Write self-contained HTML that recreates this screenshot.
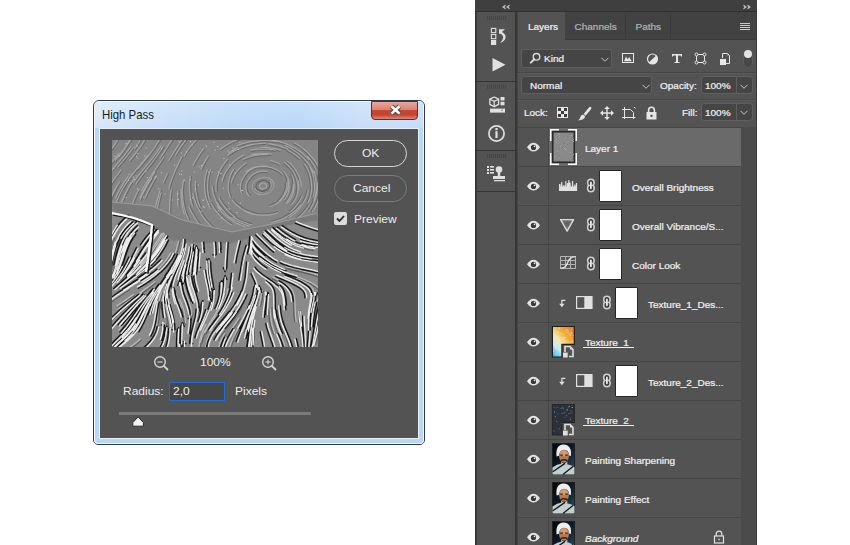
<!DOCTYPE html>
<html><head><meta charset="utf-8"><style>
html,body{margin:0;padding:0;}
body{width:850px;height:545px;overflow:hidden;background:#ffffff;position:relative;font-family:"Liberation Sans", sans-serif;}
.t{position:absolute;white-space:nowrap;}
.ps{-webkit-text-stroke:0.25px currentColor;}
.b{position:absolute;}
svg.b{overflow:visible;}
</style></head><body>
<div class="b" style="left:93px;top:100px;width:332px;height:345px;background:#b9d8f8;border:1px solid #2e3a47;box-sizing:border-box;border-radius:6px 6px 5px 5px;"></div>
<div class="b" style="left:94px;top:101px;width:330px;height:343px;box-shadow:inset 0 0 0 1px rgba(255,255,255,0.85);border-radius:5px 5px 4px 4px;"></div>
<div class="b" style="left:95px;top:102px;width:328px;height:26px;background:linear-gradient(180deg,rgba(255,255,255,0.12),rgba(255,255,255,0) 60%,rgba(0,60,160,0.03)),linear-gradient(90deg,#dcebfb 0%,#cfe4fa 18%,#c2dcf9 45%,#bfdbf9 62%,#cde3fa 85%,#c9e1fa 100%);border-radius:4px 4px 0 0;"></div>
<div class="t" style="left:101.5px;top:108.50px;font-size:12.4px;line-height:12.4px;color:#1b1b1b;transform:scaleX(0.92);transform-origin:0 0;">High Pass</div>
<div class="b" style="left:371px;top:101px;width:47px;height:19px;background:linear-gradient(#e9a79b 0%,#d98373 45%,#c8462f 50%,#c4432e 75%,#d88a79 100%);border:1px solid #6b2a20;box-sizing:border-box;border-radius:0 0 4px 4px;"></div>
<svg class="b" style="left:371px;top:101px" width="47" height="19"><path d="M20.5 5.2 L28.5 12.6 M28.5 5.2 L20.5 12.6" stroke="#474a52" stroke-width="4.6" stroke-linecap="butt"/><path d="M20.5 5.2 L28.5 12.6 M28.5 5.2 L20.5 12.6" stroke="#ffffff" stroke-width="2.6" stroke-linecap="butt"/></svg>
<div class="b" style="left:99px;top:128px;width:320px;height:311px;background:#e6f1fb;"></div>
<div class="b" style="left:100px;top:129px;width:318px;height:309px;background:#535353;"></div>
<svg class="b" style="left:112px;top:140px;overflow:hidden" width="206" height="207" viewBox="0 0 206 207"><rect width="206" height="207" fill="#858585"/><path d="M0 74.0 L0 74.0 L5 75.4 L10 76.8 L15 78.1 L20 79.5 L25 80.9 L30 82.2 L35 83.6 L40 85.0 L45 91.8 L50 94.9 L55 97.9 L60 101.0 L65 101.5 L70 102.0 L75 102.5 L80 103.0 L85 103.5 L90 104.0 L95 104.0 L100 104.0 L105 104.0 L110 104.0 L115 104.0 L120 104.0 L125 102.5 L130 101.0 L135 99.5 L140 98.0 L145 96.5 L150 95.0 L155 93.2 L160 91.4 L165 89.6 L170 87.8 L175 86.0 L180 85.2 L185 84.4 L190 83.6 L195 82.8 L200 82.0 L205 81.2 L206 207 L0 207 Z" fill="#8a8a8a"/><g fill="none" stroke-linecap="round"><path d="M99.3 67.5L98.2 65.3L97.2 63.1L96.3 60.9L95.6 58.5L95.0 56.2L94.5 53.8L94.2 51.4L94.0 49.0L93.8 46.5L93.8 44.1L93.9 41.7L94.2 39.3L94.6 36.9L95.1 34.5L95.8 32.2L96.6 29.9 M98.5 58.7L97.9 56.3L97.4 54.0L97.0 51.6L96.8 49.2L96.8 46.7L96.9 44.3L97.0 41.8L97.2 39.4L97.7 37.0L98.2 34.7L98.9 32.4L99.8 30.1 M29.0 58.4L30.0 56.1L31.1 53.9L32.3 51.7L33.4 49.5L34.7 47.4L36.0 45.3L37.3 43.2L38.6 41.1L40.0 39.0L41.3 36.9L42.7 34.8L44.1 32.7 M156.3 5.1L158.8 5.4L161.2 5.8L163.6 6.4L165.9 7.0L168.3 7.7L170.7 8.4L172.9 9.2L175.2 10.2 M125.9 6.8L128.2 5.9L130.5 5.1L132.9 4.4L135.2 3.7L137.6 3.2L140.0 2.8L142.4 2.4L144.9 2.2L147.4 1.9L149.8 1.8L152.3 1.8L154.7 1.8L157.2 1.9L159.6 2.2L162.0 2.5L164.5 3.0 M204.3 43.1L204.3 45.5L204.2 48.0L203.9 50.4L203.5 52.7L202.9 55.1L202.1 57.4L201.4 59.8L200.5 62.0L199.5 64.2L198.4 66.4L197.1 68.4L195.7 70.5 M23.5 9.8L24.9 7.7L26.3 5.6L27.7 3.4L28.9 1.2L30.2 -1.0 M4.2 21.4L5.7 19.4L7.3 17.5L8.9 15.5L10.4 13.5L12.0 11.5L13.5 9.5 M-1.5 47.1L-0.2 45.0L1.2 42.9L2.6 40.9L4.0 38.8L5.4 36.8L6.9 34.8L8.4 32.9L10.0 30.9 M170.8 32.4L172.3 34.3L173.5 36.3L174.5 38.4L175.2 40.6L175.6 42.9L175.7 45.3L175.8 47.7L175.5 50.1L175.0 52.3L174.2 54.5L173.1 56.6L171.8 58.6 M109.8 68.9L108.4 66.9L107.1 64.8L106.0 62.7L105.0 60.5L104.2 58.2L103.3 55.9L102.6 53.5L102.1 51.2L101.8 48.8L101.6 46.4 M140.9 29.1L143.3 28.4L145.6 27.9L148.0 27.6L150.5 27.3L152.8 27.3L155.3 27.4 M49.1 19.0L50.4 16.9L51.8 14.8L53.2 12.7L54.5 10.6L55.9 8.5L57.2 6.3L58.5 4.2L59.9 2.1L61.2 0.0L62.6 -2.1 M88.1 83.2L86.6 81.2L85.2 79.2L83.9 77.2L82.6 75.1L81.3 72.9L80.2 70.8L79.1 68.6L78.2 66.3 M73.3 16.7L74.6 14.5L75.9 12.5L77.3 10.4L78.7 8.5L80.2 6.5L81.8 4.6L83.4 2.7L85.1 0.9L86.8 -0.9 M158.0 21.8L160.4 22.5L162.7 23.3L165.0 24.1L167.3 25.2 M148.8 8.5L151.2 8.5L153.7 8.7L156.1 8.9L158.5 9.3L161.0 9.6L163.4 10.1L165.8 10.7L168.1 11.4 M7.7 17.6L9.3 15.7L10.8 13.7L12.3 11.7L13.8 9.6L15.2 7.5L16.6 5.4L17.9 3.3L19.3 1.1L20.5 -1.1 M29.1 60.8L30.1 58.5L31.1 56.2L32.2 54.0L33.3 51.8L34.5 49.6L35.7 47.5L37.0 45.3L38.2 43.2L39.5 41.1L40.9 39.0 M21.6 64.3L22.5 61.9L23.5 59.7L24.5 57.4L25.5 55.1L26.5 52.9L27.7 50.7 M82.3 26.1L83.3 23.9L84.5 21.7L85.7 19.6L87.0 17.5L88.3 15.4L89.7 13.4L91.2 11.4L92.7 9.5 M30.8 51.1L32.1 49.0L33.3 46.8L34.6 44.7L36.0 42.7L37.4 40.6L38.8 38.5L40.2 36.5L41.6 34.4L43.0 32.3L44.4 30.3L45.8 28.2L47.2 26.1L48.6 24.1L50.0 22.0L51.4 19.9L52.8 17.8 M116.6 16.3L118.6 14.8L120.7 13.5L122.8 12.3L124.9 11.1L127.1 10.1L129.4 9.1L131.7 8.3L134.0 7.6L136.4 6.8L138.7 6.2L141.1 5.7L143.5 5.3L146.0 5.0L148.4 4.7L150.8 4.6L153.3 4.6 M31.2 35.6L32.8 33.6L34.3 31.7L35.9 29.7L37.5 27.8L39.1 25.8L40.6 23.8L42.1 21.8L43.6 19.8L45.1 17.8L46.6 15.7L48.0 13.6L49.4 11.6L50.8 9.5L52.1 7.4 M65.1 29.6L66.1 27.4L67.2 25.1L68.3 22.9L69.4 20.7 M11.4 60.7L12.4 58.5L13.4 56.2L14.5 54.0L15.6 51.8L16.8 49.6L17.9 47.4L19.2 45.3L20.5 43.2 M120.6 43.0L121.3 40.6L122.1 38.4L123.1 36.3L124.4 34.3L125.9 32.4L127.4 30.4L129.0 28.7L130.8 27.1L132.7 25.7L134.8 24.3 M196.9 28.2L198.0 30.4L198.9 32.7L199.6 35.0L200.2 37.3L200.6 39.7L200.9 42.1L201.1 44.6L201.2 47.0L201.2 49.4L201.0 51.8L200.6 54.2L200.0 56.6 M175.2 11.2L177.3 12.4L179.4 13.7L181.4 15.1L183.5 16.5L185.4 18.0L187.2 19.6 M196.3 64.5L195.0 66.6L193.5 68.5L192.0 70.4L190.3 72.2L188.6 74.0L186.8 75.6L185.0 77.2L183.0 78.7 M181.9 4.0L184.1 5.2L186.1 6.5L188.1 7.9L190.1 9.4L192.0 11.0L193.8 12.6L195.5 14.3L197.2 16.2L198.8 18.0L200.4 19.9L201.8 21.8L203.2 23.8L204.5 25.9L205.6 28.1L206.6 30.3L207.5 32.6 M185.4 40.9L185.6 43.4L185.6 45.7L185.4 48.1L185.0 50.4L184.3 52.8L183.6 55.1L182.8 57.3L181.7 59.5L180.4 61.5L179.0 63.4 M7.0 17.8L8.6 15.8L10.1 13.9L11.7 11.8L13.1 9.8L14.6 7.7L15.9 5.6L17.3 3.4L18.6 1.3L19.8 -0.9 M45.6 72.6L46.1 70.1L46.7 67.7L47.2 65.2L47.8 62.8L48.3 60.4L48.9 58.0L49.5 55.6L50.2 53.2 M173.3 42.8L173.5 45.2L173.2 47.5L172.6 49.8L171.7 52.0L170.8 54.2L169.6 56.2L168.2 58.1L166.5 59.8 M1.3 30.6L2.9 28.7L4.5 26.8L6.1 24.8L7.7 22.9L9.3 21.0L10.9 19.1L12.5 17.1L14.0 15.2L15.6 13.2L17.1 11.2L18.6 9.2L20.1 7.1 M179.9 44.4L179.8 46.8L179.5 49.1L178.8 51.4L177.9 53.6L177.0 55.9L175.9 58.0L174.6 59.9L173.0 61.8 M188.7 13.5L190.5 15.1L192.2 16.9L194.0 18.6L195.6 20.5 M52.4 43.5L53.3 41.3L54.3 39.0L55.3 36.7L56.4 34.4 M25.2 44.1L26.6 42.0L28.0 40.0L29.5 38.0L31.0 36.0L32.5 34.1L34.1 32.1L35.6 30.2L37.2 28.2L38.8 26.3L40.4 24.3L41.9 22.3L43.4 20.3 M12.9 47.6L14.2 45.5L15.5 43.4L16.9 41.4L18.4 39.3L19.8 37.4L21.3 35.4L22.9 33.4L24.4 31.5L26.0 29.6L27.6 27.6L29.2 25.7L30.8 23.8L32.4 21.9L34.0 20.0L35.6 18.0L37.2 16.1 M207.7 43.3L207.7 45.8L207.5 48.2L207.2 50.6L206.8 53.0L206.3 55.4L205.5 57.7L204.8 60.1L204.0 62.3L203.0 64.6L201.9 66.7L200.7 68.8L199.4 70.9 M117.7 13.8L119.8 12.4L121.9 11.2L124.0 9.9L126.2 8.8 M-1.2 61.3L-0.2 59.0L0.8 56.7L1.8 54.4L2.9 52.2L4.0 50.0L5.2 47.8L6.4 45.7 M134.6 32.8L136.7 31.4L138.7 30.3L140.9 29.3L143.2 28.6L145.5 28.1L147.9 27.9L150.3 27.8L152.7 28.0L155.1 28.1L157.5 28.5L159.8 29.1L162.0 29.9L164.2 30.9L166.2 32.1L168.1 33.6L169.8 35.2 M4.9 64.0L5.9 61.7L6.8 59.5L7.8 57.2L8.9 55.0L10.0 52.8L11.2 50.6L12.4 48.4L13.6 46.3L14.9 44.2L16.2 42.1L17.6 40.0L19.0 38.0L20.5 36.0L22.0 34.0 M195.0 49.4L194.6 51.8L193.9 54.1L193.1 56.4L192.2 58.6L191.1 60.7L189.8 62.8L188.4 64.8L187.0 66.8L185.4 68.7L183.8 70.4L182.0 72.1L180.2 73.7L178.2 75.1L176.2 76.5 M77.7 79.3L76.6 77.0L75.7 74.8L74.9 72.5L74.1 70.2L73.5 67.8L73.0 65.4L72.6 63.0L72.3 60.6L72.0 58.1L71.8 55.7L71.6 53.2L71.6 50.8L71.7 48.3L71.9 45.9L72.2 43.4L72.6 41.0 M171.5 23.4L173.5 24.9L175.3 26.5L176.9 28.2L178.5 30.1L179.8 32.0L181.0 34.1L182.0 36.3L183.0 38.6L183.7 40.8L184.2 43.1L184.5 45.5L184.6 47.8L184.4 50.2L184.0 52.6 M179.0 36.0L179.9 38.3L180.5 40.6L180.8 42.9L180.9 45.3L180.7 47.6L180.2 50.0L179.8 52.4L179.1 54.7L178.1 56.8L177.0 58.9L175.6 60.8L174.0 62.7 M81.7 65.4L80.9 63.1L80.3 60.8L79.7 58.4L79.3 56.0L79.1 53.6L78.9 51.1L78.7 48.6L78.7 46.2L78.7 43.8L78.9 41.3L79.2 38.9L79.6 36.5 M8.0 70.8L8.8 68.5L9.7 66.2L10.6 63.8L11.5 61.5L12.5 59.3L13.5 57.0L14.5 54.7L15.6 52.5L16.7 50.3L17.9 48.1L19.1 46.0L20.4 43.9L21.7 41.8L23.1 39.7 M189.0 55.7L188.0 57.9L186.8 60.0L185.5 62.0L184.0 63.9L182.5 65.9L180.9 67.7L179.2 69.4L177.3 71.0 M157.0 41.9L157.9 43.9L157.8 45.9L156.9 47.7L155.4 49.0L153.3 49.8L151.2 50.7L149.1 50.8L147.0 50.3L145.2 49.2L143.7 47.5 M159.1 1.1L161.6 1.5L164.0 2.0L166.4 2.6L168.7 3.3L171.0 4.1L173.3 5.0L175.6 6.0L177.8 7.0L180.0 8.0L182.2 9.2L184.3 10.5L186.3 11.8L188.3 13.2L190.2 14.8 M-1.5 62.5L-0.5 60.2L0.5 58.0L1.5 55.7L2.6 53.5L3.7 51.3L4.8 49.1L6.0 46.9L7.3 44.8L8.6 42.7 M42.9 74.4L43.6 72.0L44.2 69.5L44.7 67.1L45.4 64.7L46.0 62.3L46.6 59.9L47.3 57.5L48.0 55.1L48.7 52.7L49.5 50.3 M137.5 84.8L135.1 84.1L132.8 83.3L130.5 82.4L128.3 81.4L126.0 80.4L123.9 79.3L121.7 78.1L119.7 76.7 M-1.6 25.8L0.0 23.9L1.7 22.0L3.3 20.1L4.9 18.1L6.4 16.2L8.0 14.2 M27.2 29.2L28.8 27.2L30.4 25.3L32.0 23.4L33.6 21.5L35.2 19.5L36.8 17.6L38.3 15.6L39.8 13.5L41.3 11.5L42.7 9.5L44.2 7.4L45.5 5.2L46.9 3.1L48.2 1.0L49.4 -1.2 M138.3 55.4L136.8 53.5L135.8 51.5L135.2 49.3L135.0 47.1L135.2 44.9L135.9 42.7L137.0 40.8L138.6 38.9L140.1 37.1L141.8 35.6L143.8 34.4L145.9 33.4L148.1 32.8L150.4 32.4L152.8 32.4L155.2 32.6 M67.3 66.3L67.1 63.8L67.0 61.4L66.9 58.9L66.9 56.4L66.9 54.0L67.1 51.5 M101.4 86.6L99.6 84.9L97.9 83.1L96.2 81.3L94.6 79.4L93.2 77.5L91.7 75.5L90.4 73.4L89.2 71.3L88.0 69.2L86.8 67.0L85.8 64.8L84.9 62.5L84.1 60.2L83.4 57.9L82.8 55.5L82.3 53.1 M174.8 22.3L176.7 23.9L178.4 25.6L180.0 27.3L181.5 29.2L182.8 31.2L184.0 33.4L185.2 35.5L186.1 37.7L186.9 40.0L187.4 42.3L187.8 44.6L187.9 47.1 M57.9 21.0L59.2 18.8L60.5 16.7L61.8 14.6L63.1 12.5L64.5 10.4L65.8 8.3L67.1 6.2L68.5 4.1L69.9 2.1L71.4 0.0 M187.9 63.7L186.4 65.7L184.8 67.5L183.0 69.2L181.2 70.7L179.3 72.2L177.3 73.6L175.2 74.8L173.0 76.1L170.9 77.2L168.7 78.2L166.4 79.1L164.1 79.8L161.7 80.5L159.3 81.0 M194.7 17.6L196.3 19.5L197.8 21.4L199.1 23.5L200.5 25.5L201.7 27.6L202.8 29.8 M90.2 29.8L91.2 27.6L92.3 25.4L93.5 23.2L94.7 21.1L96.0 19.0L97.4 17.0 M89.2 66.6L88.3 64.4L87.4 62.1L86.7 59.7L86.2 57.4L85.7 54.9L85.2 52.5L84.9 50.1L84.7 47.7L84.6 45.3L84.6 42.8 M204.9 34.5L205.4 36.9L205.8 39.3L206.3 41.7L206.5 44.2 M111.4 41.3L112.0 39.0L112.8 36.7L113.8 34.5L114.9 32.4L116.2 30.4L117.6 28.4L119.2 26.6L120.8 24.7L122.5 23.0L124.4 21.4L126.3 20.0L128.3 18.6L130.4 17.4L132.6 16.3 M-1.3 12.4L0.2 10.4L1.7 8.4L3.1 6.3L4.5 4.2L5.9 2.0L7.1 -0.1 M44.6 15.0L46.0 12.9L47.4 10.8L48.8 8.7L50.1 6.6 M130.7 52.6L130.0 50.3L129.7 48.0L129.8 45.7L130.2 43.4L130.9 41.3L132.1 39.1L133.2 37.0L134.5 35.1L136.1 33.4L137.9 31.9L139.9 30.6L142.1 29.5 M156.0 73.8L153.5 74.0L151.1 74.0L148.7 73.9L146.3 73.6L143.9 73.1L141.6 72.5L139.3 71.8L137.0 70.9L134.7 70.0L132.5 68.9L130.4 67.7L128.4 66.4L126.5 64.9L124.7 63.3L123.1 61.6L121.6 59.7 M131.5 20.5L133.8 19.5L136.0 18.6L138.3 17.9L140.7 17.3L143.1 16.8L145.5 16.4L147.9 16.0L150.3 15.9L152.8 15.8L155.2 15.9 M28.1 9.4L29.6 7.3L30.9 5.2L32.3 3.0L33.5 0.8L34.7 -1.4 M139.6 16.1L142.0 15.6L144.4 15.3L146.8 15.0L149.3 15.0L151.8 14.9L154.2 14.9L156.6 15.1L159.1 15.4 M73.4 73.7L72.8 71.3L72.2 69.0L71.7 66.6L71.3 64.1L71.0 61.7L70.7 59.2L70.5 56.8L70.4 54.3L70.4 51.9L70.4 49.4 M136.8 71.4L134.5 70.3L132.5 69.1L130.5 67.8L128.5 66.3L126.6 64.8L124.8 63.2L123.2 61.4L121.7 59.5 M138.9 11.6L141.3 11.1L143.7 10.7L146.1 10.5L148.6 10.4L151.0 10.4L153.5 10.4L155.9 10.5L158.4 10.7L160.8 11.1L163.2 11.6 M139.9 83.6L137.5 82.9L135.2 82.2L132.9 81.4L130.6 80.4L128.3 79.5L126.1 78.4L124.0 77.3L121.9 76.0 M133.7 85.6L131.4 84.8L129.2 83.9L126.9 82.8L124.8 81.7L122.7 80.5L120.6 79.2L118.6 77.7L116.6 76.3L114.7 74.8L112.9 73.1L111.2 71.4L109.6 69.6L108.0 67.7L106.6 65.7 M192.8 26.7L194.0 28.9L195.1 31.1L196.0 33.3L196.7 35.6L197.3 37.9L197.7 40.3L198.1 42.8L198.3 45.2L198.4 47.6L198.3 50.0L198.0 52.4L197.5 54.8 M174.3 40.5L174.7 42.8L174.8 45.2L174.6 47.5L174.1 49.7L173.2 51.9L172.1 53.9L170.7 55.9L169.3 57.9L167.7 59.6L165.9 61.1L164.0 62.5L161.9 63.6L159.7 64.6L157.4 65.4 M118.9 76.5L117.0 75.0L115.3 73.3L113.6 71.6L112.0 69.7L110.4 67.8L108.9 65.9L107.5 63.9L106.3 61.8 M64.6 15.8L65.9 13.7L67.2 11.6L68.5 9.5L69.9 7.5L71.3 5.4L72.8 3.4L74.2 1.4L75.8 -0.5 M123.8 75.9L121.8 74.4L119.9 72.9L118.1 71.2L116.4 69.5L114.9 67.6L113.3 65.7L111.8 63.8L110.5 61.8L109.4 59.7L108.3 57.4 M22.8 42.8L24.2 40.7L25.6 38.7L27.1 36.7L28.6 34.8L30.2 32.8L31.8 30.9L33.3 29.0L34.9 27.1L36.5 25.1L38.1 23.2L39.7 21.2L41.3 19.3L42.8 17.2L44.3 15.2 M18.6 21.5L20.2 19.5L21.8 17.6L23.4 15.6L24.9 13.6L26.4 11.6L27.9 9.6L29.4 7.5L30.8 5.4L32.2 3.3L33.5 1.2 M165.6 71.5L163.3 72.3L160.9 72.9L158.6 73.3L156.2 73.6L153.7 73.8L151.3 73.8L148.8 73.8L146.4 73.7L144.0 73.4L141.6 73.0L139.3 72.4L136.9 71.7 M191.7 24.9L193.0 26.9L194.2 29.0L195.2 31.2L196.1 33.5L196.8 35.8L197.4 38.1L197.8 40.5L198.0 42.9L198.2 45.4L198.3 47.8L198.1 50.2L197.8 52.6L197.4 54.9L196.7 57.3L196.0 59.5L195.0 61.8 M6.6 28.0L8.2 26.1L9.8 24.2L11.4 22.3L13.0 20.4L14.6 18.4L16.2 16.5L17.7 14.5L19.3 12.5L20.8 10.5L22.3 8.5 M59.0 79.7L58.9 77.2L58.8 74.8L58.8 72.3L58.8 69.8L58.9 67.3L59.0 64.8L59.1 62.4L59.2 59.9L59.5 57.4L59.7 55.0L60.1 52.5L60.5 50.1 M120.2 83.8L118.1 82.5L116.1 81.1L114.2 79.6L112.3 78.0L110.6 76.3L108.9 74.6L107.2 72.8L105.6 70.9L104.1 69.0L102.7 67.0L101.4 65.0L100.2 62.8 M57.9 49.3L58.6 46.9L59.3 44.6L60.0 42.2L60.8 39.9L61.7 37.6L62.6 35.2L63.5 32.9L64.5 30.6L65.5 28.4L66.5 26.1L67.5 23.9L68.6 21.7L69.8 19.5L71.0 17.3 M172.3 6.7L174.6 7.7L176.8 8.8L178.9 10.0L181.0 11.2L183.0 12.6L185.0 14.1L186.8 15.6L188.6 17.3L190.4 19.0L192.1 20.7L193.7 22.6L195.2 24.5L196.6 26.5L197.8 28.6L199.0 30.7L200.0 32.9 M200.4 31.5L201.2 33.8L201.9 36.1L202.4 38.5L202.7 40.9L202.9 43.3L202.9 45.8L202.9 48.2L202.8 50.6L202.5 53.0L202.0 55.4L201.4 57.7L200.6 60.1 M34.0 58.6L35.1 56.3L36.1 54.1L37.3 51.9L38.4 49.6L39.6 47.4L40.7 45.2L41.9 43.1L43.1 40.9L44.4 38.7L45.6 36.6 M109.1 10.3L111.1 8.8L113.1 7.4L115.2 6.1L117.3 4.9L119.4 3.7L121.6 2.7L123.9 1.7L126.2 0.8L128.5 -0.1L130.8 -0.9L133.2 -1.6 M105.4 51.3L105.2 48.9L105.2 46.5L105.3 44.1L105.7 41.7L106.2 39.3L106.8 37.0L107.7 34.7L108.5 32.4L109.5 30.2L110.7 28.1L111.9 26.0L113.4 24.1L114.9 22.2L116.6 20.4 M119.5 56.9L118.6 54.6L118.0 52.3L117.6 50.0L117.5 47.6L117.5 45.3L117.9 42.8L118.2 40.4L118.7 38.1L119.5 35.9L120.5 33.7L121.7 31.6L123.1 29.6 M4.7 58.8L5.7 56.5L6.8 54.3L7.9 52.1L9.1 49.9L10.4 47.8L11.6 45.6L12.9 43.5L14.2 41.4L15.6 39.4L17.1 37.3" stroke="#6a6a6a" stroke-width="1.1"/><path d="M98.1 68.1L97.0 65.9L96.0 63.6L95.1 61.3L94.3 58.9L93.7 56.5L93.2 54.0L92.9 51.6L92.7 49.1L92.5 46.6L92.5 44.1L92.6 41.6L92.9 39.1L93.3 36.6L93.8 34.2L94.5 31.8L95.4 29.4 M97.2 59.1L96.6 56.6L96.1 54.2L95.7 51.7L95.5 49.2L95.5 46.7L95.6 44.2L95.7 41.7L96.0 39.2L96.4 36.8L97.0 34.3L97.7 32.0L98.5 29.6 M27.8 57.8L28.9 55.6L30.0 53.3L31.1 51.1L32.3 48.9L33.6 46.7L34.9 44.6L36.2 42.5L37.5 40.4L38.9 38.3L40.2 36.2L41.6 34.1L43.0 32.0 M156.5 3.8L159.0 4.1L161.4 4.6L163.9 5.1L166.3 5.8L168.7 6.4L171.1 7.2L173.4 8.0L175.7 9.0 M125.4 5.6L127.8 4.7L130.1 3.8L132.5 3.1L134.9 2.5L137.4 1.9L139.8 1.5L142.3 1.1L144.8 0.9L147.3 0.6L149.8 0.5L152.3 0.5L154.8 0.5L157.3 0.7L159.7 0.9L162.2 1.2L164.7 1.7 M205.6 43.1L205.6 45.6L205.5 48.1L205.2 50.5L204.7 53.0L204.1 55.4L203.4 57.8L202.6 60.2L201.7 62.5L200.7 64.8L199.5 67.0L198.2 69.2L196.8 71.2 M22.4 9.0L23.9 7.0L25.2 4.9L26.5 2.7L27.8 0.6L29.0 -1.6 M3.2 20.5L4.7 18.6L6.3 16.7L7.9 14.7L9.4 12.7L10.9 10.7L12.4 8.7 M-2.6 46.4L-1.3 44.3L0.1 42.2L1.5 40.1L2.9 38.1L4.4 36.1L5.9 34.1L7.4 32.1L8.9 30.1 M171.8 31.6L173.3 33.5L174.7 35.7L175.7 37.9L176.4 40.3L176.9 42.8L177.0 45.3L177.1 47.8L176.8 50.3L176.3 52.7L175.4 55.0L174.2 57.3L172.8 59.3 M108.7 69.7L107.3 67.6L106.0 65.5L104.8 63.2L103.8 61.0L103.0 58.6L102.1 56.3L101.4 53.9L100.8 51.4L100.5 48.9L100.3 46.5 M140.6 27.8L143.0 27.1L145.4 26.6L147.9 26.3L150.4 26.0L152.9 26.0L155.4 26.2 M48.0 18.3L49.4 16.2L50.7 14.1L52.1 12.0L53.4 9.9L54.8 7.8L56.1 5.6L57.4 3.5L58.8 1.4L60.1 -0.7L61.5 -2.8 M87.1 84.0L85.6 82.0L84.1 80.0L82.8 77.9L81.5 75.7L80.2 73.6L79.0 71.4L77.9 69.1L77.0 66.8 M72.2 16.0L73.5 13.9L74.8 11.8L76.2 9.7L77.7 7.7L79.2 5.7L80.8 3.8L82.5 1.9L84.1 0.0L85.9 -1.8 M158.4 20.6L160.8 21.2L163.2 22.1L165.5 22.9L167.8 24.0 M148.8 7.2L151.3 7.2L153.8 7.4L156.3 7.6L158.7 8.0L161.2 8.3L163.7 8.8L166.1 9.4L168.5 10.1 M6.7 16.8L8.3 14.9L9.8 12.9L11.3 10.9L12.7 8.9L14.1 6.8L15.5 4.7L16.8 2.6L18.1 0.4L19.4 -1.7 M27.9 60.2L28.9 57.9L29.9 55.7L31.0 53.4L32.2 51.2L33.4 49.0L34.6 46.8L35.8 44.7L37.1 42.5L38.4 40.4L39.8 38.3 M20.4 63.8L21.3 61.5L22.3 59.2L23.3 56.9L24.3 54.6L25.4 52.3L26.5 50.1 M81.1 25.6L82.2 23.3L83.3 21.1L84.6 18.9L85.9 16.8L87.2 14.7L88.6 12.6L90.1 10.6L91.7 8.7 M29.7 50.5L30.9 48.3L32.2 46.2L33.5 44.0L34.9 41.9L36.3 39.9L37.7 37.8L39.1 35.7L40.5 33.7L41.9 31.6L43.3 29.5L44.7 27.5L46.1 25.4L47.5 23.3L48.9 21.2L50.3 19.2L51.7 17.1 M115.9 15.2L117.9 13.8L120.0 12.4L122.1 11.1L124.3 9.9L126.6 8.9L128.9 7.9L131.3 7.1L133.6 6.3L136.0 5.6L138.4 4.9L140.9 4.4L143.3 4.0L145.8 3.7L148.3 3.4L150.8 3.3L153.3 3.3 M30.2 34.8L31.8 32.8L33.3 30.8L34.9 28.9L36.5 27.0L38.0 25.0L39.6 23.0L41.1 21.0L42.6 19.0L44.0 17.0L45.5 15.0L46.9 12.9L48.3 10.8L49.7 8.7L51.0 6.6 M63.9 29.1L65.0 26.8L66.1 24.6L67.1 22.3L68.3 20.1 M10.2 60.2L11.2 57.9L12.2 55.7L13.3 53.4L14.5 51.2L15.6 49.0L16.8 46.8L18.1 44.6L19.4 42.5 M119.4 42.7L120.0 40.2L120.9 37.9L122.0 35.7L123.3 33.5L124.9 31.6L126.4 29.6L128.1 27.8L130.0 26.1L132.0 24.6L134.1 23.2 M198.1 27.6L199.2 29.9L200.1 32.2L200.9 34.6L201.5 37.0L201.9 39.5L202.2 42.0L202.4 44.5L202.5 47.0L202.5 49.5L202.2 52.0L201.8 54.4L201.3 56.9 M175.8 10.0L178.0 11.3L180.1 12.6L182.2 14.0L184.2 15.4L186.2 17.0L188.1 18.6 M197.4 65.2L196.0 67.3L194.5 69.3L192.9 71.2L191.2 73.1L189.5 74.9L187.7 76.6L185.8 78.2L183.8 79.8 M182.6 2.9L184.7 4.1L186.8 5.5L188.9 6.9L190.9 8.4L192.8 10.0L194.7 11.7L196.4 13.4L198.1 15.3L199.8 17.1L201.4 19.1L202.9 21.1L204.3 23.1L205.6 25.3L206.8 27.5L207.8 29.7L208.7 32.1 M186.6 40.8L186.9 43.3L186.9 45.8L186.7 48.3L186.2 50.7L185.6 53.1L184.9 55.5L183.9 57.9L182.8 60.1L181.5 62.2L180.0 64.2 M6.0 17.0L7.6 15.0L9.1 13.1L10.6 11.1L12.1 9.0L13.5 7.0L14.8 4.9L16.2 2.8L17.4 0.6L18.7 -1.6 M44.3 72.3L44.9 69.8L45.4 67.4L45.9 65.0L46.5 62.5L47.1 60.1L47.6 57.7L48.3 55.2L48.9 52.8 M174.6 42.8L174.8 45.3L174.5 47.7L173.9 50.2L172.9 52.5L172.0 54.8L170.7 56.9L169.2 58.9L167.4 60.7 M0.3 29.8L1.9 27.8L3.5 25.9L5.1 24.0L6.7 22.1L8.3 20.2L9.9 18.2L11.4 16.3L13.0 14.4L14.6 12.4L16.1 10.4L17.6 8.4L19.0 6.4 M181.2 44.4L181.1 46.9L180.7 49.4L180.1 51.8L179.1 54.1L178.2 56.4L177.0 58.6L175.6 60.7L174.0 62.6 M189.5 12.5L191.4 14.2L193.1 16.0L194.9 17.7L196.6 19.6 M51.2 43.0L52.1 40.7L53.1 38.5L54.2 36.2L55.2 33.9 M24.2 43.4L25.6 41.3L27.0 39.2L28.5 37.2L30.0 35.2L31.5 33.2L33.1 31.3L34.6 29.3L36.2 27.4L37.8 25.5L39.3 23.5L40.9 21.5L42.4 19.5 M11.8 46.9L13.1 44.8L14.4 42.7L15.9 40.6L17.3 38.6L18.8 36.6L20.3 34.6L21.9 32.6L23.4 30.7L25.0 28.7L26.6 26.8L28.2 24.9L29.8 23.0L31.4 21.0L33.0 19.1L34.6 17.2L36.2 15.3 M209.0 43.3L209.0 45.8L208.8 48.3L208.5 50.8L208.1 53.3L207.5 55.7L206.8 58.1L206.1 60.5L205.2 62.8L204.2 65.1L203.1 67.4L201.8 69.5L200.5 71.6 M117.0 12.7L119.1 11.3L121.2 10.1L123.4 8.8L125.6 7.6 M-2.4 60.7L-1.4 58.4L-0.4 56.2L0.6 53.9L1.7 51.6L2.8 49.4L4.0 47.2L5.3 45.0 M133.9 31.7L136.0 30.3L138.2 29.1L140.5 28.1L142.9 27.4L145.3 26.9L147.8 26.6L150.3 26.5L152.8 26.7L155.3 26.8L157.8 27.2L160.2 27.8L162.5 28.7L164.8 29.8L166.9 31.1L168.9 32.6L170.7 34.3 M3.7 63.6L4.7 61.2L5.6 58.9L6.7 56.7L7.7 54.4L8.8 52.2L10.0 50.0L11.3 47.8L12.5 45.6L13.8 43.5L15.1 41.4L16.5 39.3L17.9 37.2L19.4 35.2L20.9 33.2 M196.3 49.6L195.8 52.1L195.2 54.5L194.4 56.9L193.4 59.2L192.2 61.4L190.9 63.5L189.4 65.5L188.0 67.6L186.4 69.5L184.7 71.4L182.9 73.1L181.0 74.7L179.0 76.2L176.9 77.6 M76.5 79.8L75.5 77.6L74.5 75.3L73.6 72.9L72.9 70.5L72.3 68.1L71.7 65.7L71.3 63.2L71.0 60.7L70.7 58.2L70.5 55.7L70.3 53.3L70.3 50.8L70.4 48.3L70.6 45.8L70.9 43.3L71.3 40.8 M172.3 22.4L174.3 23.9L176.2 25.5L177.9 27.3L179.5 29.3L180.9 31.3L182.1 33.5L183.2 35.8L184.2 38.1L185.0 40.5L185.5 42.9L185.8 45.4L185.9 47.9L185.7 50.4L185.3 52.8 M180.3 35.6L181.1 37.9L181.8 40.4L182.1 42.8L182.2 45.3L182.0 47.8L181.5 50.3L181.0 52.7L180.3 55.1L179.3 57.4L178.1 59.6L176.6 61.6L175.0 63.5 M80.5 65.8L79.7 63.5L79.0 61.1L78.5 58.6L78.1 56.2L77.8 53.7L77.6 51.2L77.4 48.7L77.4 46.2L77.4 43.7L77.6 41.2L77.9 38.7L78.3 36.3 M6.7 70.4L7.6 68.0L8.5 65.7L9.4 63.4L10.3 61.0L11.3 58.7L12.3 56.5L13.3 54.2L14.4 51.9L15.6 49.7L16.7 47.5L18.0 45.3L19.3 43.2L20.6 41.1L22.0 39.0 M190.2 56.2L189.2 58.5L187.9 60.7L186.6 62.7L185.0 64.7L183.5 66.7L181.8 68.6L180.1 70.3L178.2 71.9 M158.3 41.4L159.2 43.7L159.1 46.2L158.0 48.5L156.1 50.1L153.8 51.0L151.4 51.9L148.9 52.1L146.5 51.5L144.4 50.2L142.7 48.4 M159.4 -0.2L161.8 0.3L164.3 0.8L166.7 1.4L169.1 2.1L171.5 2.9L173.8 3.8L176.1 4.8L178.4 5.8L180.6 6.9L182.8 8.1L185.0 9.4L187.1 10.7L189.1 12.2L191.0 13.8 M-2.7 62.0L-1.7 59.7L-0.7 57.4L0.3 55.2L1.4 52.9L2.5 50.7L3.7 48.5L4.9 46.3L6.2 44.1L7.5 42.0 M41.7 74.1L42.3 71.6L42.9 69.2L43.5 66.8L44.1 64.4L44.7 61.9L45.4 59.5L46.0 57.1L46.7 54.7L47.4 52.3L48.2 49.9 M137.1 86.1L134.7 85.4L132.3 84.6L130.0 83.6L127.7 82.6L125.5 81.6L123.2 80.4L121.1 79.2L119.0 77.8 M-2.6 25.0L-1.0 23.1L0.7 21.2L2.3 19.2L3.9 17.3L5.4 15.4L7.0 13.4 M26.2 28.3L27.8 26.4L29.4 24.5L31.0 22.6L32.6 20.7L34.2 18.7L35.8 16.8L37.3 14.8L38.8 12.8L40.2 10.8L41.7 8.7L43.1 6.6L44.4 4.5L45.8 2.4L47.1 0.3L48.3 -1.9 M137.2 56.2L135.7 54.2L134.6 52.0L133.9 49.6L133.7 47.1L134.0 44.6L134.8 42.2L136.0 40.0L137.6 38.1L139.1 36.2L141.0 34.5L143.2 33.2L145.5 32.2L147.9 31.5L150.3 31.1L152.8 31.1L155.3 31.3 M66.0 66.4L65.8 63.9L65.7 61.4L65.6 58.9L65.6 56.4L65.6 53.9L65.8 51.4 M100.5 87.5L98.7 85.8L96.9 84.0L95.2 82.2L93.6 80.3L92.1 78.3L90.7 76.2L89.3 74.1L88.1 72.0L86.8 69.8L85.7 67.6L84.6 65.3L83.7 63.0L82.8 60.6L82.1 58.2L81.5 55.8L81.0 53.4 M175.6 21.3L177.5 22.9L179.4 24.6L181.0 26.5L182.6 28.5L183.9 30.6L185.1 32.8L186.3 34.9L187.3 37.2L188.1 39.6L188.7 42.0L189.1 44.5L189.2 47.0 M56.8 20.3L58.1 18.2L59.4 16.0L60.7 13.9L62.0 11.8L63.4 9.7L64.7 7.6L66.1 5.5L67.4 3.4L68.9 1.3L70.3 -0.7 M188.9 64.6L187.4 66.5L185.7 68.4L183.9 70.1L182.0 71.7L180.0 73.3L178.0 74.7L175.8 75.9L173.7 77.2L171.4 78.4L169.2 79.4L166.8 80.3L164.5 81.1L162.0 81.7L159.6 82.3 M195.7 16.7L197.3 18.6L198.8 20.7L200.2 22.7L201.6 24.8L202.8 27.0L204.0 29.2 M89.0 29.3L90.0 27.0L91.1 24.8L92.3 22.6L93.6 20.4L94.9 18.3L96.3 16.2 M88.0 67.1L87.1 64.8L86.2 62.5L85.5 60.1L84.9 57.6L84.4 55.2L83.9 52.7L83.6 50.3L83.4 47.8L83.3 45.3L83.3 42.8 M206.1 34.2L206.7 36.6L207.1 39.1L207.5 41.5L207.8 44.0 M110.1 41.0L110.8 38.6L111.6 36.2L112.6 33.9L113.8 31.7L115.1 29.6L116.6 27.6L118.2 25.7L119.9 23.8L121.6 22.1L123.5 20.4L125.5 18.9L127.6 17.5L129.7 16.2L132.0 15.1 M-2.3 11.7L-0.9 9.6L0.6 7.6L2.0 5.6L3.4 3.5L4.7 1.4L6.0 -0.8 M43.5 14.2L44.9 12.2L46.3 10.1L47.7 8.0L49.0 5.9 M129.4 52.9L128.7 50.5L128.4 48.1L128.5 45.6L128.9 43.1L129.7 40.7L130.9 38.5L132.1 36.3L133.5 34.3L135.2 32.5L137.1 30.9L139.2 29.5L141.5 28.4 M156.0 75.1L153.6 75.3L151.1 75.3L148.6 75.1L146.1 74.8L143.6 74.4L141.2 73.8L138.8 73.0L136.5 72.1L134.2 71.2L131.9 70.1L129.7 68.9L127.7 67.5L125.7 65.9L123.8 64.3L122.1 62.4L120.6 60.5 M131.0 19.3L133.3 18.3L135.6 17.4L138.0 16.6L140.4 16.0L142.9 15.5L145.3 15.1L147.8 14.7L150.3 14.6L152.8 14.5L155.3 14.6 M27.1 8.7L28.5 6.6L29.8 4.5L31.1 2.4L32.4 0.2L33.6 -2.0 M139.4 14.9L141.8 14.4L144.3 14.0L146.8 13.8L149.3 13.7L151.8 13.6L154.3 13.6L156.8 13.8L159.2 14.1 M72.2 74.1L71.5 71.7L70.9 69.2L70.4 66.8L70.0 64.3L69.7 61.8L69.4 59.4L69.2 56.9L69.1 54.4L69.1 51.9L69.1 49.4 M136.2 72.6L133.9 71.5L131.8 70.2L129.7 68.9L127.7 67.3L125.7 65.8L123.9 64.1L122.2 62.3L120.6 60.3 M138.6 10.3L141.1 9.8L143.5 9.4L146.0 9.2L148.5 9.1L151.0 9.1L153.5 9.1L156.0 9.2L158.5 9.4L161.0 9.8L163.4 10.3 M139.6 84.8L137.2 84.2L134.8 83.4L132.4 82.6L130.1 81.6L127.8 80.7L125.6 79.6L123.4 78.4L121.2 77.1 M133.3 86.9L130.9 86.0L128.6 85.1L126.4 84.0L124.1 82.9L122.0 81.6L119.9 80.2L117.9 78.8L115.8 77.3L113.9 75.7L112.0 74.1L110.2 72.3L108.6 70.5L107.0 68.5L105.5 66.5 M193.9 26.1L195.2 28.3L196.3 30.5L197.2 32.9L197.9 35.2L198.5 37.7L199.0 40.1L199.4 42.6L199.6 45.1L199.7 47.6L199.6 50.1L199.3 52.6L198.8 55.0 M175.6 40.2L176.0 42.7L176.1 45.2L175.9 47.7L175.3 50.1L174.4 52.4L173.2 54.6L171.8 56.7L170.3 58.7L168.6 60.5L166.7 62.2L164.7 63.6L162.5 64.8L160.2 65.8L157.8 66.6 M118.1 77.5L116.2 75.9L114.3 74.2L112.6 72.4L111.0 70.5L109.4 68.6L107.8 66.7L106.4 64.6L105.2 62.4 M63.5 15.2L64.8 13.0L66.1 10.9L67.4 8.8L68.8 6.7L70.3 4.7L71.7 2.7L73.2 0.6L74.7 -1.3 M123.0 76.9L121.0 75.4L119.0 73.9L117.2 72.2L115.5 70.4L113.9 68.4L112.3 66.5L110.8 64.5L109.4 62.4L108.2 60.2L107.1 58.0 M21.7 42.1L23.1 40.0L24.6 38.0L26.1 36.0L27.6 34.0L29.2 32.0L30.8 30.1L32.3 28.2L33.9 26.2L35.5 24.3L37.1 22.4L38.7 20.4L40.2 18.5L41.8 16.5L43.2 14.5 M17.6 20.6L19.2 18.7L20.8 16.8L22.3 14.8L23.9 12.8L25.3 10.8L26.8 8.8L28.3 6.8L29.7 4.7L31.1 2.6L32.4 0.5 M166.0 72.7L163.6 73.5L161.2 74.1L158.8 74.6L156.3 74.9L153.8 75.1L151.3 75.1L148.8 75.1L146.3 75.0L143.8 74.7L141.3 74.3L138.9 73.7L136.5 72.9 M192.8 24.2L194.1 26.3L195.3 28.4L196.4 30.7L197.3 33.0L198.1 35.4L198.6 37.9L199.1 40.3L199.3 42.8L199.5 45.3L199.6 47.8L199.4 50.3L199.1 52.8L198.6 55.2L198.0 57.6L197.2 60.0L196.2 62.3 M5.6 27.2L7.2 25.3L8.8 23.4L10.4 21.5L12.0 19.5L13.6 17.6L15.2 15.7L16.7 13.7L18.3 11.7L19.8 9.7L21.2 7.7 M57.7 79.8L57.6 77.3L57.5 74.8L57.5 72.3L57.5 69.8L57.6 67.3L57.7 64.8L57.8 62.3L57.9 59.8L58.2 57.3L58.4 54.8L58.8 52.3L59.2 49.9 M119.5 84.9L117.4 83.6L115.3 82.1L113.4 80.6L111.5 79.0L109.6 77.3L107.9 75.5L106.2 73.7L104.6 71.8L103.0 69.8L101.6 67.7L100.3 65.6L99.1 63.4 M56.7 49.0L57.3 46.6L58.0 44.2L58.8 41.8L59.6 39.4L60.5 37.1L61.4 34.8L62.3 32.5L63.3 30.1L64.3 27.8L65.3 25.6L66.4 23.3L67.5 21.1L68.6 18.9L69.8 16.7 M172.8 5.5L175.1 6.5L177.4 7.6L179.6 8.8L181.7 10.2L183.8 11.6L185.8 13.1L187.7 14.7L189.5 16.4L191.3 18.1L193.1 19.9L194.7 21.7L196.3 23.7L197.7 25.8L199.0 27.9L200.1 30.1L201.2 32.4 M201.7 31.1L202.5 33.4L203.1 35.8L203.6 38.3L204.0 40.8L204.2 43.3L204.2 45.8L204.2 48.3L204.1 50.7L203.7 53.2L203.3 55.7L202.6 58.1L201.9 60.5 M32.8 58.0L33.9 55.8L35.0 53.5L36.1 51.3L37.2 49.0L38.4 46.8L39.6 44.6L40.8 42.4L42.0 40.3L43.2 38.1L44.5 35.9 M108.3 9.3L110.3 7.8L112.4 6.3L114.5 5.0L116.6 3.7L118.9 2.6L121.1 1.5L123.4 0.5L125.7 -0.4L128.1 -1.3L130.4 -2.1L132.8 -2.9 M104.1 51.4L103.9 48.9L103.9 46.4L104.0 43.9L104.4 41.4L104.9 39.0L105.6 36.6L106.5 34.3L107.3 31.9L108.4 29.6L109.5 27.4L110.9 25.3L112.3 23.3L113.9 21.4L115.6 19.5 M118.3 57.4L117.4 55.0L116.7 52.6L116.3 50.1L116.2 47.6L116.2 45.1L116.6 42.7L116.9 40.2L117.5 37.8L118.3 35.4L119.3 33.1L120.6 30.9L122.0 28.9 M3.5 58.2L4.6 55.9L5.6 53.7L6.8 51.5L8.0 49.3L9.2 47.1L10.5 44.9L11.8 42.8L13.1 40.7L14.5 38.6L16.0 36.6" stroke="#a6a6a6" stroke-width="1.1"/></g><g fill="none" transform="rotate(-12 151 46)"><ellipse cx="151" cy="46" rx="7" ry="5.5" stroke="#666" stroke-width="1.2"/><ellipse cx="151" cy="46" rx="3.5" ry="2.8" stroke="#a8a8a8" stroke-width="1"/><ellipse cx="151" cy="46" rx="11" ry="8.5" stroke="#a0a0a0" stroke-width="1"/></g><path d="M124.4 72.0h1v1h-1z M35.0 36.9h1v1h-1z M16.5 33.8h1v1h-1z M106.0 70.2h1v1h-1z M61.9 24.7h1v1h-1z M24.9 48.2h1v1h-1z M120.3 10.1h1v1h-1z M101.3 1.8h1v1h-1z M25.2 17.7h1v1h-1z M89.3 25.1h1v1h-1z M46.2 48.3h1v1h-1z M13.6 57.0h1v1h-1z M16.0 39.8h1v1h-1z M32.6 15.4h1v1h-1z M68.9 34.1h1v1h-1z M48.8 32.2h1v1h-1z M68.8 12.5h1v1h-1z M26.6 49.2h1v1h-1z M83.0 41.3h1v1h-1z M110.7 47.7h1v1h-1z M111.4 18.1h1v1h-1z M96.3 63.2h1v1h-1z M117.3 24.6h1v1h-1z M40.9 72.0h1v1h-1z M115.4 10.4h1v1h-1z M31.1 56.7h1v1h-1z M33.7 7.6h1v1h-1z M108.2 32.9h1v1h-1z M102.7 9.8h1v1h-1z M52.4 53.4h1v1h-1z M2.3 15.7h1v1h-1z M88.7 71.1h1v1h-1z M125.9 9.0h1v1h-1z M65.7 59.1h1v1h-1z M65.4 53.5h1v1h-1z M24.6 5.5h1v1h-1z M13.8 2.9h1v1h-1z M71.7 40.2h1v1h-1z M73.9 11.4h1v1h-1z M24.0 15.9h1v1h-1z M109.2 77.2h1v1h-1z M120.5 7.4h1v1h-1z M60.1 59.6h1v1h-1z M42.5 36.4h1v1h-1z M67.0 33.5h1v1h-1z M78.1 1.0h1v1h-1z M91.1 65.9h1v1h-1z M23.6 35.4h1v1h-1z M96.1 31.6h1v1h-1z M25.4 12.9h1v1h-1z M66.6 1.2h1v1h-1z M116.1 62.5h1v1h-1z M91.6 67.1h1v1h-1z M81.8 31.6h1v1h-1z M77.9 39.3h1v1h-1z M127.7 62.8h1v1h-1z M33.6 71.1h1v1h-1z M96.8 60.7h1v1h-1z M105.9 31.6h1v1h-1z M116.6 68.6h1v1h-1z M90.3 59.8h1v1h-1z M99.5 31.6h1v1h-1z M93.9 5.5h1v1h-1z M44.4 36.6h1v1h-1z M1.4 27.7h1v1h-1z M83.0 48.7h1v1h-1z M30.2 73.7h1v1h-1z M86.6 26.3h1v1h-1z M85.8 44.4h1v1h-1z M69.3 30.4h1v1h-1z M130.0 50.1h1v1h-1z M91.2 59.4h1v1h-1z M127.4 1.8h1v1h-1z M80.0 57.6h1v1h-1z M33.4 31.3h1v1h-1z M6.6 15.2h1v1h-1z M48.8 7.7h1v1h-1z M32.6 70.6h1v1h-1z M71.5 39.6h1v1h-1z M125.7 44.3h1v1h-1z M129.4 49.8h1v1h-1z M105.2 5.9h1v1h-1z M77.7 59.2h1v1h-1z M20.8 36.8h1v1h-1z M22.0 38.7h1v1h-1z M79.5 4.6h1v1h-1z M122.9 32.8h1v1h-1z" fill="#cacaca"/><path d="M0.0 62.0 L4.0 62.4 L8.0 62.8 L12.0 63.2 L16.0 63.6 L20.0 64.0 L24.0 64.4 L28.0 64.8 L32.0 65.2 L36.0 65.6 L40.0 66.0 L44.0 67.9 L48.0 69.7 L52.0 71.6 L56.0 73.5 L60.0 75.3 L64.0 77.2 L68.0 79.1 L72.0 80.5 L76.0 81.4 L80.0 82.4 L84.0 83.4 L88.0 84.3 L92.0 85.3 L96.0 86.2 L100.0 87.2 L104.0 88.2 L108.0 89.1 L112.0 90.1 L116.0 91.0 L120.0 92.0 L124.0 91.2 L128.0 90.4 L132.0 89.6 L136.0 88.8 L140.0 88.0 L144.0 87.2 L148.0 86.4 L152.0 85.6 L156.0 84.8 L160.0 84.0 L164.0 83.0 L168.0 82.1 L172.0 81.1 L176.0 80.2 L180.0 79.2 L184.0 78.3 L188.0 77.3 L192.0 76.3 L196.0 75.4 L200.0 74.4 L204.0 73.5 L206.0 80.0 L202.0 80.6 L198.0 81.3 L194.0 81.9 L190.0 82.6 L186.0 83.2 L182.0 83.9 L178.0 84.5 L174.0 85.4 L170.0 86.8 L166.0 88.2 L162.0 89.7 L158.0 91.1 L154.0 92.6 L150.0 94.0 L146.0 95.2 L142.0 96.4 L138.0 97.6 L134.0 98.8 L130.0 100.0 L126.0 101.2 L122.0 102.4 L118.0 103.0 L114.0 103.0 L110.0 103.0 L106.0 103.0 L102.0 103.0 L98.0 103.0 L94.0 103.0 L90.0 103.0 L86.0 102.6 L82.0 102.2 L78.0 101.8 L74.0 101.4 L70.0 101.0 L66.0 100.6 L62.0 100.2 L58.0 98.8 L54.0 96.3 L50.0 93.9 L46.0 91.4 L42.0 89.0 L38.0 83.5 L34.0 82.3 L30.0 81.2 L26.0 80.2 L22.0 79.0 L18.0 78.0 L14.0 76.8 L10.0 75.8 L6.0 74.7 L2.0 73.5 Z" fill="#7a7a7a"/><path d="M0.0 62.0 L4.0 62.4 L8.0 62.8 L12.0 63.2 L16.0 63.6 L20.0 64.0 L24.0 64.4 L28.0 64.8 L32.0 65.2 L36.0 65.6 L40.0 66.0 L44.0 67.9 L48.0 69.7 L52.0 71.6 L56.0 73.5 L60.0 75.3 L64.0 77.2 L68.0 79.1 L72.0 80.5 L76.0 81.4 L80.0 82.4 L84.0 83.4 L88.0 84.3 L92.0 85.3 L96.0 86.2 L100.0 87.2 L104.0 88.2 L108.0 89.1 L112.0 90.1 L116.0 91.0 L120.0 92.0 L124.0 91.2 L128.0 90.4 L132.0 89.6 L136.0 88.8 L140.0 88.0 L144.0 87.2 L148.0 86.4 L152.0 85.6 L156.0 84.8 L160.0 84.0 L164.0 83.0 L168.0 82.1 L172.0 81.1 L176.0 80.2 L180.0 79.2 L184.0 78.3 L188.0 77.3 L192.0 76.3 L196.0 75.4 L200.0 74.4 L204.0 73.5" stroke="#9c9c9c" stroke-width="1" fill="none"/><g fill="none" stroke-linecap="round" stroke-linejoin="round"><path d="M-1.3 107.7L-0.5 105.3L0.4 103.0L1.3 100.7L2.3 98.5 M173.2 127.9L175.6 128.7L178.0 129.4L180.5 130.1L182.9 130.8L185.4 131.4L187.8 132.0L190.2 132.5L192.7 133.1L195.1 133.7L197.5 134.3L199.9 135.0L202.2 135.7L204.5 136.5L206.8 137.3 M6.9 170.4L8.8 168.9L10.8 167.4L12.8 165.9L14.8 164.4L16.8 162.9L18.8 161.4L20.8 159.9L22.8 158.5L24.8 157.0L26.9 155.5L28.9 154.1L30.9 152.6L32.9 151.1L35.0 149.6 M48.1 165.1L49.8 169.1L51.4 165.1L51.5 162.6L51.7 160.2L52.1 157.8L52.6 155.5L53.2 153.1L53.8 150.7L54.5 148.4L55.3 146.1L56.3 143.8L57.3 141.6L58.4 139.4L59.5 137.2 M129.5 133.6L129.8 131.1L130.2 128.6L130.6 126.2L131.1 123.8L131.6 121.3L132.1 118.9L132.6 116.5L133.2 114.1L133.9 111.8L134.7 109.4 M-0.2 180.4L1.6 178.7L3.4 177.0L5.2 175.3L7.1 173.7L9.0 172.1L10.9 170.4L12.8 168.9L14.7 167.3L16.6 165.7L18.5 164.1L20.5 162.6L22.4 161.0L24.4 159.5L26.4 157.9L28.3 156.4L30.3 154.8 M9.0 201.2L10.8 199.4L12.5 197.6L14.3 195.8L16.0 193.9L17.6 191.9L19.2 189.9L20.7 187.9L22.2 185.8L23.6 183.7L25.0 181.6L26.4 179.5L27.7 177.3L28.9 175.1L30.2 173.0L31.4 170.8L32.7 168.7 M98.7 198.8L99.8 196.6L101.1 194.5L102.4 192.5L103.8 190.5L105.3 188.6L106.8 186.6L108.4 184.7L110.0 182.8L111.6 180.9L113.2 178.9L114.8 176.9L116.3 175.0L117.9 173.0L119.3 170.9L120.8 168.8L122.2 166.7L123.5 164.5L124.8 162.3L126.0 160.1L127.1 157.8L128.2 155.5L129.2 153.1 M137.8 103.4L139.4 107.5L141.0 103.4L139.4 102.5L139.4 105.0L139.5 102.5L137.9 103.4L138.1 106.1L138.8 108.9L140.1 111.4L141.8 113.4L143.4 115.4L145.2 117.3L147.1 119.1L149.1 120.7L151.1 122.3L153.2 123.8L155.3 125.2L157.4 126.6L159.6 127.9L161.8 129.1 M66.1 159.4L67.1 161.8L68.0 164.1L68.8 166.4L69.6 168.7L70.2 171.0L70.7 173.4L71.2 175.8L71.6 178.2L71.8 180.6L73.6 184.6L73.6 182.1L72.1 183.0 M53.2 152.0L54.0 149.7L54.9 147.4L55.9 145.1L56.9 142.9L58.0 140.7L59.1 138.5L60.3 136.3L61.5 134.1L62.7 131.9L63.9 129.7L65.0 127.5L66.2 125.3L67.3 123.0L68.4 120.7L69.4 118.4L70.4 116.0L71.2 113.6L72.0 111.1L72.6 108.6L73.1 106.1L73.5 103.5L73.7 101.0 M106.5 200.2L107.7 198.0L109.0 196.0L110.4 194.0L111.9 192.0L113.4 190.0L114.9 188.1L116.5 186.1L118.0 184.2L119.6 182.2L121.2 180.3L122.7 178.3L124.2 176.2L125.7 174.2L127.1 172.1L128.5 170.0L129.8 167.8 M118.4 210.1L119.1 207.7L119.8 205.3L120.6 203.0L121.5 200.8L122.5 198.5L123.6 196.3L124.7 194.1L125.8 191.9L127.0 189.7L128.2 187.5 M6.0 167.1L8.1 165.6L10.1 164.2L12.1 162.8L14.2 161.4L16.3 160.0L18.3 158.6L20.4 157.2L22.5 155.8 M202.5 182.9L202.8 180.4L203.2 177.9L203.6 175.5L204.0 173.1L204.5 170.7L205.1 168.3L205.7 165.9L206.3 163.5L207.0 161.1L207.6 158.6L208.2 156.2L208.8 153.6L207.5 152.5L206.3 153.7 M165.5 170.2L165.8 172.7L166.2 175.2L166.7 177.8L167.4 180.3L168.1 182.7L168.9 185.1L169.8 187.5L170.7 189.9L171.7 192.2L172.7 194.5L173.6 196.8L174.6 199.1L175.5 201.4L176.3 203.7L177.0 206.0L177.7 208.4 M132.0 192.4L132.9 190.1L133.7 187.7L134.6 185.4L135.5 183.1L136.5 180.8L137.4 178.4L138.3 176.1L139.2 173.8L140.1 171.5L141.0 169.1 M44.5 192.0L45.2 189.6L45.8 187.1L46.2 184.5L46.6 182.0L46.9 179.5L47.1 177.0L47.3 174.5L47.4 172.0L47.6 169.5L47.9 167.0L48.1 164.6L48.5 162.2L48.9 159.8L49.5 157.4L50.1 155.1L50.9 152.7 M46.8 210.6L48.2 208.5L49.4 206.2L50.5 203.8L51.5 201.4L52.2 198.9L52.8 196.4L53.4 193.9L53.9 191.3L54.2 188.8L54.3 186.2L52.8 185.2L52.8 187.7L52.9 185.2L53.0 187.7L53.0 185.2L53.1 187.7L54.7 183.6 M78.2 137.6L76.6 136.6L76.7 139.1L76.8 136.6L75.3 137.6L75.6 140.2L76.0 142.8L76.6 145.3L77.2 147.8L77.9 150.2L78.7 152.6L79.5 155.0L80.3 157.4L81.1 159.7L81.8 162.1 M148.7 166.2L149.3 163.8L149.8 161.3L150.3 158.8L150.7 156.3L151.0 153.8L149.6 152.7L149.7 155.2L151.5 151.2 M25.2 186.7L26.5 184.6L27.8 182.4L28.9 180.2L30.1 177.9L31.3 175.7L32.4 173.5 M183.0 139.8L185.4 140.6L187.7 141.5L189.9 142.5L192.1 143.6L194.1 144.8L196.1 146.1L197.8 147.6L199.0 149.2L199.7 151.1L199.8 153.4L201.5 157.4L201.7 154.9L201.8 157.4L202.1 154.9L202.2 157.4L202.4 154.9L202.5 157.4L202.8 155.0L202.8 157.5L204.8 153.6 M8.7 141.1L10.3 139.2L11.9 137.2L13.5 135.2L15.0 133.2L16.5 131.1L17.9 129.0L19.2 126.8L20.5 124.7L21.8 122.5L23.1 120.3L24.3 118.1L25.5 115.9L26.7 113.7L27.9 111.6 M-1.5 211.8L0.1 209.9L1.7 208.1L3.4 206.3L5.1 204.5L6.8 202.8L8.6 201.0L10.4 199.3L12.2 197.5L14.0 195.7L15.7 193.9 M39.4 118.2L41.0 116.2L42.5 114.2L44.0 112.1L45.4 110.0L46.8 107.9L48.1 105.8L49.4 103.6L50.6 101.4L51.8 99.1L53.0 96.9L54.1 94.7 M139.1 182.9L139.8 180.6L140.6 178.2L141.3 175.8L142.1 173.5L142.9 171.1L143.7 168.7L144.5 166.3L145.2 163.9L146.0 161.5L146.7 159.1 M176.4 127.9L178.8 128.6L181.3 129.3L183.7 129.9L186.2 130.5L188.6 131.1L191.1 131.6L193.5 132.2L195.9 132.8L198.3 133.3L200.7 134.0L203.1 134.6L205.4 135.4L207.7 136.2 M203.7 204.4L204.3 202.0L204.8 199.6L205.4 197.2L206.0 194.7L206.6 192.3L207.1 189.8L207.6 187.4L208.2 184.9L208.7 182.5L209.2 180.0L209.7 177.6L210.2 175.1 M160.0 167.7L160.1 170.2L160.2 172.8L160.5 175.3L161.0 177.9L161.5 180.4L162.2 182.9L163.0 185.3L163.8 187.7L164.7 190.1L165.6 192.5L166.6 194.8L167.7 197.1L168.7 199.3L169.6 201.6L170.6 203.9L171.4 206.2 M94.4 193.4L95.6 191.2L96.8 189.1L98.2 187.1L99.5 185.0L100.9 182.9L102.3 180.9L103.8 178.8L105.2 176.7L106.5 174.6L107.8 172.4L109.1 170.3L110.4 168.1L111.6 165.8L112.7 163.5L113.8 161.2L114.7 158.8L115.6 156.4L116.4 153.9L117.0 151.4L117.5 149.0 M64.3 206.9L65.9 211.0L65.9 208.5L65.9 211.0L67.5 207.0L67.6 204.5L67.7 202.0L67.8 199.5L67.9 197.0L68.0 194.5L68.1 192.0L66.5 191.0L64.9 192.0 M50.0 209.2L51.1 206.9L52.1 204.5L53.0 202.0L53.6 199.6L54.3 197.1L54.9 194.6L55.3 192.0L55.5 189.4L54.0 188.4L54.0 190.9L54.1 188.4L54.1 190.9L54.2 188.4L54.3 190.9L56.0 186.9 M28.0 155.1L30.1 153.6L32.1 152.1L34.1 150.6L36.1 149.1L38.0 147.5L40.0 146.0L42.0 144.4L43.9 142.8 M120.0 191.2L121.4 189.2L122.8 187.1L124.2 185.0L125.6 183.0L127.0 180.9L128.3 178.8 M62.8 154.5L63.5 156.9L64.3 159.3L65.2 161.7L66.1 164.0L67.0 166.4L67.9 168.7 M156.6 169.3L158.2 173.4L158.2 170.9L158.3 173.4L158.3 170.9L156.7 171.8L156.9 174.4L157.1 176.9L157.4 179.4L157.8 182.0L158.3 184.5L158.9 187.0L159.7 189.5L160.5 191.9L161.4 194.2 M88.4 208.3L86.9 207.4L87.1 209.9L88.7 205.9L88.9 203.5L89.3 201.2L89.9 198.8L90.5 196.4L91.3 194.2L92.2 191.9L93.2 189.7L94.2 187.5L95.4 185.3 M9.8 146.3L11.7 144.7L13.6 143.0L15.5 141.4L17.4 139.7L19.3 138.0L21.1 136.3L23.0 134.6L24.8 132.9L26.6 131.2L28.4 129.4L30.2 127.6L32.0 125.8L33.7 124.0L35.4 122.1 M0.2 211.0L1.9 209.2L3.7 207.4L5.4 205.7L7.2 204.0L9.1 202.3L10.9 200.6L12.7 198.8L14.5 197.1L16.3 195.3L18.0 193.4L19.7 191.5L21.3 189.5L22.9 187.5L24.3 185.4L25.7 183.2L27.1 181.1L28.3 178.9 M80.4 135.6L78.9 134.6L78.9 137.1L80.6 133.1L80.8 130.7L81.1 128.2L81.5 125.8L82.0 123.4L82.4 120.9L82.8 118.4L83.2 115.9L83.6 113.4L83.9 110.9L84.1 108.3L82.6 107.3L82.6 109.8L84.3 105.8 M22.8 133.9L24.6 132.1L26.4 130.3L28.1 128.5L29.8 126.6L31.5 124.8L33.2 122.8L34.8 120.9L36.4 118.9L37.9 116.9L39.4 114.9L40.9 112.9L42.4 110.8L43.8 108.8L45.2 106.7L46.6 104.6L48.0 102.5L49.3 100.3L50.6 98.1L51.9 96.0L53.1 93.8 M8.0 191.2L9.7 189.3L11.3 187.4L12.9 185.5L14.5 183.6L16.1 181.6L17.6 179.6L19.2 177.7L20.7 175.7L22.3 173.7L23.8 171.8L25.4 169.8L26.9 167.9L28.5 166.0L30.1 164.0L31.7 162.1L33.3 160.3L35.0 158.4L36.6 156.6L38.3 154.7L40.0 152.9L41.7 151.0L43.4 149.2 M136.9 197.2L137.3 194.7L137.8 192.3L138.3 189.9L138.9 187.5L139.5 185.1L140.1 182.7L140.7 180.3L141.4 177.9L142.1 175.5L142.8 173.1L143.6 170.7L144.3 168.4 M15.4 210.9L17.4 209.5L19.5 208.0L21.5 206.6L23.6 205.1L25.6 203.5L27.5 201.9L29.4 200.1 M52.4 165.4L52.9 167.9L53.4 170.3L54.0 172.8L54.5 175.2L55.0 177.6L55.5 180.1L55.9 182.5L56.3 184.9L56.5 187.3L56.6 189.8 M183.6 138.0L185.9 138.8L188.3 139.6L190.6 140.5L192.8 141.4L195.0 142.4L197.3 143.5L199.4 144.6L201.4 145.8L203.4 147.2L205.2 148.8 M107.8 210.3L108.3 207.9L109.0 205.6L109.6 203.2L110.5 201.0L111.5 198.8L112.6 196.7L113.9 194.6 M-1.1 143.4L0.2 141.3L1.5 139.2L2.8 136.9L4.0 134.7L5.2 132.4L6.2 130.1L7.2 127.7L8.1 125.3 M24.2 121.5L25.5 119.3L26.7 117.1L28.0 115.0L29.2 112.8L30.5 110.7L31.8 108.5 M16.8 189.8L18.4 187.8L19.9 185.8L21.3 183.7L22.7 181.6L24.1 179.5L25.5 177.4L26.8 175.2L28.2 173.1L29.5 171.0L30.9 168.9L32.2 166.9L33.6 164.8L35.0 162.8L36.4 160.7L37.9 158.7L39.4 156.8L40.9 154.8L42.5 152.9L44.0 150.9L45.6 149.0 M90.1 202.9L90.6 200.5L91.3 198.2L92.2 196.0L93.2 193.8L94.3 191.6L95.4 189.5L96.7 187.4L98.0 185.3L99.4 183.2L100.7 181.1L102.1 179.0L103.4 176.9L104.8 174.7L106.1 172.6L107.4 170.4L108.6 168.1L109.7 165.8L110.8 163.5L111.8 161.1L112.7 158.7L113.4 156.3L114.1 153.8 M91.8 207.4L93.5 211.4L93.6 208.9L93.7 211.4L95.4 207.5L95.7 205.1L96.3 202.8L96.8 200.4L97.5 198.1L98.4 195.9L99.5 193.8L100.7 191.7L102.0 189.6 M160.3 138.7L162.5 139.8L164.7 141.0L167.0 142.1L169.2 143.3L171.3 144.4L173.4 145.7L175.4 147.0L177.1 148.5L178.5 150.2L179.5 152.1L180.2 154.3L180.9 156.6L181.2 158.9L181.4 161.3L181.5 163.8L181.5 166.3L181.6 168.8L181.7 171.3L181.8 173.8L182.0 176.4L182.3 178.9L182.6 181.4 M47.5 129.9L49.3 128.1L51.1 126.2L52.7 124.3L54.3 122.3L55.8 120.3L57.3 118.1L58.7 116.0L59.9 113.7 M162.4 106.5L164.4 108.0L166.5 109.5L168.6 110.9L170.9 112.2L173.2 113.4L175.5 114.5L177.9 115.4L180.3 116.3L182.7 117.1L185.2 117.7L187.6 118.4L190.1 119.0L192.6 119.5L195.1 119.9L197.6 120.3L200.1 120.7L202.6 121.0L205.0 121.3L207.5 121.7 M-0.7 131.8L-0.0 129.4L0.6 126.9L1.2 124.5L1.7 122.0L2.3 119.6L2.8 117.1L3.4 114.7L4.0 112.3L4.6 109.9L5.3 107.6L6.1 105.2L6.9 102.9L7.8 100.7L8.8 98.5 M26.6 128.6L28.3 126.7L29.9 124.8L31.5 122.8L33.1 120.9L34.6 118.9L36.2 116.9L37.6 114.8L39.1 112.8L40.5 110.7L42.0 108.7L43.4 106.6L44.8 104.5L46.2 102.4L47.6 100.3L48.9 98.2L50.3 96.1L51.6 93.9 M-0.8 162.3L1.2 160.8L3.3 159.4L5.3 157.9L7.3 156.5L9.4 155.1L11.5 153.8L13.6 152.4L15.7 151.1L17.8 149.7 M164.8 93.8L166.8 95.4L168.8 96.9L170.8 98.4L172.9 99.9L175.1 101.2L177.3 102.5L179.6 103.7L181.9 104.8L184.2 105.8L186.6 106.8L189.0 107.6L191.5 108.4L194.0 109.0L196.5 109.6L199.0 110.0L201.5 110.4 M83.0 135.0L81.4 134.1L81.5 136.6L81.6 134.1L80.1 135.1L80.3 137.7L80.6 140.2L81.1 142.7L81.6 145.3L82.3 147.7L83.0 150.1 M64.6 113.7L65.5 111.3L66.3 108.8L66.9 106.4L67.5 103.9L68.0 101.4 M68.8 139.6L70.5 143.7L70.6 141.2L70.7 143.7L70.8 141.2L70.9 143.7L71.0 141.2L69.5 142.2L69.8 144.8L70.3 147.4L71.0 149.9L71.8 152.3L72.6 154.7L73.5 157.1L74.3 159.4L75.2 161.8L76.0 164.1L76.7 166.4L77.3 168.7L77.7 171.1L78.0 173.5L79.8 177.4L81.4 173.4" stroke="#5c5c5c" stroke-width="1.1"/><path d="M-2.8 107.1L-2.0 104.8L-1.1 102.4L-0.2 100.1L0.8 97.8 M173.7 126.4L176.1 127.2L178.5 127.9L180.9 128.6L183.3 129.2L185.7 129.8L188.2 130.4L190.6 131.0L193.0 131.6L195.5 132.2L197.9 132.8L200.3 133.4L202.7 134.2L205.1 135.0L207.4 135.8 M5.9 169.2L7.8 167.6L9.8 166.1L11.8 164.6L13.8 163.1L15.8 161.6L17.8 160.1L19.9 158.6L21.9 157.2L23.9 155.7L25.9 154.2L28.0 152.8L30.0 151.3L32.0 149.8L34.0 148.3 M49.7 165.0L49.8 167.5L49.8 165.0L49.9 162.5L50.1 160.0L50.5 157.6L51.0 155.1L51.6 152.7L52.2 150.3L53.0 147.9L53.8 145.5L54.8 143.2L55.8 140.9L56.9 138.7L58.1 136.5 M127.9 133.3L128.2 130.8L128.6 128.4L129.0 125.9L129.5 123.5L130.0 121.0L130.5 118.6L131.1 116.1L131.7 113.7L132.4 111.3L133.1 108.9 M-1.3 179.3L0.5 177.5L2.3 175.8L4.2 174.1L6.0 172.5L7.9 170.8L9.8 169.2L11.7 167.6L13.7 166.0L15.6 164.4L17.5 162.9L19.5 161.3L21.5 159.8L23.4 158.2L25.4 156.7L27.4 155.1L29.3 153.6 M7.8 200.0L9.6 198.3L11.4 196.5L13.1 194.7L14.8 192.8L16.4 190.9L18.0 189.0L19.4 187.0L20.9 184.9L22.3 182.9L23.7 180.8L25.0 178.6L26.3 176.5L27.5 174.3L28.8 172.2L30.1 170.0L31.3 167.9 M97.3 198.1L98.4 195.9L99.7 193.7L101.1 191.6L102.5 189.6L104.0 187.6L105.6 185.6L107.2 183.7L108.8 181.8L110.4 179.8L111.9 177.9L113.5 175.9L115.1 174.0L116.6 172.0L118.0 170.0L119.5 167.9L120.8 165.8L122.2 163.7L123.4 161.6L124.6 159.3L125.7 157.1L126.7 154.8L127.7 152.5 M139.4 103.4L139.4 105.9L139.4 103.4L139.4 100.9L139.4 103.4L139.4 100.9L139.5 103.4L139.7 105.9L140.3 108.3L141.5 110.5L143.0 112.4L144.6 114.4L146.3 116.2L148.2 117.9L150.1 119.5L152.0 121.0L154.1 122.5L156.1 123.9L158.2 125.2L160.4 126.5L162.6 127.7 M67.6 158.9L68.5 161.2L69.5 163.5L70.3 165.9L71.1 168.2L71.8 170.6L72.3 173.1L72.8 175.5L73.2 178.0L73.4 180.5L73.5 183.0L73.6 180.5L73.7 183.0 M51.7 151.5L52.5 149.1L53.4 146.8L54.4 144.5L55.5 142.2L56.6 140.0L57.7 137.8L58.9 135.6L60.1 133.4L61.3 131.2L62.4 129.0L63.6 126.7L64.8 124.5L65.9 122.3L67.0 120.0L68.0 117.7L68.9 115.4L69.7 113.1L70.4 110.7L71.1 108.2L71.5 105.8L71.9 103.3L72.1 100.8 M105.1 199.4L106.3 197.2L107.7 195.1L109.1 193.0L110.6 191.0L112.1 189.0L113.7 187.1L115.2 185.1L116.8 183.2L118.3 181.2L119.9 179.3L121.4 177.3L122.9 175.3L124.4 173.3L125.8 171.2L127.2 169.1L128.5 167.0 M116.8 209.6L117.6 207.2L118.3 204.8L119.1 202.5L120.1 200.2L121.1 197.9L122.2 195.6L123.3 193.4L124.4 191.2L125.6 189.0L126.8 186.8 M5.1 165.8L7.1 164.3L9.2 162.9L11.2 161.5L13.3 160.0L15.4 158.6L17.4 157.2L19.5 155.8L21.6 154.5 M200.9 182.7L201.3 180.2L201.6 177.7L202.0 175.2L202.4 172.8L203.0 170.3L203.5 167.9L204.1 165.5L204.8 163.1L205.4 160.6L206.1 158.2L206.7 155.8L207.2 153.4L207.4 150.9L207.9 153.3 M167.1 170.0L167.4 172.5L167.8 175.0L168.3 177.4L168.9 179.8L169.6 182.2L170.4 184.6L171.3 186.9L172.2 189.3L173.2 191.6L174.2 193.9L175.1 196.2L176.1 198.5L177.0 200.8L177.8 203.2L178.6 205.6L179.2 208.0 M130.5 191.9L131.4 189.5L132.3 187.2L133.1 184.8L134.0 182.5L135.0 180.2L135.9 177.9L136.8 175.5L137.7 173.2L138.6 170.9L139.6 168.6 M42.9 191.6L43.7 189.2L44.2 186.7L44.7 184.3L45.0 181.8L45.3 179.3L45.5 176.8L45.7 174.3L45.8 171.8L46.0 169.4L46.3 166.9L46.5 164.4L46.9 161.9L47.4 159.5L47.9 157.0L48.6 154.6L49.4 152.2 M45.5 209.7L46.8 207.6L48.0 205.4L49.1 203.2L49.9 200.8L50.7 198.4L51.3 196.0L51.8 193.6L52.3 191.1L52.6 188.6L52.7 186.1L52.7 183.6L52.8 186.1L52.8 183.6L52.9 186.1L52.9 183.6L53.0 186.1L53.1 183.6 M76.6 137.5L76.6 135.0L76.7 137.5L76.8 135.0L76.9 137.5L77.1 140.0L77.6 142.5L78.2 144.9L78.7 147.3L79.4 149.7L80.2 152.1L81.0 154.5L81.8 156.8L82.6 159.2L83.3 161.6 M147.2 165.9L147.7 163.4L148.2 161.0L148.7 158.5L149.1 156.1L149.4 153.6L149.6 151.1L149.7 153.6L149.9 151.1 M23.8 185.9L25.1 183.8L26.4 181.6L27.5 179.4L28.7 177.2L29.9 175.0L31.0 172.7 M183.6 138.3L185.9 139.1L188.3 140.1L190.6 141.1L192.8 142.2L195.0 143.4L197.0 144.8L198.9 146.5L200.4 148.4L201.3 150.8L201.4 153.3L201.5 155.8L201.8 153.3L201.9 155.8L202.1 153.3L202.2 155.8L202.5 153.3L202.6 155.8L202.9 153.4L202.9 155.9L203.2 153.4 M7.5 140.1L9.1 138.2L10.7 136.2L12.2 134.2L13.7 132.2L15.1 130.2L16.5 128.1L17.8 126.0L19.2 123.9L20.5 121.7L21.7 119.6L22.9 117.4L24.1 115.2L25.3 113.0L26.5 110.8 M-2.7 210.8L-1.1 208.9L0.5 207.0L2.2 205.2L3.9 203.4L5.7 201.6L7.5 199.9L9.3 198.1L11.1 196.4L12.8 194.6L14.6 192.8 M38.2 117.2L39.7 115.3L41.2 113.3L42.7 111.2L44.1 109.2L45.4 107.1L46.7 104.9L48.0 102.8L49.2 100.6L50.4 98.4L51.6 96.2L52.7 94.0 M137.6 182.5L138.3 180.1L139.1 177.7L139.8 175.3L140.6 173.0L141.4 170.6L142.2 168.2L142.9 165.8L143.7 163.4L144.4 161.1L145.1 158.7 M176.9 126.4L179.3 127.1L181.7 127.7L184.1 128.4L186.5 128.9L189.0 129.5L191.4 130.1L193.9 130.6L196.3 131.2L198.7 131.8L201.1 132.4L203.5 133.1L205.9 133.9L208.3 134.7 M202.1 204.1L202.7 201.6L203.3 199.2L203.9 196.8L204.5 194.3L205.0 191.9L205.6 189.5L206.1 187.0L206.6 184.6L207.1 182.1L207.6 179.7L208.1 177.2L208.7 174.8 M161.6 167.6L161.7 170.1L161.8 172.6L162.1 175.1L162.5 177.6L163.1 180.0L163.7 182.4L164.5 184.8L165.3 187.2L166.2 189.5L167.1 191.8L168.1 194.1L169.1 196.4L170.1 198.7L171.1 201.0L172.0 203.3L172.9 205.7 M93.0 192.6L94.2 190.4L95.5 188.3L96.8 186.2L98.2 184.1L99.6 182.0L101.0 180.0L102.4 177.9L103.8 175.8L105.2 173.7L106.5 171.6L107.8 169.5L109.0 167.3L110.2 165.1L111.3 162.8L112.3 160.6L113.2 158.2L114.1 155.9L114.8 153.5L115.4 151.1L116.0 148.6 M65.9 206.9L65.9 209.4L65.9 206.9L65.9 209.4L66.0 206.9L66.0 204.4L66.1 201.9L66.2 199.4L66.3 196.9L66.4 194.4L66.5 191.9L66.5 189.4L66.5 191.9 M48.6 208.5L49.7 206.2L50.6 203.9L51.4 201.5L52.1 199.1L52.8 196.7L53.3 194.3L53.7 191.8L53.9 189.3L54.0 186.8L54.0 189.3L54.1 186.8L54.2 189.3L54.3 186.8L54.3 189.3L54.4 186.8 M27.1 153.8L29.1 152.3L31.1 150.8L33.1 149.3L35.1 147.8L37.1 146.3L39.0 144.7L41.0 143.2L42.9 141.6 M118.6 190.3L120.0 188.3L121.5 186.2L122.8 184.1L124.2 182.1L125.6 180.0L127.0 177.9 M64.3 154.0L65.0 156.4L65.8 158.8L66.7 161.1L67.6 163.5L68.5 165.8L69.4 168.1 M158.2 169.3L158.2 171.8L158.2 169.3L158.3 171.8L158.3 169.3L158.3 171.8L158.5 174.3L158.7 176.7L159.0 179.2L159.4 181.7L159.9 184.2L160.5 186.6L161.2 189.0L162.0 191.3L162.9 193.7 M86.8 208.3L86.8 205.8L87.0 208.3L87.1 205.8L87.3 203.3L87.7 200.8L88.4 198.4L89.0 196.0L89.8 193.6L90.7 191.3L91.7 189.0L92.8 186.8L94.0 184.6 M8.8 145.1L10.7 143.4L12.6 141.8L14.5 140.2L16.3 138.5L18.2 136.9L20.1 135.2L21.9 133.5L23.7 131.8L25.5 130.0L27.3 128.3L29.1 126.5L30.8 124.7L32.5 122.9L34.2 121.1 M-0.9 209.9L0.8 208.1L2.5 206.3L4.3 204.6L6.1 202.8L8.0 201.1L9.8 199.4L11.6 197.7L13.4 195.9L15.1 194.2L16.8 192.3L18.5 190.4L20.1 188.5L21.6 186.5L23.0 184.5L24.4 182.4L25.7 180.2L26.9 178.1 M78.8 135.5L78.9 133.0L78.9 135.5L79.0 133.0L79.2 130.5L79.6 128.0L80.0 125.5L80.4 123.1L80.8 120.6L81.2 118.2L81.7 115.7L82.0 113.2L82.3 110.7L82.5 108.2L82.6 105.7L82.6 108.2L82.7 105.7 M21.7 132.8L23.5 131.0L25.2 129.2L27.0 127.4L28.7 125.6L30.3 123.7L31.9 121.8L33.5 119.9L35.1 117.9L36.6 116.0L38.1 114.0L39.6 111.9L41.1 109.9L42.5 107.9L43.9 105.8L45.3 103.7L46.6 101.6L47.9 99.5L49.2 97.3L50.5 95.2L51.7 93.0 M6.8 190.2L8.5 188.3L10.1 186.4L11.7 184.5L13.3 182.5L14.8 180.6L16.4 178.6L17.9 176.7L19.5 174.7L21.0 172.7L22.6 170.8L24.1 168.8L25.7 166.9L27.3 164.9L28.9 163.0L30.5 161.1L32.1 159.2L33.8 157.3L35.4 155.5L37.1 153.6L38.8 151.8L40.5 150.0L42.2 148.1 M135.3 196.9L135.8 194.4L136.2 192.0L136.8 189.5L137.3 187.1L137.9 184.7L138.6 182.2L139.2 179.8L139.9 177.4L140.6 175.0L141.3 172.6L142.0 170.3L142.8 167.9 M14.4 209.6L16.5 208.2L18.5 206.7L20.6 205.3L22.6 203.8L24.6 202.3L26.5 200.7L28.3 199.0 M54.0 165.1L54.5 167.5L55.0 170.0L55.5 172.4L56.1 174.9L56.6 177.3L57.1 179.8L57.5 182.2L57.9 184.7L58.1 187.2L58.2 189.7 M184.1 136.5L186.4 137.3L188.8 138.1L191.1 139.0L193.5 139.9L195.7 141.0L198.0 142.0L200.2 143.2L202.3 144.5L204.4 146.0L206.2 147.6 M106.2 210.0L106.7 207.5L107.4 205.1L108.1 202.7L109.0 200.4L110.1 198.1L111.2 195.9L112.5 193.8 M-2.5 142.6L-1.2 140.4L0.2 138.3L1.4 136.2L2.6 134.0L3.7 131.7L4.7 129.4L5.7 127.1L6.6 124.8 M22.8 120.6L24.1 118.5L25.3 116.3L26.6 114.2L27.8 112.0L29.1 109.8L30.4 107.7 M15.6 188.8L17.1 186.8L18.6 184.8L20.0 182.8L21.4 180.7L22.8 178.6L24.1 176.5L25.5 174.4L26.8 172.3L28.2 170.2L29.5 168.1L30.9 166.0L32.3 163.9L33.7 161.8L35.1 159.8L36.6 157.8L38.1 155.8L39.7 153.8L41.2 151.9L42.8 149.9L44.3 148.0 M88.6 202.5L89.1 200.1L89.8 197.7L90.7 195.4L91.7 193.1L92.8 190.8L94.1 188.7L95.3 186.5L96.7 184.4L98.0 182.3L99.4 180.2L100.7 178.1L102.1 176.0L103.4 173.9L104.7 171.7L106.0 169.6L107.2 167.4L108.3 165.2L109.3 162.9L110.3 160.6L111.1 158.2L111.9 155.8L112.5 153.4 M93.4 207.3L93.5 209.8L93.6 207.3L93.7 209.8L93.8 207.3L94.1 204.8L94.7 202.4L95.3 200.0L96.0 197.6L97.0 195.3L98.1 193.0L99.3 190.9L100.7 188.8 M161.0 137.3L163.2 138.4L165.5 139.6L167.7 140.7L169.9 141.9L172.1 143.1L174.3 144.3L176.3 145.7L178.2 147.4L179.8 149.3L181.0 151.5L181.7 153.9L182.4 156.3L182.8 158.7L183.0 161.2L183.1 163.7L183.1 166.2L183.2 168.7L183.3 171.2L183.4 173.7L183.6 176.2L183.8 178.7L184.2 181.2 M46.4 128.7L48.2 127.0L49.9 125.2L51.5 123.3L53.0 121.3L54.6 119.3L56.0 117.3L57.3 115.1L58.5 113.0 M163.4 105.2L165.3 106.7L167.4 108.2L169.5 109.5L171.6 110.8L173.9 111.9L176.1 113.0L178.4 113.9L180.8 114.8L183.2 115.5L185.6 116.2L188.0 116.8L190.4 117.4L192.9 117.9L195.4 118.3L197.8 118.7L200.3 119.1L202.8 119.4L205.3 119.8L207.7 120.1 M-2.3 131.3L-1.6 128.9L-1.0 126.5L-0.4 124.1L0.2 121.7L0.7 119.2L1.3 116.8L1.9 114.3L2.4 111.9L3.1 109.5L3.8 107.1L4.5 104.7L5.4 102.4L6.3 100.1L7.4 97.8 M25.4 127.5L27.1 125.7L28.7 123.8L30.3 121.8L31.8 119.9L33.4 117.9L34.9 115.9L36.3 113.9L37.8 111.9L39.2 109.8L40.7 107.8L42.1 105.7L43.5 103.6L44.9 101.5L46.2 99.5L47.6 97.3L48.9 95.2L50.2 93.1 M-1.7 161.0L0.3 159.5L2.3 158.1L4.4 156.6L6.4 155.2L8.5 153.8L10.6 152.4L12.7 151.1L14.8 149.7L16.9 148.4 M165.8 92.5L167.8 94.1L169.7 95.6L171.7 97.1L173.8 98.5L175.9 99.9L178.1 101.1L180.3 102.3L182.6 103.3L184.8 104.4L187.2 105.3L189.5 106.1L191.9 106.8L194.3 107.5L196.8 108.0L199.2 108.4L201.7 108.8 M81.4 135.0L81.4 132.5L81.5 135.0L81.5 132.5L81.6 135.0L81.9 137.5L82.2 140.0L82.6 142.4L83.2 144.9L83.8 147.3L84.6 149.7 M63.1 113.2L64.0 110.8L64.7 108.4L65.3 106.0L65.9 103.6L66.4 101.1 M70.4 139.6L70.5 142.1L70.6 139.6L70.7 142.1L70.8 139.6L70.9 142.1L71.0 139.6L71.1 142.1L71.4 144.6L71.9 147.0L72.6 149.4L73.3 151.8L74.1 154.2L75.0 156.5L75.8 158.9L76.7 161.2L77.5 163.6L78.3 166.0L78.9 168.4L79.3 170.9L79.6 173.3L79.7 175.8L79.8 173.3" stroke="#bebebe" stroke-width="1.1"/><path d="M102.7 168.5L103.8 166.2L104.6 164.0L105.4 161.7L106.1 159.4L106.7 157.0L107.1 154.6L107.5 152.2L107.9 149.8L108.1 147.4L108.2 144.9L109.9 140.8L111.7 144.9 M56.9 158.1L56.9 155.7L55.4 154.8L55.4 157.3L55.6 154.8L53.9 155.7L54.1 158.3L54.5 160.9L55.1 163.4L55.6 165.9L56.2 168.3L56.9 170.8L57.6 173.2L58.3 175.6L59.0 177.9L59.5 180.3L60.0 182.7 M55.5 156.9L55.6 159.4L55.9 161.8L56.2 164.1L56.7 166.5L57.3 168.9L57.9 171.4L58.5 173.8L59.1 176.2L59.6 178.7L60.1 181.2L60.5 183.7L60.8 186.3 M19.8 189.1L21.2 187.0L22.5 185.0L23.8 182.9L25.0 180.8L26.2 178.6L27.3 176.4L28.5 174.2L29.6 171.9L30.7 169.7L31.9 167.5L33.0 165.2L34.2 163.0 M187.0 171.3L188.7 175.5L188.7 173.0L187.1 173.8L187.2 176.3L187.3 178.9L187.4 181.4L187.7 183.9L187.9 186.4 M188.7 99.3L191.0 100.0L193.4 100.7L195.7 101.3L198.1 101.8L200.5 102.2L203.0 102.6L205.4 102.9L207.9 103.3 M198.2 190.1L198.2 187.6L198.2 185.1L198.3 182.7L198.4 180.2L198.6 177.7L198.8 175.3L199.1 172.8L199.4 170.4L199.8 167.9L200.2 165.5L200.6 163.1L201.1 160.6L201.5 158.1L201.9 155.6 M200.2 205.1L200.8 202.6L201.4 200.2L202.0 197.8L202.6 195.3L203.1 192.9L203.7 190.5L204.2 188.1L204.8 185.6L205.3 183.2L205.8 180.7L206.3 178.3L206.9 175.8 M85.8 181.4L86.6 179.1L87.3 176.7L87.9 174.4L88.4 172.0L88.7 169.6L88.9 167.3L89.0 164.8L90.7 160.6L90.8 163.1L90.9 160.6L91.0 163.1L91.0 160.6L91.1 163.1L89.5 162.3 M143.0 127.2L144.5 129.1L146.1 130.8L147.9 132.3L149.8 133.8L151.8 135.3L153.8 136.7L155.9 138.1L158.0 139.5L160.0 141.0L162.1 142.5L164.1 144.0L166.1 145.6L168.1 147.5L169.8 149.6L171.2 152.0L172.2 154.6L172.7 157.2L173.1 159.8L173.3 162.3L173.5 164.9L173.7 167.4L173.9 169.8 M201.1 186.8L201.3 184.3L201.5 181.9L201.8 179.4L202.1 177.0L202.5 174.5L202.8 172.1L203.2 169.6L203.7 167.2L204.3 164.8L204.8 162.4 M3.5 208.7L5.3 207.0L7.3 205.4L9.2 203.8L11.1 202.2L13.0 200.6L14.9 199.0L16.7 197.3L18.4 195.6L20.1 193.8L21.8 192.0L23.3 190.2L24.7 188.2L26.1 186.2L27.3 184.1L28.5 182.0L29.6 179.8L30.6 177.6L31.6 175.3 M135.4 168.6L136.3 166.3L137.2 164.0L138.1 161.7L138.9 159.4L139.7 157.0L140.4 154.7L140.9 152.4L141.3 149.9L141.7 147.6L143.5 143.6L143.7 146.0L143.8 143.5L144.0 146.0L144.1 143.5L144.3 146.0L142.8 145.2 M127.4 188.8L128.6 186.6L129.8 184.4L130.9 182.2L132.1 180.0L133.3 177.8L134.4 175.5L135.5 173.3L136.7 171.0L137.7 168.7L138.8 166.5 M47.3 208.3L48.5 206.2L49.6 204.0L50.5 201.8L51.2 199.5L51.9 197.2L52.4 194.9L52.7 192.5L53.0 190.1L54.8 186.0L54.8 188.5L53.2 187.6 M1.8 124.9L2.4 122.5L3.1 120.1L3.7 117.6L4.3 115.2L5.0 112.8L5.7 110.3L6.5 107.9L7.3 105.5L8.2 103.1L9.1 100.8L10.2 98.4L11.4 96.1L12.8 93.9L14.2 91.8 M126.8 140.0L127.2 137.5L127.6 135.1L128.0 132.6L128.4 130.1L128.8 127.6L129.2 125.1L129.6 122.7L130.1 120.2L130.6 117.7L131.2 115.2L131.9 112.8L132.6 110.4L133.3 107.9L134.1 105.5 M25.4 135.7L27.3 134.1L29.2 132.4L31.1 130.7L33.0 129.0L34.8 127.3L36.6 125.5L38.4 123.7L40.1 121.8L41.8 119.9L43.4 118.0L45.1 116.1L46.6 114.0L48.1 112.0L49.6 109.8L50.9 107.7L52.2 105.5L53.4 103.2L54.5 100.9 M153.2 90.4L155.0 92.2L156.8 93.9L158.6 95.6L160.4 97.3L162.2 99.0L164.0 100.7L165.9 102.3L167.8 103.9L169.7 105.3L171.7 106.7L173.7 108.1L175.9 109.3 M49.8 200.3L50.6 197.8L51.3 195.3L51.8 192.7L52.2 190.2L52.4 187.6L52.4 185.1L50.8 184.2L50.8 186.7L50.9 184.2L50.9 186.7L51.0 184.2L49.4 185.0 M134.5 210.1L135.1 207.7L135.6 205.3L136.0 202.9L136.4 200.4L136.7 198.0L136.9 195.5 M88.7 127.4L87.0 128.2L85.4 127.4L85.5 124.8L85.7 122.3L85.9 119.8L86.1 117.3L86.2 114.8L86.4 112.4 M-2.5 158.6L-0.5 157.1L1.6 155.7L3.6 154.2L5.7 152.8L7.8 151.4L9.9 150.1L12.0 148.7L14.1 147.3L16.2 146.0L18.3 144.6L20.5 143.3L22.6 142.0L24.7 140.6L26.8 139.3 M2.6 121.1L3.3 118.7L3.9 116.3L4.5 113.9L5.2 111.4L6.0 109.0L6.8 106.6L7.8 104.2L8.8 101.8L9.9 99.5L11.0 97.2L12.3 95.0L13.7 92.8L15.2 90.7L16.9 88.7L18.6 86.8L20.5 85.0L22.4 83.3L24.4 81.7 M6.1 134.9L7.3 132.6L8.3 130.3L9.3 127.9L10.2 125.6L11.1 123.2L11.9 120.8L12.7 118.4L13.5 116.0L14.3 113.7L15.1 111.3L15.9 109.0L16.8 106.7L17.7 104.5L18.7 102.3L19.9 100.1L21.1 98.1L22.5 96.1L23.9 94.1 M141.4 101.4L141.9 103.6L143.0 105.5L144.5 107.2L146.1 109.0L147.8 110.8L149.6 112.5L151.4 114.1L153.3 115.6 M6.1 184.8L7.7 182.9L9.3 181.0L11.0 179.1L12.6 177.2L14.2 175.3L15.8 173.4L17.4 171.5L19.1 169.6L20.7 167.7L22.3 165.8L24.0 163.9L25.7 162.1L27.4 160.2L29.1 158.4L30.8 156.5L32.5 154.7 M190.5 176.0L190.5 178.5L190.6 181.1L190.7 183.6L190.9 186.1L191.1 188.6L191.2 191.1L191.4 193.6L191.5 196.1L191.6 198.5L191.7 201.0L191.7 203.5L191.7 206.0L193.4 210.2L193.5 207.7L193.5 210.2L193.5 207.7L193.5 210.2L193.5 207.7L193.5 210.2L193.5 207.7L193.5 210.2L195.3 206.0 M82.8 197.7L83.5 195.2L84.3 192.8L85.1 190.4L86.1 188.0L87.1 185.7L88.0 183.4L89.0 181.1L90.0 178.8L91.0 176.5L91.9 174.2L92.8 171.9L93.5 169.6 M175.6 97.5L177.7 98.8L179.8 100.0L182.0 101.0L184.2 102.0L186.5 102.9L188.8 103.6L191.1 104.4L193.5 105.1L195.8 105.7L198.2 106.1L200.7 106.6L203.1 106.9 M71.6 136.4L72.2 134.0L72.8 131.6L73.4 129.2L74.1 126.9L74.9 124.5L75.6 122.1L76.3 119.7L77.0 117.2L77.6 114.8L78.2 112.3L78.6 109.7L78.9 107.2 M167.0 140.6L169.2 141.9L171.3 143.3L173.5 144.9L175.4 146.8L177.0 148.9L178.6 151.1L179.8 153.6L180.6 156.2L181.0 158.8L181.3 161.4 M153.7 183.5L154.2 186.0L154.9 188.4L155.7 190.9L156.5 193.3L157.3 195.7L158.2 198.0L159.0 200.4L159.9 202.7L160.6 205.0L161.3 207.4 M-3.1 144.2L-1.5 142.2L-0.0 140.2L1.4 138.2L2.8 136.2L4.1 134.2L5.4 132.1L6.6 129.9L7.8 127.8L8.8 125.6 M108.1 190.7L109.6 188.7L111.2 186.8L112.8 184.9L114.4 183.0L116.0 181.1L117.6 179.1L119.2 177.2L120.8 175.2 M-3.7 190.3L-2.1 188.4L-0.5 186.5L1.2 184.6L2.9 182.7L4.6 180.8L6.3 179.0L8.0 177.1L9.7 175.3L11.4 173.5L13.1 171.7L14.9 169.9L16.6 168.1L18.4 166.3L20.1 164.5L21.9 162.7L23.7 160.9L25.5 159.2L27.3 157.5L29.1 155.7L31.0 154.0 M153.7 174.6L153.7 172.1L153.8 169.5L154.0 167.0L154.2 164.5L154.4 162.0L154.6 159.6L154.7 157.1L156.5 153.0L156.6 155.5L154.9 154.6 M38.9 196.1L40.1 193.8L41.1 191.4L42.0 188.9L42.7 186.5L43.3 184.0L43.9 181.5L44.3 179.0L44.7 176.5L45.1 174.0L45.5 171.5L45.8 169.1L46.2 166.6L46.7 164.2L47.2 161.8 M148.8 116.4L150.7 117.9L152.7 119.3L154.7 120.7L156.7 122.1L158.8 123.3L161.0 124.5L163.2 125.7L165.3 126.9L167.5 127.9L169.8 128.9L172.1 129.9L174.4 130.8 M96.3 189.5L97.7 187.4L99.2 185.4L100.7 183.3L102.2 181.3L103.8 179.4L105.3 177.4L106.8 175.4L108.2 173.4L109.7 171.4L111.1 169.4L112.5 167.3L113.8 165.3L115.0 163.1L116.2 161.0L117.3 158.8L118.4 156.6L119.3 154.4L120.2 152.1 M168.0 122.8L170.3 123.8L172.7 124.8L175.1 125.6L177.6 126.4L180.0 127.1L182.5 127.8L184.9 128.4L187.4 128.9L189.8 129.5L192.3 130.0L194.7 130.5L197.2 131.0L199.6 131.5L202.0 132.1L204.4 132.7L206.8 133.4 M135.1 208.2L135.5 205.8L135.8 203.4L136.2 200.9L136.4 198.5L136.7 196.0L137.0 193.5L137.3 191.0L137.7 188.5L138.0 186.0L138.5 183.5L138.9 181.0L139.5 178.5L140.1 176.0L140.7 173.6L141.4 171.2L142.1 168.8L142.8 166.3 M123.6 164.4L124.8 162.2L125.9 160.1L127.0 157.9L128.0 155.6L128.9 153.4L129.7 151.1L130.4 148.7L131.1 146.4L131.6 144.0L132.2 141.6L132.7 139.2L133.1 136.8L133.4 134.4L133.6 131.9L133.9 129.4L134.1 126.9L134.3 124.4L134.5 121.9 M152.0 123.0L154.1 124.4L156.2 125.8L158.4 127.0L160.7 128.2L163.0 129.4L165.3 130.4L167.6 131.4L169.9 132.4L172.3 133.4L174.7 134.2L177.1 135.1L179.5 135.9L181.9 136.6L184.3 137.4 M9.1 196.1L10.8 194.3L12.5 192.5L14.1 190.7L15.6 188.8L17.1 186.9L18.5 184.9L19.9 182.8L21.3 180.8L22.6 178.7L23.8 176.5L25.1 174.4L26.4 172.2L27.7 170.1L28.9 167.9L30.2 165.8L31.6 163.6L32.9 161.5L34.3 159.4L35.8 157.3L37.2 155.3L38.7 153.2L40.2 151.2 M26.0 137.7L28.1 136.3L30.1 134.9L32.2 133.5L34.2 132.0L36.1 130.5L38.1 129.0L40.0 127.5L41.9 125.9L43.8 124.3L45.5 122.6L47.3 120.9L48.9 119.1 M-3.8 147.6L-2.1 145.8L-0.5 143.9L1.1 142.0L2.7 140.1L4.2 138.2L5.7 136.2L7.1 134.2L8.5 132.1L9.8 130.1L11.1 128.0L12.3 125.9L13.5 123.7L14.6 121.5L15.7 119.3L16.8 117.1 M11.0 106.5L11.9 104.2L13.1 101.8L14.3 99.6L15.6 97.3L17.1 95.2L18.5 93.1L20.1 91.1L21.8 89.1L23.7 87.3L25.5 85.6 M34.7 105.4L36.1 103.4L37.5 101.3L39.0 99.3L40.5 97.3L42.0 95.3L43.5 93.2L45.0 91.2 M26.8 191.8L28.1 189.6L29.4 187.4L30.6 185.2L31.8 182.9L32.8 180.5L33.8 178.2L34.8 175.9L35.8 173.6L36.8 171.3L37.7 169.0L38.7 166.8L39.7 164.5 M102.0 199.7L103.2 197.4L104.5 195.1L105.9 193.0L107.4 190.9L109.0 188.9L110.5 186.9L112.1 185.0L113.7 183.0L115.2 181.1L116.8 179.1L118.4 177.2L119.9 175.2L121.3 173.3L122.8 171.2 M65.8 145.3L67.5 141.1L67.6 143.6L67.7 141.1L67.8 143.6L67.8 141.1L68.0 143.6L68.0 141.1L68.2 143.6L68.2 141.1L70.2 145.1L70.6 147.5L71.0 149.9L71.5 152.2L72.2 154.5L73.0 156.8L73.9 159.1L74.8 161.4L75.7 163.8L76.5 166.2L77.3 168.7L77.9 171.2L78.3 173.8 M-0.9 208.6L0.9 206.8L2.7 205.0L4.6 203.3L6.4 201.6L8.3 199.9L10.1 198.2L11.9 196.5L13.7 194.8L15.4 193.1L17.1 191.3L18.7 189.4L20.2 187.5L21.6 185.5 M52.7 210.1L53.5 207.7L54.2 205.4L54.8 203.0L55.3 200.7L55.7 198.3L56.0 195.9L56.3 193.4L56.4 191.0L56.5 188.5 M95.2 122.8L96.9 118.6L96.9 121.1L96.9 118.6L97.0 121.1L97.0 118.6L97.0 121.1L97.0 118.6L97.0 121.1L97.0 118.6L98.8 122.7L98.8 125.2L98.9 127.7L99.1 130.1L99.3 132.6L99.6 135.0L100.0 137.4L100.4 139.9L100.9 142.3L101.3 144.8L101.7 147.3 M20.5 125.1L22.0 123.0L23.4 121.0L24.8 119.0L26.1 116.9L27.5 114.8L28.8 112.7L30.2 110.6L31.5 108.5L32.9 106.4L34.3 104.3 M163.8 136.6L166.1 137.7L168.4 138.7L170.7 139.7L173.0 140.7L175.3 141.6L177.6 142.6L179.8 143.7L182.0 144.8L184.2 145.9L186.2 147.1L188.2 148.4L189.9 149.9L191.4 151.5L192.3 153.4L192.8 155.5L192.9 157.8 M190.3 102.9L192.6 103.6L195.0 104.1L197.4 104.6L199.8 105.0L202.3 105.3L204.7 105.6L207.2 105.9L209.7 106.2 M168.4 165.9L168.5 168.3L168.8 170.8L169.1 173.2L169.5 175.6L170.0 178.0L170.6 180.3L171.4 182.6L172.2 184.9L173.1 187.2L174.0 189.5L174.9 191.8L175.9 194.1L176.9 196.4L177.8 198.8L178.8 201.1L179.6 203.6L180.3 206.0L181.0 208.5 M7.2 130.3L8.1 127.9L9.0 125.5L9.8 123.1L10.5 120.7L11.3 118.3L12.0 115.9L12.8 113.6L13.5 111.2L14.4 108.9L15.3 106.6L16.2 104.3L17.2 102.1L18.3 100.0L19.5 97.9L20.8 95.9L22.2 94.0L23.8 92.1L25.5 90.4 M1.7 148.4L3.6 146.8L5.5 145.1L7.4 143.5L9.3 141.9L11.1 140.2L13.0 138.6L14.8 136.9L16.7 135.2L18.5 133.6L20.3 131.9L22.1 130.1L23.9 128.4L25.6 126.6L27.3 124.8 M58.1 164.7L58.7 167.1L59.4 169.5L60.1 171.9L60.7 174.3L61.3 176.8L61.9 179.3L62.3 181.8L62.7 184.3L62.9 186.9L63.1 189.4L61.5 190.3L61.5 187.8L61.6 190.3L59.9 189.5 M161.0 87.4L162.8 89.0L164.7 90.6L166.6 92.2L168.5 93.8L170.4 95.3L172.4 96.8L174.5 98.2L176.5 99.6L178.5 100.9L180.6 102.1L182.8 103.2L185.0 104.2L187.2 105.1L189.5 105.9L191.9 106.6 M163.0 105.0L165.0 106.5L167.0 107.9L169.0 109.3L171.1 110.5L173.2 111.6L175.4 112.7L177.7 113.7L179.9 114.7L182.2 115.5L184.5 116.3L186.8 116.9L189.2 117.5 M7.3 130.6L8.3 128.3L9.2 125.9L10.0 123.5L10.8 121.1L11.5 118.7L12.3 116.3L13.0 113.9L13.8 111.6L14.6 109.2L15.4 106.9L16.4 104.7L17.4 102.5L18.4 100.3L19.7 98.2 M137.7 107.5L139.3 103.3L141.2 107.3L141.5 109.5L142.2 111.5L143.4 113.3L145.0 115.0L146.7 116.7L148.6 118.2L150.5 119.7L152.5 121.2L154.4 122.7L156.5 124.0L158.6 125.3L160.7 126.6L162.8 127.8L165.0 128.9L167.2 129.9L169.5 131.0 M198.1 209.7L198.5 207.2L198.9 204.7L199.4 202.2L199.9 199.8L200.4 197.3L200.8 194.9L201.3 192.4L201.7 190.0L202.2 187.5L202.6 185.1L203.0 182.6L203.5 180.1L203.9 177.7L204.4 175.2L204.9 172.7L205.5 170.2L206.1 167.8L206.8 165.3 M-1.2 126.4L-0.7 123.9L-0.1 121.5L0.4 119.0L0.9 116.6L1.4 114.2L2.0 111.8L2.6 109.4L3.3 107.0L4.1 104.7L5.0 102.4 M36.4 164.8L37.5 162.5L38.6 160.2L39.8 158.0L41.0 155.7L42.2 153.5L43.5 151.4L44.8 149.2L46.2 147.1L47.5 144.9L48.9 142.8L50.3 140.7L51.6 138.7L53.0 136.6L54.4 134.5 M30.6 169.7L31.8 167.4L33.0 165.2L34.3 163.0L35.6 160.9L36.9 158.7L38.2 156.6L39.6 154.4L41.0 152.3L42.4 150.3L43.8 148.2L45.3 146.1L46.7 144.1 M72.9 136.9L74.7 141.0L74.8 138.5L73.2 139.4L73.5 142.0L73.9 144.6L74.6 147.1L75.2 149.5L75.9 152.0L76.8 154.4L77.6 156.7L78.5 159.1L79.2 161.4 M59.2 146.7L59.6 144.2L60.1 141.7L60.8 139.2L61.6 136.7L62.5 134.3L63.4 132.0L64.4 129.7L65.3 127.3L66.3 125.0L67.3 122.7L68.2 120.4L69.1 118.1L69.9 115.8L70.6 113.5L71.3 111.2L71.8 108.8L72.2 106.4L72.5 104.0 M64.2 209.2L66.0 205.0L66.0 207.5L66.0 205.0L66.0 207.5L66.0 205.0L66.1 207.5L64.4 206.7L64.5 204.2L64.5 201.6L64.6 199.1L64.7 196.6L64.8 194.1L64.9 191.7L66.6 187.5L66.6 190.0L65.0 189.2 M137.8 96.7L137.8 99.3L137.9 101.9L138.3 104.6L139.3 107.3L140.8 109.7L142.6 111.7L144.4 113.5L146.3 115.2L148.3 116.9L150.3 118.4L152.3 120.0L154.3 121.5L156.4 123.0L158.6 124.3L160.8 125.7L163.0 126.9L165.3 128.1L167.6 129.2L169.9 130.2L172.3 131.1 M7.7 97.3L9.0 95.1L10.4 92.9L12.0 90.8L13.6 88.9L15.3 87.0L17.1 85.1L19.0 83.3L20.9 81.7 M80.8 203.5L79.2 204.4L77.6 203.5L77.8 200.9L78.1 198.4L78.5 195.8L79.0 193.3L79.6 190.9L80.2 188.4L80.9 186.0L81.5 183.6L82.1 181.2L82.7 178.8L83.2 176.4L83.6 174.0L83.9 171.6L84.0 169.1 M12.3 112.0L13.1 109.6L14.0 107.4L14.9 105.1L16.0 102.9L17.1 100.7L18.2 98.6L19.5 96.5L20.9 94.5 M14.1 134.2L15.7 132.4L17.3 130.5L18.9 128.6L20.5 126.7L22.0 124.8L23.6 122.8L25.1 120.8L26.5 118.8 M124.1 201.6L124.9 199.2L125.8 196.9L126.7 194.5L127.6 192.2L128.5 189.9L129.4 187.5L130.4 185.2L131.3 182.9L132.3 180.6L133.2 178.2L134.2 175.9L135.1 173.6L136.1 171.3L137.0 169.0L138.0 166.7L138.9 164.4L139.7 162.1L140.5 159.7L141.3 157.4L142.0 155.0 M76.5 134.4L76.9 132.0L77.3 129.6L77.8 127.2L78.4 124.8L79.0 122.3L79.5 119.9L80.0 117.4L80.5 114.9L81.0 112.4L81.3 109.9L81.6 107.3L80.0 106.4L80.0 108.9L81.8 104.8 M-4.6 131.3L-3.9 128.9L-3.3 126.5L-2.7 124.1L-2.1 121.7L-1.6 119.2L-1.0 116.8L-0.5 114.3L0.1 111.9L0.7 109.4L1.4 107.0L2.2 104.6 M57.3 139.2L58.6 137.1L59.8 134.9L61.1 132.8L62.4 130.6L63.6 128.4L64.8 126.2L65.9 123.9L67.0 121.6L68.1 119.3L69.1 117.0L70.0 114.6L70.8 112.1L71.5 109.6L72.1 107.1L72.6 104.6L72.9 102.0L73.1 99.5 M6.9 137.1L8.5 135.2L9.9 133.2L11.3 131.2L12.7 129.1L14.0 127.1L15.3 124.9L16.5 122.8L17.7 120.6L18.9 118.4L20.0 116.2L21.1 114.0L22.3 111.8L23.4 109.6L24.6 107.3 M11.8 199.5L13.6 197.8L15.3 196.1L17.0 194.4L18.6 192.5L20.2 190.6L21.6 188.7L22.9 186.7L24.2 184.6L25.4 182.5L26.6 180.3L27.7 178.1L28.8 175.9L29.9 173.6L31.0 171.4L32.0 169.1L33.1 166.8L34.3 164.6L35.4 162.3L36.6 160.1L37.9 157.9L39.2 155.7L40.5 153.6 M111.3 127.6L113.1 131.8L113.1 129.3L113.1 131.8L114.8 127.6L114.9 125.1L115.0 122.6L115.1 120.2L115.3 117.7L115.4 115.2L115.6 112.7L115.8 110.2L116.0 107.7L116.1 105.2L116.2 102.7 M7.8 192.1L9.5 190.3L11.1 188.4L12.7 186.5L14.2 184.6L15.7 182.6L17.1 180.6L18.6 178.6L20.0 176.5L21.4 174.5L22.8 172.4L24.2 170.3L25.6 168.3L27.1 166.2L28.5 164.2L30.0 162.1L31.5 160.1L33.1 158.1L34.6 156.1L36.2 154.2L37.8 152.2L39.4 150.3L41.1 148.4 M31.0 208.0L32.9 206.4L34.7 204.8L36.4 203.0L38.0 201.2L39.5 199.4L40.9 197.4L42.0 195.4L43.1 193.3L43.9 191.0L44.6 188.8L45.1 186.4 M39.1 172.8L39.6 170.3L40.2 167.9L40.9 165.4L41.6 163.0L42.4 160.5L43.3 158.1L44.2 155.8L45.2 153.4L46.3 151.1L47.4 148.9L48.5 146.6L49.7 144.3L50.9 142.1L52.2 139.9L53.5 137.8L54.8 135.6L56.1 133.5L57.4 131.4 M183.5 83.3L185.8 84.2L188.1 85.1L190.5 86.1L192.8 86.9L195.2 87.8L197.6 88.6L200.0 89.4L202.4 90.2L204.8 90.9L207.2 91.6 M105.1 167.9L106.1 165.7L107.1 163.5L108.0 161.2L108.7 158.9L109.4 156.6L109.9 154.2L110.4 151.8L110.7 149.4L111.0 147.0L111.2 144.5L111.4 142.1L111.5 139.6L113.2 135.5L113.2 138.0L113.2 135.5L114.9 139.6 M168.5 145.5L170.3 147.5L171.8 149.9L172.7 152.5L173.2 155.1L173.8 157.6L174.1 160.2L174.3 162.7L174.5 165.2 M150.6 95.0L152.4 96.7L154.2 98.5L156.0 100.3L157.8 102.0L159.7 103.7L161.7 105.3L163.7 106.9L165.7 108.5L167.9 109.9L170.1 111.2L172.3 112.5L174.5 113.7L176.8 114.8L179.2 115.9L181.6 116.8L184.1 117.6L186.5 118.3L189.0 118.9L191.5 119.4L194.0 119.9L196.5 120.3L199.0 120.7 M36.3 174.2L37.0 171.8L37.7 169.4L38.5 167.0L39.3 164.6L40.2 162.2L41.2 159.8L42.2 157.5L43.2 155.2L44.4 152.9L45.5 150.7L46.7 148.4L47.9 146.2L49.2 144.0L50.5 141.8L51.8 139.7L53.1 137.6L54.5 135.5L55.8 133.3L57.1 131.2L58.4 129.1 M-3.9 104.0L-2.9 101.7L-1.9 99.3L-0.8 97.0L0.4 94.8L1.6 92.5L2.9 90.3L4.3 88.2L5.8 86.0L7.4 84.0L9.1 82.1L10.9 80.2L12.8 78.5L14.8 76.8L16.8 75.2 M197.7 178.5L197.9 176.0L198.1 173.6L198.4 171.1L198.8 168.7L199.2 166.2L199.6 163.8L200.0 161.3L200.4 158.8L200.8 156.3L199.3 155.3L199.4 157.8L201.3 153.7 M134.1 188.7L134.7 186.3L135.4 183.8L136.1 181.4L136.8 179.0L137.6 176.6L138.4 174.2L139.1 171.8L139.9 169.5L140.7 167.1L141.5 164.7L142.2 162.4L143.0 160.0 M28.9 140.6L31.0 139.2L33.0 137.9L35.1 136.5L37.1 135.1L39.2 133.6L41.1 132.2L43.1 130.7L45.0 129.1 M73.9 138.9L74.2 141.5L74.7 144.0L75.3 146.6L76.0 149.0L76.8 151.4L77.7 153.8L78.5 156.2L79.3 158.5L80.1 160.8L80.7 163.2 M108.7 102.3L108.9 104.9L109.0 107.4L109.1 109.9L107.4 110.7L107.4 108.2L107.4 110.7L107.4 108.2L107.5 110.7L107.5 108.2L109.2 112.4 M200.8 172.7L201.2 170.3L201.7 167.8L202.2 165.4L202.7 163.0L203.2 160.5L203.7 157.9L203.9 155.4L202.4 154.4L202.6 156.9L202.9 154.4L203.0 156.9L203.3 154.4L203.4 156.9L205.5 152.9 M79.8 136.7L80.1 139.1L80.5 141.5L81.1 143.8L81.7 146.2L82.5 148.5L83.3 150.9L84.1 153.3L84.8 155.7L85.5 158.1L86.2 160.6L86.7 163.1L87.1 165.7L87.3 168.3L85.7 169.2L85.8 166.7L85.9 169.2L86.0 166.7L87.7 170.9 M81.1 131.7L83.0 135.8L83.0 133.3L83.2 135.8L84.8 131.7L83.2 130.8L83.2 133.3L83.3 130.8L81.6 131.6L81.7 134.2L81.8 136.8L82.1 139.3L82.5 141.9L83.1 144.4L83.7 146.9L84.5 149.3L85.2 151.7 M172.9 134.9L175.3 135.8L177.6 136.7L179.9 137.6L182.3 138.6L184.6 139.6L187.0 140.7L189.3 141.9L191.4 143.2L193.6 144.6L195.8 146.2L197.8 148.1L199.4 150.5L200.3 153.3L198.9 154.5L199.0 152.0L200.9 156.0 M-3.4 180.5L-1.6 178.7L0.1 176.9L2.0 175.2L3.8 173.5L5.7 171.8L7.5 170.1L9.4 168.4L11.3 166.8L13.2 165.1L15.1 163.5L17.1 161.9L19.0 160.3L20.9 158.7L22.9 157.1L24.8 155.6L26.8 154.0 M152.5 177.3L152.7 174.9L152.9 172.4L153.2 170.0L153.5 167.5L153.9 165.0L154.2 162.5L154.5 160.0L154.7 157.4L154.8 154.9L153.2 154.0L153.4 156.5L153.5 154.0L153.7 156.5L153.7 154.0L154.0 156.5L154.0 154.0L154.2 156.5L155.9 152.3 M61.8 149.2L60.2 150.1L60.3 147.6L62.2 151.6L62.5 154.0L62.9 156.4L63.4 158.8L64.0 161.1L64.8 163.4 M139.1 133.7L140.1 136.0L141.1 138.3L142.1 140.6L142.9 142.8L143.4 145.1L144.0 147.4L145.9 151.3L146.0 148.9L146.3 151.3L148.0 147.2 M53.0 135.7L54.4 133.7L55.8 131.6L57.1 129.5L58.4 127.4L59.7 125.3L61.0 123.2L62.2 121.0L63.3 118.9L64.4 116.7L65.3 114.4 M135.2 207.6L135.6 205.2L136.0 202.8L136.2 200.3L136.5 197.8L136.8 195.3L137.1 192.8L137.4 190.3L137.7 187.8L138.1 185.3L138.6 182.8L139.1 180.3L139.6 177.9L140.2 175.4 M154.6 91.2L156.5 92.9L158.3 94.6L160.1 96.3L162.0 98.0L163.9 99.7L165.9 101.3L167.9 102.8L169.9 104.4L172.0 105.9L174.2 107.3L176.4 108.6L178.7 109.8L181.0 110.9L183.4 111.8L185.8 112.7L188.3 113.4 M111.9 206.9L112.7 204.5L113.7 202.1L114.8 199.8L115.9 197.5L117.1 195.3L118.3 193.0L119.6 190.8L120.8 188.7 M108.1 209.4L108.7 207.0L109.5 204.5L110.3 202.1L111.3 199.7L112.4 197.4 M39.3 125.2L41.1 123.4L42.8 121.5L44.5 119.6L46.1 117.6L47.7 115.5L49.1 113.5L50.5 111.4L51.9 109.2L53.2 107.0L54.3 104.7L55.5 102.4L56.5 100.1 M-3.1 206.8L-1.5 204.9L0.3 203.1L2.0 201.2L3.8 199.5L5.6 197.7L7.3 195.9L9.1 194.1L10.8 192.4L12.4 190.5L14.1 188.7L15.7 186.8L17.2 184.9L18.6 182.9L20.1 180.9L21.4 178.9L22.8 176.8 M172.0 109.0L174.2 110.2L176.5 111.4L178.9 112.4L181.3 113.3L183.7 114.1L186.2 114.8L188.7 115.4L191.1 116.0L193.6 116.5L196.1 116.9L198.6 117.3L201.2 117.6L203.6 117.9L206.1 118.2 M195.0 208.6L195.2 206.1L195.4 203.6L195.7 201.2L195.9 198.7L196.1 196.2L196.2 193.7L196.4 191.2 M170.1 85.5L172.1 86.9L174.2 88.2L176.2 89.6L178.3 90.9L180.5 92.1L182.6 93.2L184.8 94.3L187.0 95.3L189.3 96.2L191.6 97.1L193.9 97.9L196.3 98.6L198.6 99.2L201.0 99.7L203.4 100.2L205.8 100.6L208.3 101.0 M69.2 139.7L71.0 143.8L71.1 141.3L71.2 143.8L73.0 139.7L73.2 137.3L73.4 134.8L73.8 132.4L74.3 130.1L74.9 127.7L75.5 125.3 M184.4 198.6L185.0 201.1L185.6 203.6L186.1 206.1L186.4 208.6L186.7 211.2 M9.4 185.6L11.1 183.7L12.7 181.8L14.3 179.9L16.0 178.0L17.6 176.1L19.2 174.2L20.8 172.3L22.5 170.4L24.1 168.5L25.8 166.7L27.4 164.8L29.1 163.0 M188.6 171.1L188.7 173.6L188.8 176.0L189.0 178.5L189.3 180.9L189.6 183.4L190.0 185.8L190.4 188.3L190.8 190.8L191.1 193.2L191.5 195.7L191.9 198.2L192.2 200.7L192.4 203.2L192.6 205.8L192.8 208.3 M29.2 131.4L31.0 129.7L32.9 128.0L34.7 126.2L36.4 124.4L38.2 122.5L39.8 120.6L41.5 118.7L43.1 116.7L44.6 114.6L46.1 112.6L47.6 110.5L49.0 108.4L50.3 106.2L51.6 104.0L52.8 101.8L53.9 99.5L55.0 97.2 M28.5 104.7L29.9 102.6L31.4 100.5L32.9 98.5L34.5 96.5L36.1 94.6L37.8 92.7L39.4 90.8L41.1 88.9 M134.5 207.7L135.0 205.2L135.4 202.8L135.7 200.3L136.0 197.9L136.3 195.4L136.6 192.9L136.9 190.4L137.3 187.9L137.7 185.4L138.2 182.9L138.7 180.4L139.3 178.0L139.9 175.5 M26.8 134.0L28.7 132.3L30.6 130.6L32.4 128.9L34.2 127.2L36.0 125.4L37.8 123.6L39.5 121.7L41.2 119.8L42.8 117.8L44.4 115.8L45.8 113.7L47.3 111.7L48.8 109.6L50.1 107.4L51.4 105.2L52.6 103.0L53.8 100.7L54.9 98.4L55.9 96.1 M137.0 114.3L138.8 110.1L138.8 112.6L138.9 110.1L138.9 112.6L137.3 111.8L139.0 107.6L139.0 110.1L137.4 109.3L137.4 106.8L137.5 104.2L137.6 101.8L137.7 99.3L137.7 96.8 M107.1 152.7L107.3 150.3L107.4 147.8L107.4 145.4L109.1 141.2L109.2 143.7L107.5 142.9 M123.8 122.9L124.2 120.5L124.6 118.0L125.1 115.6L125.6 113.2L126.2 110.8L126.8 108.4L127.3 106.0L128.0 103.5L128.6 101.1 M51.9 160.1L51.9 157.6L52.1 155.0L52.5 152.4L53.0 149.9L53.6 147.4L54.3 144.9L55.1 142.5L56.0 140.1L57.0 137.7L58.1 135.4 M86.8 189.5L87.8 187.2L88.9 184.9L90.0 182.6L91.1 180.4L92.1 178.2L93.2 175.9L94.2 173.6L95.1 171.4L96.0 169.1L96.8 166.8L97.5 164.5L98.0 162.1 M106.2 173.6L107.6 171.5L108.9 169.5L110.2 167.4L111.4 165.3L112.5 163.1L113.6 160.9L114.6 158.6L115.6 156.4L116.4 154.1L117.2 151.8L117.9 149.5L118.5 147.1 M134.1 198.4L134.7 196.0L135.3 193.6L136.0 191.2L136.6 188.8L137.3 186.4L138.1 184.1L138.8 181.7L139.6 179.3L140.3 177.0L141.1 174.6L141.9 172.2L142.8 169.9L143.6 167.5L144.4 165.1 M94.6 207.9L94.9 205.3L95.5 202.7L96.4 200.2L97.4 197.8L98.6 195.5L99.9 193.2L101.4 191.1L102.8 189.0L104.3 187.0L105.9 185.0L107.5 183.0L109.1 181.1L110.7 179.2L112.3 177.3L113.9 175.3L115.4 173.4L116.9 171.4 M160.8 88.9L162.7 90.5L164.5 92.2L166.4 93.8L168.3 95.4L170.2 97.0L172.1 98.5L174.1 100.0L176.1 101.4L178.1 102.6L180.3 103.8 M26.3 148.4L28.5 147.0L30.6 145.7L32.7 144.4L34.8 143.0L36.9 141.6L39.0 140.1L41.0 138.6L43.1 137.1L45.0 135.5L46.9 133.8L48.9 132.2L50.7 130.4L52.6 128.6L54.3 126.7L56.0 124.8L57.5 122.7L59.0 120.6L60.4 118.5L61.7 116.2L62.9 113.9 M164.4 169.9L164.6 172.4L164.9 174.8L165.4 177.2L165.9 179.5L166.5 181.9L167.2 184.3L167.9 186.6L168.8 188.9L169.7 191.1L170.7 193.4 M117.5 148.0L118.0 145.5L118.3 143.1L118.6 140.6L118.9 138.2L119.2 135.7L119.4 133.2 M113.0 188.4L114.6 186.5L116.2 184.5L117.8 182.6L119.4 180.6L120.9 178.6L122.4 176.6L123.9 174.5L125.3 172.4L126.7 170.4L128.1 168.2L129.4 166.1L130.7 163.8L131.9 161.6L133.1 159.3L134.1 157.0L135.1 154.7 M175.7 89.2L177.8 90.5L179.9 91.8L182.1 92.9L184.3 94.0L186.5 95.1L188.7 96.1L191.0 97.0L193.3 97.9 M91.6 102.2L91.9 104.7L92.1 107.2L92.3 109.8L90.6 110.6L90.6 108.1L90.7 110.6L90.7 108.1L90.8 110.6L90.8 108.1L90.9 110.6L90.9 108.1L92.7 112.3 M1.1 210.4L2.8 208.7L4.6 206.9L6.4 205.2L8.2 203.5L10.0 201.8L11.8 200.1L13.7 198.3L15.5 196.6L17.2 194.7L19.0 192.8L20.6 190.9L22.2 188.9L23.7 186.8L25.1 184.7 M103.1 191.1L104.7 189.1L106.2 187.1L107.8 185.2L109.4 183.2L111.0 181.3L112.6 179.4L114.2 177.5L115.8 175.6L117.3 173.6L118.8 171.7 M62.4 148.3L60.9 149.2L60.9 146.7L61.1 149.2L61.1 146.7L63.0 150.7L63.3 153.1L63.8 155.4L64.5 157.7L65.2 160.1L66.0 162.4L66.9 164.7L67.8 167.1L68.6 169.4L69.5 171.9L70.2 174.3L70.8 176.8 M52.8 163.6L52.8 161.1L53.0 158.7L53.4 156.3L53.8 153.9L54.3 151.5L54.9 149.2L55.7 146.9L56.5 144.6 M165.4 87.0L167.3 88.5L169.3 90.0L171.2 91.5L173.2 93.0L175.2 94.4L177.3 95.8L179.3 97.1L181.4 98.4L183.6 99.5 M84.5 134.2L84.5 131.7L84.6 129.3L84.8 126.9L85.1 124.4L85.4 122.0L85.7 119.5L86.0 117.0L86.3 114.5L86.5 111.9L86.7 109.4 M7.3 146.9L9.3 145.4L11.3 143.9L13.3 142.4L15.3 140.9L17.3 139.4L19.3 137.9L21.2 136.4L23.2 134.9L25.2 133.3L27.1 131.8L29.1 130.2L31.0 128.7L32.9 127.1L34.8 125.5L36.6 123.8L38.4 122.2L40.2 120.4L41.9 118.7 M-1.2 128.7L-0.6 126.3L-0.1 123.8L0.5 121.4L1.0 118.9L1.5 116.5L2.1 114.1L2.8 111.7L3.4 109.4L4.2 107.1L5.1 104.8L5.9 102.4L6.9 100.2L7.9 98.0L9.0 95.9L10.2 93.8L11.6 91.8L13.0 89.8L14.5 88.0L16.2 86.2L17.9 84.5L19.7 82.9 M14.2 135.7L16.0 133.9L17.7 132.1L19.4 130.3L21.0 128.5L22.7 126.6L24.3 124.7L25.9 122.8L27.4 120.9L29.0 118.9L30.5 117.0L32.0 115.0L33.4 113.0 M1.2 210.2L3.0 208.5L4.9 206.7L6.8 205.0L8.7 203.4L10.6 201.8L12.5 200.2L14.4 198.6L16.2 196.9L18.0 195.3L19.7 193.5 M143.5 94.9L145.3 96.8L147.0 98.6L148.8 100.3L150.6 102.1L152.4 103.9L154.2 105.6L156.0 107.3L157.9 109.0L159.9 110.7L161.8 112.3 M69.2 204.3L67.5 205.1L67.6 202.6L67.6 205.1L67.6 202.6L67.7 205.1L67.7 202.6L69.4 206.8L69.5 209.3 M-1.0 141.8L0.2 139.5L1.4 137.3L2.5 134.9L3.5 132.6L4.4 130.2L5.2 127.8L6.0 125.4L6.7 123.0L7.4 120.5L8.1 118.1L8.7 115.7L9.4 113.3L10.1 110.9L10.8 108.6L11.6 106.2 M-2.1 138.8L-0.9 136.6L0.2 134.4L1.3 132.2L2.2 130.0L3.1 127.7L3.9 125.4L4.6 123.0L5.3 120.7L6.0 118.3L6.7 115.9L7.4 113.5L8.1 111.0L8.8 108.6L9.7 106.2L10.6 103.8L11.5 101.4L12.6 99.1L13.8 96.9 M96.4 120.8L94.7 121.6L94.7 119.1L94.7 121.6L94.7 119.1L94.8 121.6L94.8 119.1L94.8 121.6L94.8 119.1L96.5 123.3L96.6 125.7L96.7 128.2L96.9 130.7L97.1 133.1L97.4 135.5L97.8 137.9L98.3 140.4L98.8 142.8L99.3 145.3L99.7 147.7L100.1 150.2 M77.7 193.6L78.0 191.1L78.3 188.6L78.6 186.1L78.9 183.6L79.0 181.0L79.2 178.5L77.5 177.7L77.6 180.2L77.7 177.7L76.0 178.5 M27.8 114.0L29.1 111.9L30.5 109.8L31.8 107.7L33.2 105.6L34.7 103.5L36.1 101.5L37.6 99.4L39.1 97.4L40.6 95.4L42.2 93.4L43.7 91.4L45.2 89.5 M52.8 154.7L54.5 158.9L56.3 154.9L56.6 152.5L57.1 150.2L57.7 147.8L58.4 145.5L59.2 143.2L60.1 141.0L61.1 138.7L62.1 136.5L63.2 134.2L64.3 132.0L65.4 129.7L66.5 127.5L67.6 125.2L68.6 123.0L69.7 120.6L70.7 118.3L71.6 115.9L72.4 113.4L73.1 111.0L73.6 108.5 M139.5 204.9L139.6 202.4L139.7 199.9L139.8 197.5L139.9 194.9L140.0 192.4L140.1 189.9L140.3 187.4L140.5 184.8L140.8 182.3L141.2 179.8 M140.9 110.4L141.1 112.8L141.6 114.9L142.5 116.8L143.9 118.6L145.6 120.3L147.2 122.1L149.0 123.7L150.9 125.2L152.9 126.6L155.0 128.0 M-0.6 98.9L0.5 96.6L1.7 94.4L2.8 92.3L4.1 90.2L5.5 88.2L6.9 86.2 M80.8 203.6L79.2 204.4L79.2 201.9L79.3 204.4L79.3 201.9L79.5 204.4L79.5 201.9L79.6 204.4L78.0 203.6L78.2 201.0L78.4 198.5L78.7 195.9L79.1 193.4L79.7 190.9L80.2 188.4L80.9 186.0L81.5 183.6L82.1 181.2L82.7 178.7 M173.9 113.2L176.2 114.2L178.4 115.1L180.7 115.8L183.1 116.5L185.4 117.2L187.8 117.7L190.2 118.2L192.7 118.6L195.1 119.0L197.6 119.4L200.0 119.8L202.5 120.1L205.0 120.5L207.5 120.9 M148.2 191.8L148.6 194.2L149.1 196.7L149.6 199.1L150.1 201.6L150.5 204.0L150.9 206.4 M58.4 132.6L59.6 130.4L60.8 128.2L61.9 126.0L63.1 123.8L64.2 121.6L65.2 119.4L66.2 117.2L67.2 114.9 M-4.5 104.1L-3.6 101.8L-2.6 99.5L-1.5 97.1L-0.3 94.9L1.0 92.7L2.4 90.5L3.7 88.4L5.2 86.3L6.8 84.2L8.5 82.2L10.3 80.4L12.1 78.6L14.1 76.9L16.1 75.3 M138.4 97.9L139.5 100.4L141.1 102.6L142.9 104.6L144.6 106.4L146.4 108.2L148.2 110.0L150.1 111.7L152.0 113.4L154.0 115.0L155.9 116.6L158.0 118.1L160.1 119.6L162.3 121.0L164.4 122.2 M79.7 134.8L81.4 130.7L81.6 133.2L81.6 130.7L81.7 133.2L81.7 130.7L81.8 133.2L80.2 132.3L80.3 129.7L80.6 127.2L80.9 124.7L81.2 122.2L81.5 119.7L81.8 117.2L82.2 114.8L82.4 112.3L82.6 109.9L84.4 105.8L84.5 108.3L84.5 105.8L86.2 110.0 M35.6 124.3L37.3 122.4L39.0 120.5L40.6 118.5L42.2 116.6L43.8 114.5L45.2 112.5L46.7 110.4L48.1 108.3L49.4 106.1L50.7 103.9L52.0 101.7L53.2 99.5 M166.3 193.7L167.3 196.0L168.3 198.4L169.2 200.7L170.1 203.2L170.8 205.7L171.4 208.2 M140.7 208.2L141.1 205.7L141.3 203.2L141.5 200.6L141.7 198.1L141.9 195.6L142.1 193.1L142.2 190.7L142.5 188.2 M134.8 190.7L135.3 188.3L135.9 185.8L136.5 183.4L137.1 180.9L137.8 178.5L138.5 176.1L139.3 173.7L140.0 171.3L140.8 168.9L141.5 166.6L142.2 164.2L143.0 161.8L143.6 159.4L144.3 157.0L144.8 154.7L145.3 152.3L145.5 150.0L147.1 145.9L149.4 149.9L147.8 150.8L148.0 148.4L149.7 152.5 M3.8 141.4L5.5 139.5L7.1 137.6L8.6 135.7L10.1 133.8L11.6 131.8L13.0 129.8L14.4 127.7L15.8 125.7L17.1 123.6L18.4 121.5L19.6 119.3L20.8 117.2 M3.2 138.9L4.5 136.7L5.7 134.4L6.8 132.1L7.8 129.8L8.7 127.4L9.6 125.0L10.4 122.6L11.3 120.3L12.0 117.9L12.8 115.5L13.5 113.1L14.3 110.7 M103.5 102.1L103.8 104.6L104.0 107.1L104.1 109.7L104.2 112.2L104.2 114.7L102.5 115.5L100.8 114.7 M135.5 113.6L135.9 111.2L136.3 108.7L136.7 106.3L137.0 103.8L137.3 101.4L137.5 99.0L137.7 96.5 M67.8 139.9L68.3 137.5L68.9 135.2L69.7 132.9L70.4 130.5L71.2 128.2L72.1 125.8L72.9 123.5L73.7 121.1 M107.2 184.3L108.8 182.3L110.4 180.4L112.0 178.5L113.6 176.6L115.1 174.6L116.6 172.7L118.0 170.7L119.4 168.6L120.8 166.6L122.2 164.5L123.4 162.4L124.7 160.3L125.8 158.1L126.9 155.9L127.9 153.7L128.8 151.4 M76.2 131.4L76.5 128.9L76.9 126.3L77.4 123.9L77.9 121.4L78.3 119.0L78.8 116.5L79.2 114.1L79.6 111.6 M97.4 169.8L98.3 167.4L98.9 165.1L99.5 162.8L99.9 160.4L100.2 158.0L100.3 155.6L100.3 153.2L102.0 149.0L102.1 151.5L102.1 149.0L102.3 151.5L102.3 149.0L102.4 151.5L100.7 150.7 M71.3 201.6L69.6 202.4L69.6 199.9L69.7 202.4L69.7 199.9L69.7 202.4L68.1 201.6L68.1 199.1L68.3 196.5L68.4 194.0L68.5 191.6L68.6 189.1L68.7 186.6L70.4 182.4L70.5 184.9L70.5 182.4L72.3 186.6 M52.8 162.5L51.2 161.6L51.2 164.1L51.4 161.6L49.7 162.4L49.9 165.0L50.0 167.5L50.3 170.0L50.6 172.6L50.9 175.0L51.3 177.5 M93.7 130.1L94.0 132.5L94.4 134.9L94.8 137.3L95.3 139.7L95.9 142.2L96.4 144.6L97.0 147.1L97.4 149.6L97.8 152.2L98.0 154.8L98.1 157.3L96.4 158.2L96.5 155.7L96.6 158.2L96.7 155.7L96.7 158.2L96.8 155.7L96.9 158.2L97.0 155.7L97.1 158.2L97.2 155.7L98.9 159.9 M154.7 140.6L156.6 142.2L158.6 144.0L160.3 146.1L161.8 148.6L162.6 151.2L163.1 153.9L163.3 156.5L163.3 159.0L163.4 161.6L163.4 164.1L163.4 166.6L163.4 169.0L163.5 171.5L163.7 173.9L163.9 176.4L164.2 178.8 M85.1 131.6L83.5 130.7L83.5 133.2L83.6 130.7L83.6 133.2L85.5 129.1L85.6 126.6L85.8 124.2L86.0 121.7L86.3 119.3L86.6 116.8 M170.4 180.4L171.2 182.8L172.0 185.1L172.9 187.4L173.8 189.7L174.8 192.0L175.8 194.3L176.7 196.6L177.7 198.9L178.6 201.3L179.4 203.7L180.2 206.2L180.8 208.6 M10.8 148.7L12.9 147.3L15.0 146.0L17.1 144.6L19.2 143.3L21.3 141.9L23.4 140.6L25.5 139.2L27.6 137.9L29.7 136.5L31.8 135.1L33.8 133.7L35.9 132.3 M74.1 203.8L72.5 202.9L70.8 203.8L70.9 206.4L71.2 208.9 M22.9 120.4L24.2 118.3L25.6 116.2L26.9 114.1L28.2 111.9L29.5 109.8L30.9 107.7L32.3 105.6L33.7 103.5L35.2 101.5L36.6 99.4L38.2 97.4L39.7 95.4L41.2 93.4L42.8 91.4L44.4 89.5" stroke="#161616" stroke-width="1.35"/><path d="M104.3 169.2L105.3 166.9L106.2 164.5L107.1 162.2L107.8 159.8L108.3 157.4L108.8 154.9L109.2 152.4L109.6 150.0L109.8 147.5L109.9 145.0L109.9 142.5L110.0 145.0 M55.2 158.1L55.2 155.6L55.4 153.1L55.4 155.6L55.6 153.1L55.6 155.6L55.8 158.1L56.2 160.6L56.7 163.0L57.2 165.5L57.9 167.9L58.5 170.3L59.3 172.7L60.0 175.1L60.6 177.5L61.2 179.9L61.7 182.4 M53.8 157.0L53.9 159.5L54.2 162.0L54.6 164.4L55.1 166.9L55.6 169.3L56.2 171.8L56.8 174.2L57.4 176.6L58.0 179.1L58.5 181.5L58.9 184.0L59.2 186.5 M21.2 190.0L22.6 188.0L24.0 185.9L25.3 183.8L26.5 181.6L27.7 179.4L28.8 177.2L30.0 174.9L31.1 172.7L32.2 170.5L33.4 168.3L34.5 166.0L35.7 163.8 M188.7 171.3L188.7 173.8L188.7 171.3L188.8 173.8L188.9 176.3L189.0 178.8L189.1 181.3L189.4 183.7L189.6 186.2 M188.1 100.9L190.5 101.7L192.9 102.3L195.3 102.9L197.8 103.4L200.3 103.9L202.7 104.3L205.2 104.6L207.7 104.9 M196.5 190.1L196.5 187.6L196.5 185.1L196.6 182.6L196.7 180.1L196.9 177.6L197.2 175.1L197.5 172.6L197.7 170.1L198.1 167.7L198.5 165.2L199.0 162.7L199.4 160.3L199.8 157.8L200.2 155.3 M201.9 205.4L202.5 203.0L203.0 200.6L203.6 198.2L204.2 195.7L204.8 193.3L205.4 190.9L205.9 188.4L206.4 186.0L206.9 183.5L207.5 181.1L208.0 178.6L208.5 176.2 M87.4 181.9L88.2 179.6L88.9 177.2L89.5 174.8L90.0 172.3L90.4 169.8L90.6 167.3L90.7 164.8L90.7 162.3L90.8 164.8L90.9 162.3L91.0 164.8L91.0 162.3L91.1 164.8L91.2 162.3 M141.7 128.2L143.2 130.2L145.0 132.0L146.9 133.6L148.8 135.2L150.8 136.7L152.9 138.1L154.9 139.5L157.0 140.9L159.1 142.3L161.1 143.8L163.0 145.4L165.0 146.9L166.8 148.6L168.4 150.6L169.7 152.7L170.5 155.1L171.1 157.5L171.4 160.0L171.6 162.5L171.8 165.0L172.0 167.5L172.2 170.0 M199.4 186.7L199.6 184.2L199.8 181.7L200.1 179.2L200.4 176.7L200.8 174.3L201.1 171.8L201.6 169.3L202.1 166.9L202.6 164.4L203.2 162.0 M4.6 209.9L6.5 208.3L8.4 206.7L10.3 205.1L12.2 203.5L14.1 201.9L16.0 200.2L17.8 198.5L19.6 196.8L21.4 195.0L23.0 193.1L24.6 191.2L26.1 189.2L27.5 187.1L28.8 185.0L30.0 182.8L31.1 180.6L32.2 178.3L33.2 176.0 M136.9 169.2L137.9 166.9L138.8 164.6L139.7 162.3L140.6 159.9L141.3 157.5L142.0 155.1L142.6 152.7L143.0 150.2L143.4 147.7L143.5 145.3L143.7 147.7L143.8 145.2L144.1 147.7L144.1 145.2L144.4 147.7L144.5 145.2 M125.9 188.0L127.1 185.8L128.3 183.6L129.4 181.4L130.6 179.2L131.7 177.0L132.9 174.8L134.0 172.5L135.1 170.3L136.2 168.0L137.2 165.7 M48.8 209.1L50.0 207.0L51.1 204.7L52.1 202.4L52.9 200.0L53.5 197.6L54.0 195.2L54.4 192.7L54.7 190.2L54.8 187.7L54.8 190.2L54.9 187.7 M3.4 125.3L4.1 122.9L4.7 120.5L5.3 118.1L6.0 115.7L6.6 113.2L7.4 110.9L8.1 108.5L8.9 106.1L9.8 103.7L10.7 101.4L11.8 99.2L12.9 96.9L14.2 94.8L15.6 92.7 M128.5 140.3L128.9 137.8L129.3 135.3L129.7 132.9L130.0 130.4L130.4 127.9L130.9 125.4L131.3 123.0L131.8 120.5L132.3 118.1L132.9 115.7L133.5 113.2L134.2 110.8L134.9 108.4L135.7 106.1 M24.3 134.4L26.2 132.8L28.1 131.1L30.0 129.5L31.8 127.8L33.6 126.1L35.4 124.3L37.1 122.5L38.8 120.7L40.5 118.8L42.1 116.9L43.7 115.0L45.3 113.0L46.7 111.0L48.1 108.9L49.4 106.8L50.7 104.6L51.9 102.4L53.0 100.2 M152.0 91.6L153.8 93.4L155.6 95.1L157.4 96.9L159.2 98.6L161.1 100.3L162.9 102.0L164.8 103.6L166.7 105.2L168.7 106.7L170.7 108.2L172.8 109.5L175.0 110.8 M48.2 199.7L49.0 197.3L49.6 194.9L50.1 192.5L50.5 190.0L50.7 187.5L50.7 185.0L50.8 182.5L50.9 185.0L50.9 182.5L51.0 185.0L51.0 182.5L51.1 185.0 M136.2 210.5L136.8 208.0L137.3 205.6L137.7 203.1L138.1 200.6L138.4 198.2L138.6 195.7 M87.0 127.4L87.0 129.9L87.1 127.4L87.2 124.9L87.4 122.4L87.5 119.9L87.7 117.4L87.9 115.0L88.1 112.5 M-1.5 160.0L0.5 158.5L2.5 157.1L4.6 155.6L6.7 154.2L8.7 152.8L10.8 151.5L12.9 150.1L15.0 148.8L17.1 147.4L19.2 146.1L21.4 144.7L23.5 143.4L25.6 142.1L27.7 140.7 M4.3 121.6L4.9 119.1L5.5 116.7L6.2 114.3L6.9 111.9L7.6 109.5L8.4 107.1L9.3 104.8L10.3 102.5L11.4 100.3L12.5 98.0L13.8 95.9L15.1 93.8L16.6 91.7L18.2 89.8L19.8 88.0L21.6 86.2L23.5 84.6L25.5 83.0 M4.6 134.1L5.7 131.9L6.8 129.6L7.7 127.3L8.6 125.0L9.5 122.6L10.3 120.3L11.1 117.9L11.8 115.5L12.6 113.1L13.4 110.8L14.3 108.4L15.2 106.1L16.2 103.8L17.2 101.5L18.4 99.3L19.7 97.2L21.1 95.1L22.6 93.1 M139.7 101.8L140.4 104.2L141.6 106.4L143.2 108.4L144.9 110.2L146.6 112.0L148.4 113.7L150.3 115.4L152.2 117.0 M7.4 185.9L9.0 184.0L10.6 182.1L12.3 180.2L13.9 178.3L15.5 176.4L17.1 174.5L18.7 172.6L20.4 170.7L22.0 168.8L23.6 166.9L25.3 165.1L26.9 163.2L28.6 161.3L30.3 159.5L32.0 157.7L33.8 155.9 M192.2 176.0L192.2 178.5L192.3 181.0L192.4 183.5L192.6 186.0L192.8 188.5L192.9 191.0L193.1 193.5L193.2 196.0L193.3 198.5L193.4 201.0L193.4 203.5L193.4 206.0L193.5 208.5L193.5 206.0L193.5 208.5L193.5 206.0L193.5 208.5L193.5 206.0L193.5 208.5L193.5 206.0L193.5 208.5L193.6 206.0 M84.5 198.1L85.1 195.7L85.9 193.3L86.7 191.0L87.6 188.6L88.6 186.3L89.6 184.0L90.6 181.7L91.6 179.4L92.6 177.1L93.5 174.8L94.4 172.5L95.2 170.1 M174.7 99.0L176.8 100.3L179.0 101.5L181.3 102.6L183.6 103.6L185.9 104.5L188.3 105.3L190.6 106.0L193.0 106.7L195.5 107.3L197.9 107.8L200.4 108.2L202.9 108.6 M70.0 136.0L70.5 133.6L71.1 131.2L71.8 128.8L72.5 126.4L73.2 124.0L74.0 121.6L74.7 119.2L75.4 116.8L76.0 114.4L76.5 111.9L76.9 109.5L77.3 107.0 M166.1 142.1L168.3 143.3L170.4 144.7L172.4 146.2L174.2 147.9L175.7 149.9L177.1 151.9L178.2 154.2L178.9 156.6L179.3 159.1L179.6 161.5 M155.4 183.1L155.9 185.6L156.5 188.0L157.3 190.4L158.1 192.7L158.9 195.1L159.8 197.4L160.6 199.8L161.5 202.1L162.3 204.5L162.9 206.9 M-1.7 145.2L-0.2 143.2L1.3 141.2L2.8 139.2L4.2 137.2L5.6 135.1L6.9 132.9L8.1 130.8L9.3 128.5L10.4 126.3 M106.8 189.6L108.3 187.7L109.9 185.7L111.5 183.8L113.1 181.9L114.7 180.0L116.3 178.1L117.9 176.1L119.4 174.1 M-2.4 191.4L-0.8 189.5L0.8 187.6L2.5 185.7L4.1 183.8L5.8 182.0L7.5 180.1L9.2 178.3L10.9 176.5L12.6 174.7L14.4 172.8L16.1 171.0L17.8 169.2L19.6 167.5L21.3 165.7L23.1 163.9L24.9 162.2L26.7 160.4L28.5 158.7L30.3 157.0L32.1 155.3 M155.4 174.6L155.4 172.1L155.5 169.6L155.7 167.1L155.9 164.7L156.1 162.2L156.3 159.7L156.4 157.2L156.5 154.7L156.6 157.2L156.6 154.7 M37.4 195.3L38.5 193.1L39.5 190.8L40.4 188.4L41.1 186.0L41.7 183.6L42.2 181.1L42.6 178.7L43.0 176.2L43.4 173.7L43.8 171.3L44.2 168.8L44.6 166.3L45.0 163.9L45.5 161.4 M147.7 117.7L149.7 119.2L151.7 120.7L153.7 122.1L155.9 123.5L158.0 124.8L160.2 126.0L162.4 127.2L164.6 128.4L166.8 129.5L169.1 130.5L171.4 131.4L173.8 132.3 M97.7 190.5L99.1 188.4L100.6 186.4L102.1 184.4L103.6 182.4L105.1 180.4L106.6 178.4L108.1 176.4L109.6 174.4L111.1 172.4L112.5 170.3L113.9 168.3L115.2 166.1L116.5 164.0L117.7 161.8L118.9 159.6L119.9 157.3L120.9 155.0L121.8 152.7 M168.7 121.3L171.0 122.3L173.3 123.2L175.7 124.0L178.1 124.8L180.5 125.5L182.9 126.1L185.3 126.7L187.7 127.3L190.2 127.8L192.6 128.3L195.1 128.8L197.5 129.3L200.0 129.9L202.4 130.4L204.8 131.1L207.2 131.8 M136.7 208.5L137.2 206.1L137.5 203.6L137.8 201.1L138.1 198.6L138.4 196.2L138.7 193.7L139.0 191.2L139.3 188.7L139.7 186.2L140.1 183.8L140.6 181.3L141.1 178.9L141.7 176.5L142.4 174.0L143.0 171.6L143.7 169.2L144.4 166.8 M125.1 165.2L126.3 163.0L127.4 160.8L128.5 158.6L129.5 156.3L130.5 154.0L131.3 151.6L132.1 149.2L132.7 146.8L133.3 144.4L133.9 142.0L134.4 139.5L134.8 137.0L135.1 134.6L135.3 132.1L135.5 129.6L135.7 127.1L136.0 124.6L136.2 122.1 M152.9 121.6L155.0 123.0L157.1 124.3L159.3 125.5L161.5 126.7L163.7 127.8L166.0 128.9L168.3 129.9L170.6 130.9L172.9 131.8L175.3 132.6L177.6 133.5L180.0 134.2L182.4 135.0L184.8 135.7 M10.3 197.3L12.0 195.5L13.7 193.7L15.4 191.8L17.0 189.9L18.5 187.9L19.9 185.8L21.3 183.8L22.7 181.7L24.0 179.5L25.3 177.4L26.6 175.3L27.9 173.1L29.1 171.0L30.4 168.8L31.7 166.7L33.0 164.5L34.4 162.4L35.7 160.4L37.2 158.3L38.6 156.3L40.1 154.2L41.6 152.2 M27.0 139.1L29.0 137.7L31.1 136.3L33.1 134.8L35.2 133.4L37.2 131.9L39.1 130.3L41.1 128.8L43.0 127.2L44.9 125.6L46.7 123.8L48.5 122.1L50.2 120.2 M-2.5 148.7L-0.8 146.9L0.8 145.0L2.4 143.1L4.0 141.2L5.6 139.2L7.0 137.2L8.5 135.1L9.9 133.1L11.3 131.0L12.6 128.9L13.8 126.7L15.0 124.5L16.2 122.3L17.3 120.0L18.3 117.8 M12.5 107.2L13.5 104.9L14.6 102.6L15.8 100.4L17.1 98.3L18.5 96.2L19.9 94.1L21.4 92.2L23.1 90.3L24.8 88.5L26.7 86.8 M36.0 106.4L37.5 104.3L38.9 102.3L40.4 100.3L41.9 98.3L43.4 96.3L44.9 94.3L46.4 92.3 M25.3 190.8L26.7 188.7L28.0 186.6L29.1 184.4L30.2 182.1L31.3 179.9L32.3 177.6L33.3 175.3L34.2 173.0L35.2 170.7L36.2 168.4L37.2 166.1L38.2 163.8 M103.6 200.4L104.7 198.2L106.0 196.0L107.3 194.0L108.8 191.9L110.3 189.9L111.8 188.0L113.4 186.0L115.0 184.1L116.6 182.1L118.1 180.2L119.7 178.2L121.2 176.3L122.7 174.3L124.2 172.2 M67.5 145.3L67.5 142.8L67.7 145.3L67.7 142.8L67.9 145.3L67.9 142.8L68.1 145.3L68.1 142.8L68.3 145.3L68.3 142.8L68.5 145.3L68.9 147.7L69.3 150.2L69.9 152.6L70.6 155.0L71.4 157.4L72.3 159.7L73.2 162.0L74.1 164.4L74.9 166.7L75.6 169.1L76.2 171.6L76.6 174.0 M0.3 209.8L2.1 208.0L3.9 206.3L5.7 204.5L7.6 202.8L9.4 201.2L11.3 199.5L13.1 197.8L14.9 196.0L16.6 194.2L18.3 192.4L20.0 190.5L21.5 188.6L23.0 186.6 M54.3 210.6L55.1 208.3L55.8 205.9L56.5 203.4L57.0 201.0L57.4 198.5L57.7 196.0L58.0 193.6L58.1 191.1L58.2 188.6 M96.9 122.8L96.9 120.3L96.9 122.8L96.9 120.3L97.0 122.8L97.0 120.3L97.0 122.8L97.0 120.3L97.1 122.8L97.1 120.3L97.1 122.8L97.1 125.3L97.2 127.8L97.4 130.3L97.6 132.7L97.9 135.2L98.3 137.7L98.7 140.2L99.2 142.6L99.6 145.1L100.0 147.5 M21.9 126.1L23.4 124.0L24.8 122.0L26.2 119.9L27.5 117.8L28.9 115.7L30.2 113.6L31.6 111.5L32.9 109.4L34.3 107.3L35.7 105.2 M164.5 135.1L166.8 136.1L169.1 137.1L171.4 138.1L173.7 139.1L176.0 140.1L178.3 141.1L180.5 142.1L182.8 143.3L185.0 144.4L187.1 145.7L189.2 147.1L191.1 148.7L192.8 150.6L193.9 152.8L194.5 155.2L194.6 157.7 M189.8 104.6L192.2 105.2L194.7 105.8L197.1 106.2L199.6 106.6L202.1 107.0L204.5 107.3L207.0 107.6L209.5 107.8 M166.7 166.0L166.8 168.5L167.1 171.0L167.4 173.4L167.8 175.9L168.4 178.4L169.0 180.8L169.7 183.2L170.6 185.5L171.5 187.8L172.4 190.2L173.4 192.5L174.3 194.8L175.3 197.1L176.3 199.4L177.2 201.7L178.0 204.1L178.7 206.5L179.3 208.9 M5.6 129.6L6.5 127.3L7.4 125.0L8.1 122.6L8.9 120.2L9.6 117.8L10.4 115.4L11.1 113.0L11.9 110.7L12.8 108.3L13.7 106.0L14.6 103.7L15.6 101.4L16.8 99.2L18.0 97.0L19.4 94.9L20.9 92.9L22.5 91.0L24.2 89.2 M2.8 149.7L4.7 148.1L6.6 146.4L8.5 144.8L10.4 143.2L12.3 141.5L14.1 139.9L16.0 138.2L17.8 136.5L19.7 134.8L21.5 133.1L23.3 131.4L25.1 129.6L26.8 127.8L28.6 126.0 M56.4 165.1L57.1 167.5L57.8 169.9L58.4 172.3L59.1 174.7L59.7 177.2L60.2 179.6L60.6 182.1L61.0 184.6L61.3 187.0L61.4 189.5L61.5 192.0L61.5 189.5L61.6 192.0L61.6 189.5 M159.8 88.7L161.7 90.3L163.6 91.9L165.5 93.6L167.5 95.1L169.4 96.7L171.4 98.2L173.5 99.6L175.5 101.0L177.7 102.3L179.8 103.6L182.1 104.7L184.3 105.8L186.7 106.7L189.0 107.5L191.4 108.2 M162.0 106.4L164.0 107.9L166.0 109.4L168.1 110.7L170.2 112.0L172.5 113.2L174.7 114.2L177.0 115.3L179.3 116.3L181.6 117.1L184.0 117.9L186.4 118.6L188.8 119.2 M5.8 130.0L6.7 127.6L7.6 125.3L8.4 122.9L9.2 120.6L9.9 118.2L10.7 115.8L11.4 113.4L12.2 111.0L13.0 108.7L13.9 106.3L14.8 104.0L15.8 101.7L16.9 99.5L18.2 97.3 M139.4 107.5L139.4 105.0L139.5 107.5L139.8 109.9L140.7 112.3L142.1 114.4L143.8 116.2L145.6 117.9L147.5 119.5L149.5 121.1L151.4 122.6L153.5 124.1L155.6 125.5L157.7 126.8L159.8 128.1L162.0 129.3L164.2 130.4L166.5 131.5L168.8 132.5 M199.7 209.9L200.2 207.5L200.6 205.0L201.1 202.6L201.6 200.1L202.0 197.7L202.5 195.2L203.0 192.7L203.4 190.3L203.9 187.8L204.3 185.4L204.7 182.9L205.1 180.4L205.6 178.0L206.0 175.5L206.6 173.1L207.1 170.6L207.7 168.2L208.4 165.8 M-2.9 126.0L-2.3 123.6L-1.8 121.1L-1.3 118.7L-0.8 116.2L-0.2 113.8L0.4 111.3L1.0 108.9L1.7 106.5L2.5 104.2L3.4 101.8 M38.0 165.5L39.0 163.2L40.1 161.0L41.3 158.8L42.5 156.6L43.7 154.4L45.0 152.2L46.3 150.1L47.6 148.0L48.9 145.9L50.3 143.8L51.7 141.7L53.1 139.6L54.5 137.5L55.8 135.4 M32.2 170.5L33.3 168.3L34.5 166.1L35.7 163.9L37.0 161.7L38.3 159.6L39.7 157.5L41.0 155.4L42.4 153.3L43.8 151.2L45.2 149.2L46.7 147.1L48.1 145.1 M74.6 136.8L74.7 139.3L74.7 136.8L74.8 139.3L75.1 141.8L75.6 144.2L76.2 146.6L76.8 149.1L77.6 151.5L78.4 153.8L79.2 156.2L80.1 158.5L80.9 160.9 M60.9 147.0L61.3 144.5L61.8 142.1L62.5 139.7L63.2 137.3L64.1 134.9L65.0 132.6L65.9 130.3L66.9 128.0L67.9 125.7L68.8 123.4L69.8 121.1L70.7 118.7L71.5 116.4L72.3 114.0L72.9 111.6L73.5 109.1L73.9 106.7L74.2 104.2 M65.9 209.2L66.0 206.7L66.0 209.2L66.0 206.7L66.0 209.2L66.0 206.7L66.1 209.2L66.1 206.7L66.1 204.2L66.2 201.7L66.3 199.2L66.4 196.7L66.5 194.2L66.6 191.7L66.6 189.2L66.6 191.7L66.7 189.2 M139.5 96.7L139.5 99.2L139.6 101.7L139.9 104.2L140.8 106.6L142.2 108.6L143.8 110.5L145.6 112.3L147.5 113.9L149.4 115.5L151.3 117.1L153.3 118.6L155.3 120.1L157.4 121.5L159.5 122.9L161.6 124.2L163.8 125.4L166.0 126.5L168.3 127.6L170.6 128.6L172.9 129.5 M9.1 98.1L10.4 96.0L11.8 93.9L13.3 91.9L14.9 90.0L16.6 88.1L18.3 86.3L20.1 84.6L22.0 83.0 M79.1 203.6L79.3 206.1L79.3 203.6L79.5 201.1L79.8 198.6L80.2 196.1L80.7 193.7L81.3 191.3L81.9 188.8L82.5 186.4L83.1 184.0L83.7 181.6L84.3 179.1L84.8 176.7L85.2 174.2L85.5 171.7L85.7 169.3 M10.7 111.4L11.5 109.1L12.4 106.7L13.4 104.4L14.5 102.2L15.5 99.9L16.7 97.7L18.1 95.6L19.5 93.6 M15.3 135.4L17.0 133.5L18.6 131.6L20.2 129.7L21.8 127.8L23.4 125.8L24.9 123.9L26.4 121.9L27.9 119.8 M125.7 202.2L126.5 199.8L127.4 197.5L128.3 195.1L129.2 192.8L130.1 190.5L131.0 188.2L132.0 185.8L132.9 183.5L133.8 181.2L134.8 178.9L135.8 176.6L136.7 174.3L137.7 172.0L138.6 169.6L139.5 167.3L140.4 165.0L141.3 162.7L142.1 160.3L142.9 157.9L143.6 155.5 M74.8 134.2L75.2 131.7L75.7 129.3L76.2 126.8L76.7 124.4L77.3 121.9L77.9 119.5L78.4 117.1L78.9 114.6L79.3 112.2L79.6 109.7L79.9 107.2L80.0 104.7L80.0 107.2L80.1 104.7 M-3.0 131.7L-2.3 129.3L-1.7 126.9L-1.0 124.5L-0.5 122.0L0.1 119.6L0.6 117.2L1.2 114.7L1.7 112.3L2.4 109.9L3.0 107.5L3.8 105.1 M55.8 138.4L57.1 136.2L58.4 134.1L59.6 131.9L60.9 129.8L62.1 127.6L63.3 125.4L64.4 123.1L65.5 120.9L66.5 118.6L67.5 116.3L68.4 114.0L69.2 111.6L69.9 109.2L70.5 106.8L70.9 104.3L71.2 101.8L71.4 99.3 M8.3 138.2L9.8 136.2L11.3 134.2L12.7 132.2L14.1 130.1L15.5 128.0L16.7 125.8L18.0 123.6L19.2 121.4L20.4 119.2L21.5 117.0L22.7 114.8L23.8 112.6L24.9 110.3L26.1 108.1 M12.9 200.7L14.8 199.1L16.5 197.3L18.3 195.5L19.9 193.6L21.5 191.7L23.0 189.7L24.4 187.6L25.7 185.5L26.9 183.3L28.1 181.1L29.2 178.8L30.3 176.6L31.4 174.4L32.5 172.1L33.6 169.8L34.7 167.6L35.8 165.4L36.9 163.1L38.1 161.0L39.4 158.8L40.6 156.6L42.0 154.5 M113.0 127.6L113.1 130.1L113.1 127.6L113.1 130.1L113.1 127.6L113.2 125.1L113.3 122.6L113.4 120.1L113.6 117.6L113.7 115.1L113.9 112.6L114.1 110.1L114.3 107.6L114.4 105.1L114.6 102.6 M9.1 193.3L10.8 191.4L12.4 189.5L14.0 187.6L15.5 185.6L17.0 183.6L18.5 181.6L19.9 179.5L21.4 177.5L22.8 175.4L24.2 173.4L25.6 171.3L27.0 169.2L28.5 167.2L29.9 165.2L31.4 163.1L32.9 161.1L34.4 159.2L36.0 157.2L37.5 155.3L39.1 153.3L40.7 151.4L42.3 149.5 M32.1 209.3L34.1 207.7L35.9 206.0L37.6 204.2L39.3 202.4L40.9 200.4L42.3 198.4L43.5 196.2L44.6 193.9L45.5 191.6L46.2 189.2L46.8 186.8 M40.7 173.1L41.3 170.7L41.9 168.3L42.5 165.9L43.2 163.5L44.0 161.1L44.9 158.7L45.8 156.4L46.8 154.1L47.8 151.9L48.9 149.6L50.0 147.4L51.2 145.2L52.4 143.0L53.7 140.8L54.9 138.7L56.2 136.5L57.5 134.4L58.9 132.3 M184.1 81.7L186.4 82.6L188.8 83.6L191.1 84.5L193.4 85.3L195.8 86.2L198.1 87.0L200.5 87.8L202.9 88.5L205.3 89.3L207.7 90.0 M106.6 168.7L107.7 166.4L108.7 164.1L109.6 161.8L110.4 159.4L111.0 157.0L111.6 154.6L112.0 152.1L112.4 149.6L112.7 147.1L112.9 144.7L113.1 142.2L113.2 139.7L113.2 137.2L113.2 139.7L113.2 137.2L113.2 139.7 M167.3 146.6L168.9 148.5L170.2 150.6L171.1 153.0L171.6 155.4L172.1 157.9L172.4 160.3L172.7 162.8L172.8 165.3 M151.8 93.8L153.6 95.5L155.4 97.3L157.2 99.0L159.0 100.7L160.9 102.4L162.8 104.0L164.7 105.6L166.7 107.1L168.8 108.5L170.9 109.8L173.1 111.0L175.3 112.2L177.6 113.3L179.9 114.3L182.2 115.2L184.6 116.0L187.0 116.6L189.4 117.3L191.8 117.8L194.3 118.2L196.8 118.6L199.2 119.0 M37.9 174.7L38.6 172.3L39.4 169.9L40.1 167.5L40.9 165.1L41.8 162.8L42.7 160.5L43.7 158.2L44.8 155.9L45.9 153.7L47.0 151.4L48.2 149.2L49.4 147.0L50.6 144.9L51.9 142.7L53.2 140.6L54.6 138.5L55.9 136.4L57.2 134.3L58.6 132.1L59.9 130.0 M-2.3 104.6L-1.4 102.3L-0.3 100.0L0.7 97.8L1.9 95.6L3.1 93.4L4.4 91.2L5.7 89.1L7.2 87.1L8.7 85.1L10.4 83.2L12.1 81.4L13.9 79.7L15.8 78.1L17.8 76.6 M196.0 178.4L196.2 175.9L196.4 173.4L196.7 170.9L197.1 168.4L197.5 166.0L197.9 163.5L198.3 161.0L198.8 158.6L199.1 156.1L199.3 153.6L199.4 156.1L199.6 153.6 M135.7 189.1L136.4 186.7L137.0 184.3L137.7 181.9L138.5 179.5L139.2 177.1L140.0 174.8L140.8 172.4L141.5 170.0L142.3 167.6L143.1 165.2L143.9 162.9L144.6 160.5 M29.8 142.0L31.9 140.7L34.0 139.3L36.1 137.9L38.1 136.5L40.1 135.0L42.2 133.5L44.1 132.0L46.1 130.4 M75.6 138.7L75.9 141.2L76.3 143.7L76.9 146.1L77.7 148.5L78.5 150.9L79.3 153.2L80.1 155.6L80.9 158.0L81.7 160.3L82.4 162.7 M107.0 102.4L107.2 104.9L107.3 107.4L107.4 109.9L107.4 112.4L107.4 109.9L107.4 112.4L107.4 109.9L107.5 112.4L107.5 109.9L107.5 112.4 M199.1 172.4L199.5 170.0L200.0 167.5L200.5 165.1L201.0 162.6L201.6 160.2L202.0 157.7L202.2 155.2L202.4 152.7L202.6 155.2L202.9 152.7L203.1 155.2L203.3 152.7L203.5 155.2L203.8 152.7 M78.1 136.9L78.4 139.4L78.8 141.8L79.4 144.3L80.1 146.7L80.9 149.0L81.7 151.4L82.5 153.8L83.2 156.2L83.9 158.6L84.5 161.0L85.0 163.4L85.4 165.9L85.6 168.4L85.7 170.9L85.8 168.4L85.8 170.9L86.0 168.4L86.0 170.9 M82.8 131.6L83.0 134.1L83.0 131.6L83.1 134.1L83.1 131.6L83.2 129.1L83.2 131.6L83.3 129.1L83.3 131.6L83.4 134.1L83.5 136.6L83.8 139.1L84.2 141.6L84.7 144.0L85.4 146.4L86.1 148.8L86.8 151.2 M172.3 136.5L174.7 137.4L177.0 138.3L179.3 139.2L181.6 140.2L183.9 141.1L186.2 142.2L188.4 143.4L190.5 144.7L192.7 146.0L194.7 147.5L196.5 149.2L197.9 151.3L198.7 153.7L198.9 156.2L199.0 153.7L199.2 156.2 M-2.2 181.7L-0.4 179.9L1.3 178.2L3.1 176.4L5.0 174.7L6.8 173.0L8.7 171.3L10.5 169.7L12.4 168.0L14.3 166.4L16.2 164.8L18.1 163.2L20.1 161.6L22.0 160.0L24.0 158.5L25.9 156.9L27.9 155.3 M150.8 177.2L151.0 174.7L151.2 172.2L151.5 169.8L151.8 167.3L152.2 164.8L152.5 162.3L152.8 159.8L153.0 157.3L153.1 154.8L153.2 152.3L153.4 154.8L153.4 152.3L153.6 154.8L153.7 152.3L153.9 154.8L153.9 152.3L154.2 154.8L154.2 152.3 M60.1 149.3L60.3 151.8L60.3 149.3L60.5 151.8L60.8 154.3L61.2 156.7L61.7 159.2L62.4 161.6L63.2 164.0 M140.7 133.0L141.6 135.4L142.6 137.7L143.7 139.9L144.5 142.3L145.1 144.7L145.7 147.2L145.9 149.6L146.0 147.2L146.3 149.6L146.3 147.1 M54.4 136.7L55.8 134.6L57.2 132.5L58.6 130.4L59.9 128.3L61.2 126.2L62.4 124.0L63.7 121.8L64.8 119.6L65.9 117.4L66.9 115.1 M136.9 207.9L137.3 205.5L137.6 203.0L137.9 200.5L138.2 198.0L138.5 195.5L138.8 193.0L139.1 190.6L139.4 188.1L139.8 185.6L140.2 183.2L140.7 180.7L141.3 178.3L141.9 175.8 M155.8 90.0L157.6 91.7L159.4 93.4L161.3 95.1L163.1 96.7L165.0 98.4L167.0 100.0L168.9 101.5L170.9 103.0L173.0 104.5L175.1 105.8L177.2 107.1L179.4 108.2L181.7 109.3L184.0 110.2L186.4 111.1L188.8 111.8 M113.5 207.5L114.3 205.1L115.2 202.8L116.3 200.5L117.4 198.3L118.6 196.1L119.8 193.9L121.0 191.7L122.3 189.6 M109.8 209.8L110.3 207.4L111.1 205.0L111.9 202.7L112.8 200.3L113.9 198.1 M38.1 124.0L39.9 122.2L41.6 120.4L43.2 118.5L44.8 116.6L46.3 114.6L47.7 112.5L49.1 110.4L50.4 108.3L51.7 106.1L52.8 103.9L53.9 101.7L54.9 99.4 M-1.9 207.9L-0.2 206.0L1.5 204.2L3.3 202.4L5.0 200.7L6.8 198.9L8.5 197.1L10.3 195.3L12.0 193.5L13.7 191.7L15.4 189.8L17.0 187.9L18.5 185.9L20.0 183.9L21.5 181.9L22.8 179.8L24.2 177.7 M172.8 107.5L175.0 108.7L177.2 109.8L179.5 110.8L181.9 111.7L184.2 112.5L186.6 113.1L189.1 113.7L191.5 114.3L194.0 114.8L196.4 115.2L198.9 115.6L201.4 115.9L203.9 116.3L206.3 116.5 M196.7 208.8L196.9 206.3L197.1 203.8L197.4 201.3L197.6 198.8L197.8 196.3L197.9 193.8L198.1 191.3 M169.1 86.9L171.2 88.3L173.2 89.7L175.3 91.0L177.5 92.3L179.6 93.6L181.8 94.8L184.1 95.8L186.4 96.9L188.7 97.8L191.0 98.7L193.4 99.5L195.8 100.2L198.2 100.8L200.6 101.4L203.1 101.9L205.6 102.3L208.0 102.7 M70.9 139.6L71.0 142.1L71.1 139.6L71.2 142.1L71.3 139.6L71.5 137.1L71.7 134.6L72.1 132.1L72.6 129.7L73.2 127.3L73.9 124.8 M182.8 199.1L183.4 201.5L183.9 203.9L184.4 206.4L184.7 208.9L185.0 211.3 M8.1 184.4L9.8 182.5L11.4 180.7L13.0 178.8L14.7 176.9L16.3 175.0L17.9 173.1L19.5 171.2L21.2 169.3L22.8 167.4L24.5 165.5L26.2 163.7L27.9 161.8 M186.9 171.1L187.0 173.6L187.1 176.1L187.3 178.6L187.6 181.1L188.0 183.6L188.3 186.1L188.7 188.5L189.1 191.0L189.5 193.5L189.8 196.0L190.2 198.4L190.5 200.9L190.7 203.4L190.9 205.9L191.1 208.4 M28.0 130.2L29.9 128.5L31.7 126.7L33.4 125.0L35.2 123.2L36.9 121.4L38.6 119.5L40.2 117.6L41.7 115.6L43.2 113.6L44.7 111.6L46.2 109.6L47.5 107.5L48.8 105.4L50.1 103.2L51.3 101.0L52.4 98.8L53.5 96.5 M29.9 105.7L31.3 103.6L32.7 101.6L34.3 99.6L35.8 97.6L37.4 95.7L39.1 93.8L40.7 91.9L42.4 90.1 M136.2 208.0L136.7 205.5L137.0 203.0L137.4 200.6L137.7 198.1L138.0 195.6L138.3 193.1L138.6 190.6L139.0 188.2L139.4 185.7L139.9 183.2L140.4 180.8L141.0 178.4L141.6 175.9 M25.7 132.7L27.5 131.1L29.4 129.4L31.2 127.7L33.0 126.0L34.8 124.2L36.5 122.4L38.2 120.6L39.9 118.7L41.5 116.7L43.0 114.8L44.5 112.7L45.9 110.7L47.3 108.6L48.7 106.5L49.9 104.4L51.1 102.2L52.3 100.0L53.4 97.7L54.4 95.4 M138.7 114.3L138.8 111.8L138.8 114.3L138.9 111.8L138.9 114.3L139.0 111.8L139.0 109.3L139.0 111.8L139.1 109.3L139.1 106.8L139.2 104.3L139.3 101.8L139.4 99.3L139.4 96.8 M108.8 152.9L109.0 150.4L109.1 147.9L109.1 145.4L109.1 142.9L109.2 145.4L109.2 142.9 M122.1 122.7L122.5 120.2L123.0 117.7L123.4 115.3L124.0 112.8L124.5 110.4L125.1 108.0L125.7 105.5L126.3 103.1L126.9 100.7 M53.6 160.2L53.6 157.7L53.8 155.2L54.1 152.7L54.6 150.2L55.3 147.8L55.9 145.4L56.7 143.0L57.6 140.7L58.6 138.4L59.6 136.1 M88.4 190.2L89.4 187.9L90.5 185.6L91.5 183.4L92.6 181.1L93.7 178.9L94.7 176.6L95.7 174.3L96.7 172.0L97.6 169.7L98.4 167.3L99.1 164.9L99.7 162.5 M107.6 174.6L109.0 172.5L110.4 170.4L111.7 168.2L112.9 166.1L114.0 163.8L115.1 161.6L116.2 159.3L117.1 157.0L118.0 154.7L118.8 152.3L119.6 149.9L120.2 147.5 M132.4 198.0L133.1 195.6L133.7 193.2L134.3 190.8L135.0 188.4L135.7 186.0L136.4 183.6L137.2 181.2L137.9 178.8L138.7 176.4L139.5 174.1L140.3 171.7L141.1 169.3L142.0 167.0L142.8 164.6 M96.3 208.1L96.6 205.6L97.2 203.2L98.0 200.8L98.9 198.5L100.1 196.3L101.4 194.1L102.7 192.1L104.2 190.0L105.7 188.0L107.2 186.1L108.8 184.1L110.4 182.2L112.0 180.3L113.6 178.3L115.2 176.4L116.7 174.5L118.3 172.5 M159.7 90.1L161.5 91.8L163.4 93.5L165.3 95.1L167.2 96.7L169.1 98.3L171.1 99.9L173.1 101.4L175.1 102.8L177.3 104.1L179.4 105.3 M25.4 146.9L27.6 145.6L29.7 144.3L31.8 142.9L33.9 141.6L35.9 140.2L38.0 138.7L40.0 137.3L42.0 135.7L43.9 134.2L45.8 132.5L47.7 130.9L49.6 129.2L51.3 127.4L53.0 125.6L54.6 123.7L56.2 121.7L57.6 119.7L59.0 117.6L60.2 115.4L61.3 113.2 M162.7 170.1L162.9 172.5L163.3 175.0L163.7 177.5L164.2 179.9L164.9 182.3L165.6 184.8L166.3 187.1L167.2 189.5L168.1 191.8L169.1 194.1 M119.2 148.3L119.6 145.8L120.0 143.3L120.3 140.9L120.6 138.4L120.9 135.9L121.1 133.4 M111.7 187.3L113.3 185.4L114.9 183.5L116.5 181.5L118.0 179.6L119.6 177.6L121.1 175.6L122.5 173.6L123.9 171.5L125.3 169.4L126.7 167.3L128.0 165.2L129.2 163.0L130.4 160.8L131.5 158.6L132.6 156.3L133.6 154.0 M174.8 90.7L176.9 92.0L179.1 93.3L181.3 94.5L183.5 95.6L185.8 96.7L188.1 97.7L190.4 98.6L192.7 99.5 M90.0 102.4L90.2 104.8L90.4 107.3L90.6 109.8L90.6 112.3L90.6 109.8L90.7 112.3L90.7 109.8L90.8 112.3L90.8 109.8L90.9 112.3L90.9 109.8L91.0 112.3 M-0.1 209.3L1.6 207.5L3.4 205.7L5.2 204.0L7.0 202.3L8.9 200.6L10.7 198.8L12.5 197.1L14.3 195.4L16.0 193.6L17.7 191.7L19.3 189.8L20.9 187.9L22.3 185.8L23.7 183.8 M104.5 192.2L106.0 190.1L107.6 188.2L109.1 186.2L110.7 184.3L112.3 182.4L113.9 180.5L115.5 178.6L117.1 176.6L118.7 174.7L120.2 172.7 M60.7 148.4L60.9 150.9L60.9 148.4L61.1 150.9L61.1 148.4L61.3 150.9L61.7 153.4L62.2 155.8L62.9 158.2L63.6 160.6L64.4 163.0L65.3 165.3L66.2 167.7L67.0 170.0L67.8 172.4L68.6 174.8L69.1 177.2 M51.1 163.5L51.1 161.0L51.3 158.5L51.7 156.0L52.2 153.6L52.7 151.1L53.3 148.7L54.1 146.3L54.9 144.0 M164.3 88.3L166.3 89.8L168.2 91.4L170.2 92.9L172.2 94.4L174.3 95.8L176.3 97.3L178.4 98.6L180.6 99.9L182.8 101.0 M82.8 134.2L82.8 131.7L82.9 129.2L83.1 126.7L83.4 124.2L83.7 121.7L84.0 119.3L84.3 116.8L84.6 114.3L84.8 111.8L85.0 109.3 M8.3 148.3L10.3 146.8L12.3 145.3L14.3 143.8L16.3 142.3L18.3 140.8L20.3 139.2L22.3 137.7L24.3 136.2L26.2 134.7L28.2 133.1L30.2 131.6L32.1 130.0L34.0 128.4L35.9 126.8L37.8 125.1L39.6 123.4L41.4 121.6L43.1 119.9 M-2.8 128.3L-2.3 125.9L-1.7 123.5L-1.2 121.0L-0.7 118.6L-0.1 116.1L0.5 113.7L1.1 111.3L1.8 108.9L2.6 106.5L3.5 104.2L4.3 101.8L5.3 99.5L6.4 97.2L7.5 95.0L8.8 92.9L10.2 90.8L11.6 88.8L13.2 86.9L14.9 85.0L16.7 83.3L18.6 81.7 M15.5 136.9L17.2 135.1L18.9 133.3L20.6 131.5L22.3 129.6L24.0 127.7L25.6 125.8L27.2 123.9L28.8 121.9L30.3 120.0L31.8 118.0L33.3 116.0L34.8 114.0 M2.4 211.4L4.2 209.7L6.0 208.0L7.9 206.3L9.8 204.7L11.7 203.1L13.6 201.5L15.5 199.9L17.4 198.2L19.2 196.5L20.9 194.7 M144.8 93.8L146.5 95.6L148.2 97.4L150.0 99.1L151.8 100.9L153.6 102.6L155.4 104.4L157.2 106.1L159.0 107.8L160.9 109.4L162.9 110.9 M67.5 204.3L67.5 206.8L67.6 204.3L67.6 206.8L67.6 204.3L67.7 206.8L67.7 204.3L67.7 206.8L67.8 209.3 M-2.5 140.9L-1.3 138.7L-0.1 136.5L0.9 134.3L1.9 131.9L2.8 129.6L3.6 127.2L4.4 124.9L5.1 122.5L5.8 120.1L6.5 117.7L7.1 115.2L7.8 112.8L8.5 110.4L9.2 108.0L10.0 105.7 M-0.6 139.6L0.6 137.4L1.8 135.2L2.8 132.9L3.8 130.6L4.7 128.3L5.5 125.9L6.2 123.5L6.9 121.1L7.6 118.7L8.3 116.3L9.0 113.9L9.7 111.5L10.5 109.1L11.3 106.8L12.1 104.4L13.1 102.1L14.2 99.9L15.3 97.7 M94.7 120.8L94.7 123.3L94.7 120.8L94.7 123.3L94.7 120.8L94.8 123.3L94.8 120.8L94.8 123.3L94.8 120.8L94.8 123.3L94.9 125.8L95.0 128.3L95.2 130.8L95.4 133.3L95.7 135.8L96.1 138.2L96.6 140.7L97.1 143.1L97.6 145.6L98.1 148.0L98.4 150.5 M76.0 193.4L76.3 190.9L76.7 188.4L77.0 185.9L77.2 183.4L77.3 181.0L77.5 178.5L77.5 176.0L77.6 178.5L77.6 176.0L77.7 178.5 M29.2 114.9L30.5 112.8L31.9 110.7L33.2 108.6L34.6 106.6L36.1 104.5L37.5 102.5L39.0 100.5L40.5 98.4L42.0 96.4L43.5 94.5L45.0 92.5L46.6 90.5 M54.5 154.7L54.5 157.2L54.6 154.7L55.0 152.3L55.4 149.8L56.0 147.4L56.8 145.0L57.6 142.6L58.5 140.3L59.5 138.0L60.6 135.7L61.6 133.5L62.7 131.2L63.8 129.0L64.9 126.8L66.0 124.5L67.1 122.2L68.1 120.0L69.1 117.7L70.0 115.3L70.7 112.9L71.4 110.5L72.0 108.1 M141.2 205.0L141.3 202.5L141.4 200.0L141.5 197.5L141.6 195.0L141.7 192.5L141.8 190.0L142.0 187.5L142.2 185.0L142.5 182.5L142.9 180.1 M139.2 110.6L139.4 113.0L140.0 115.5L141.1 117.7L142.6 119.7L144.3 121.5L146.1 123.3L148.0 125.0L149.9 126.5L151.9 128.0L154.0 129.4 M-2.1 98.1L-1.0 95.9L0.2 93.6L1.4 91.4L2.7 89.3L4.1 87.2L5.5 85.2 M79.1 203.7L79.2 206.1L79.2 203.6L79.4 206.1L79.4 203.6L79.5 206.1L79.5 203.6L79.7 206.1L79.7 203.6L79.9 201.1L80.1 198.7L80.4 196.2L80.8 193.7L81.3 191.3L81.9 188.8L82.5 186.4L83.1 184.0L83.7 181.6L84.3 179.1 M173.2 114.7L175.5 115.7L177.8 116.7L180.2 117.5L182.6 118.2L185.0 118.8L187.5 119.4L189.9 119.9L192.4 120.3L194.8 120.7L197.3 121.1L199.8 121.5L202.3 121.8L204.7 122.2L207.2 122.6 M149.8 191.4L150.3 193.9L150.8 196.4L151.3 198.8L151.7 201.3L152.2 203.7L152.5 206.2 M59.9 133.4L61.1 131.2L62.3 129.0L63.4 126.8L64.6 124.6L65.7 122.4L66.8 120.1L67.8 117.8L68.7 115.5 M-3.0 104.8L-2.0 102.5L-1.0 100.2L0.1 97.9L1.2 95.7L2.5 93.5L3.8 91.4L5.2 89.3L6.6 87.3L8.1 85.3L9.7 83.4L11.5 81.6L13.3 79.8L15.2 78.2L17.1 76.7 M140.0 97.2L141.0 99.5L142.5 101.5L144.1 103.4L145.8 105.2L147.6 107.0L149.4 108.7L151.2 110.4L153.1 112.1L155.0 113.7L157.0 115.3L159.0 116.7L161.0 118.2L163.2 119.5L165.3 120.8 M81.4 134.9L81.5 132.4L81.6 134.9L81.6 132.4L81.7 134.9L81.8 132.4L81.9 134.9L81.9 132.4L82.0 129.9L82.3 127.4L82.5 124.9L82.8 122.4L83.2 119.9L83.5 117.4L83.8 115.0L84.1 112.5L84.3 110.0L84.4 107.5L84.4 110.0L84.5 107.5L84.5 110.0 M34.4 123.1L36.1 121.3L37.7 119.4L39.3 117.5L40.9 115.5L42.4 113.5L43.8 111.5L45.3 109.4L46.7 107.4L48.0 105.2L49.3 103.1L50.5 100.9L51.7 98.7 M164.7 194.4L165.7 196.7L166.7 199.0L167.6 201.3L168.4 203.7L169.1 206.1L169.7 208.5 M139.1 208.0L139.4 205.5L139.6 203.0L139.8 200.5L140.0 198.0L140.2 195.5L140.4 193.0L140.5 190.5L140.8 188.0 M136.4 191.1L136.9 188.7L137.5 186.2L138.1 183.8L138.8 181.4L139.5 179.0L140.2 176.6L140.9 174.2L141.7 171.8L142.4 169.4L143.1 167.0L143.9 164.7L144.6 162.3L145.3 159.9L145.9 157.4L146.5 155.0L147.0 152.6L147.2 150.1L147.3 147.6L147.7 150.0L147.7 152.5L147.9 150.1L148.0 152.6 M5.1 142.5L6.8 140.6L8.4 138.7L10.0 136.8L11.5 134.8L13.0 132.8L14.4 130.7L15.8 128.7L17.2 126.6L18.6 124.5L19.9 122.3L21.1 120.2L22.3 118.0 M1.8 138.1L3.0 135.9L4.2 133.7L5.2 131.4L6.2 129.1L7.1 126.8L8.0 124.4L8.8 122.1L9.6 119.7L10.4 117.3L11.2 115.0L11.9 112.6L12.7 110.2 M101.8 102.3L102.1 104.7L102.3 107.2L102.4 109.7L102.5 112.2L102.5 114.7L102.5 117.2L102.5 114.7 M137.1 113.9L137.6 111.5L138.0 109.0L138.4 106.5L138.7 104.1L139.0 101.6L139.2 99.1L139.4 96.6 M66.1 139.6L66.6 137.1L67.3 134.7L68.0 132.3L68.8 130.0L69.6 127.6L70.5 125.2L71.3 122.9L72.1 120.5 M108.5 185.3L110.1 183.4L111.8 181.5L113.3 179.6L114.9 177.6L116.5 175.7L118.0 173.7L119.4 171.7L120.8 169.6L122.3 167.5L123.6 165.4L124.9 163.3L126.1 161.1L127.3 158.9L128.4 156.7L129.4 154.4L130.4 152.1 M77.8 131.6L78.2 129.1L78.6 126.6L79.1 124.2L79.5 121.7L80.0 119.3L80.5 116.8L80.9 114.4L81.3 111.9 M99.1 170.3L99.9 168.0L100.6 165.6L101.2 163.1L101.6 160.7L101.9 158.2L102.0 155.7L102.0 153.2L102.0 150.7L102.2 153.2L102.2 150.7L102.3 153.2L102.3 150.7L102.4 153.2L102.4 150.7 M69.6 201.6L69.6 204.1L69.6 201.6L69.6 204.1L69.7 201.6L69.7 204.1L69.8 201.6L69.8 199.1L70.0 196.6L70.1 194.1L70.2 191.6L70.3 189.1L70.4 186.6L70.4 184.1L70.5 186.6L70.5 184.1L70.6 186.6 M51.1 162.4L51.3 159.9L51.3 162.4L51.4 159.9L51.4 162.4L51.6 164.9L51.7 167.4L52.0 169.8L52.3 172.3L52.6 174.8L53.0 177.3 M92.0 130.3L92.3 132.7L92.7 135.2L93.1 137.7L93.7 140.1L94.2 142.6L94.8 145.0L95.3 147.4L95.7 149.9L96.1 152.4L96.3 154.9L96.4 157.4L96.4 159.9L96.5 157.4L96.6 159.9L96.7 157.4L96.7 159.9L96.8 157.4L96.9 159.9L97.0 157.4L97.0 159.9L97.1 157.4L97.2 159.9 M153.6 141.9L155.5 143.5L157.3 145.2L159.0 147.1L160.2 149.2L161.0 151.6L161.4 154.1L161.6 156.6L161.6 159.1L161.7 161.6L161.7 164.1L161.7 166.6L161.7 169.1L161.8 171.6L162.0 174.1L162.2 176.6L162.6 179.0 M83.4 131.5L83.5 129.0L83.5 131.5L83.7 129.0L83.7 131.5L83.8 129.0L83.9 126.5L84.1 124.0L84.3 121.5L84.6 119.1L84.9 116.6 M168.8 180.9L169.5 183.3L170.4 185.7L171.3 188.0L172.2 190.3L173.2 192.6L174.2 194.9L175.2 197.2L176.1 199.5L177.0 201.9L177.8 204.2L178.6 206.6L179.2 209.0 M11.7 150.1L13.8 148.8L15.9 147.4L18.0 146.1L20.1 144.7L22.2 143.4L24.3 142.0L26.4 140.7L28.5 139.3L30.6 137.9L32.7 136.6L34.8 135.2L36.9 133.7 M72.4 203.7L72.5 201.2L72.5 203.7L72.6 206.2L72.8 208.7 M24.3 121.3L25.7 119.2L27.0 117.1L28.3 115.0L29.6 112.8L31.0 110.7L32.3 108.6L33.7 106.5L35.1 104.5L36.6 102.4L38.0 100.4L39.5 98.4L41.0 96.4L42.6 94.5L44.1 92.5L45.7 90.6" stroke="#ececec" stroke-width="1.25"/></g><path d="M-1 73 Q20 76 40 85 Q38 105 34 132" stroke="#161616" stroke-width="1.5" fill="none" transform="translate(1.9 1.9)"/><path d="M-1 73 Q20 76 40 85 Q38 105 34 132" stroke="#fafafa" stroke-width="2.3" fill="none"/></svg>
<div class="b" style="left:334px;top:140px;width:73px;height:27px;border:1.5px solid #d8d8d8;box-sizing:border-box;border-radius:14px;"></div>
<div class="t" style="left:362px;top:146.84px;font-size:12px;line-height:12px;color:#eeeeee;transform:scaleY(0.93);transform-origin:0 10.16px;">OK</div>
<div class="b" style="left:334px;top:175px;width:73px;height:27px;border:1.5px solid #7c7c7c;box-sizing:border-box;border-radius:14px;"></div>
<div class="t" style="left:353px;top:181.84px;font-size:12px;line-height:12px;color:#eeeeee;transform:scaleY(0.93);transform-origin:0 10.16px;">Cancel</div>
<div class="b" style="left:334px;top:212px;width:13px;height:13px;background:#dcdcdc;border-radius:2px;"></div>
<svg class="b" style="left:334px;top:212px" width="13" height="13"><path d="M3 6.5 L5.5 9 L10 4" stroke="#2a2a2a" stroke-width="1.8" fill="none"/></svg>
<div class="t" style="left:354px;top:212.84px;font-size:12px;line-height:12px;color:#eeeeee;transform:scaleY(0.93);transform-origin:0 10.16px;">Preview</div>
<svg class="b" style="left:152px;top:353.5px" width="20" height="20"><circle cx="8" cy="8" r="5.3" stroke="#d6d6d6" stroke-width="1.4" fill="none"/><path d="M5.4 8 H10.6" stroke="#d6d6d6" stroke-width="1.1"/><path d="M11.8 11.8 L15.5 15.5" stroke="#d6d6d6" stroke-width="1.8" stroke-linecap="round"/></svg>
<div class="t" style="left:200px;top:355.84px;font-size:12px;line-height:12px;color:#eeeeee;transform:scaleY(0.93);transform-origin:0 10.16px;">100%</div>
<svg class="b" style="left:260px;top:353.5px" width="20" height="20"><circle cx="8" cy="8" r="5.3" stroke="#d6d6d6" stroke-width="1.4" fill="none"/><path d="M5.4 8 H10.6" stroke="#d6d6d6" stroke-width="1.1"/><path d="M8 5.4 V10.6" stroke="#d6d6d6" stroke-width="1.1"/><path d="M11.8 11.8 L15.5 15.5" stroke="#d6d6d6" stroke-width="1.8" stroke-linecap="round"/></svg>
<div class="t" style="left:123px;top:384.84px;font-size:12px;line-height:12px;color:#eeeeee;transform:scaleY(0.93);transform-origin:0 10.16px;">Radius:</div>
<div class="b" style="left:169px;top:382px;width:56px;height:19px;background:#474747;border:1.5px solid #1f6fd8;box-sizing:border-box;"></div>
<div class="t" style="left:173px;top:384.84px;font-size:12px;line-height:12px;color:#eeeeee;transform:scaleY(0.93);transform-origin:0 10.16px;">2,0</div>
<div class="t" style="left:235px;top:384.84px;font-size:12px;line-height:12px;color:#eeeeee;transform:scaleY(0.93);transform-origin:0 10.16px;">Pixels</div>
<div class="b" style="left:119px;top:412px;width:192px;height:3px;background:#7a7a7a;"></div>
<svg class="b" style="left:131px;top:416px" width="15" height="13"><path d="M7.1 0.9 L12.4 6.6 V10.2 H1.8 V6.6 Z" fill="#f2f2f2" stroke="#2a2a2a" stroke-width="1" stroke-linejoin="round"/></svg>
<div class="b" style="left:475px;top:0px;width:282px;height:545px;background:#383838;"></div>
<div class="b" style="left:475px;top:0px;width:282px;height:12px;background:#3f3f3f;border-bottom:1px solid #2f2f2f;box-sizing:border-box;"></div>
<svg class="b" style="left:500px;top:3px" width="12" height="8"><path d="M5.5 2 L2.5 4 L5.5 6 L4.4 4 Z M9.5 2 L6.5 4 L9.5 6 L8.4 4 Z" fill="#d0d0d0" stroke="#d0d0d0" stroke-width="0.5" stroke-linejoin="round"/></svg>
<svg class="b" style="left:741px;top:3px" width="12" height="8"><path d="M2.5 2 L5.5 4 L2.5 6 L3.6 4 Z M6.5 2 L9.5 4 L6.5 6 L7.6 4 Z" fill="#d0d0d0" stroke="#d0d0d0" stroke-width="0.5" stroke-linejoin="round"/></svg>
<div class="b" style="left:477px;top:12px;width:38px;height:533px;background:#535353;"></div>
<div class="b" style="left:477px;top:81px;width:38px;height:1px;background:#353535;"></div>
<div class="b" style="left:477px;top:150px;width:38px;height:1px;background:#353535;"></div>
<div class="b" style="left:477px;top:191px;width:38px;height:1px;background:#353535;"></div>
<div class="b" style="left:517px;top:12px;width:239px;height:533px;background:#535353;"></div>
<div class="b" style="left:517px;top:12px;width:239px;height:28px;background:#424242;"></div>
<div class="b" style="left:517px;top:12px;width:48px;height:28px;background:#535353;"></div>
<div class="b" style="left:625px;top:13px;width:1px;height:27px;background:#3a3a3a;"></div>
<div class="b" style="left:670px;top:13px;width:1px;height:27px;background:#3a3a3a;"></div>
<div class="b" style="left:565px;top:39px;width:191px;height:1px;background:#3a3a3a;"></div>
<div class="t ps" style="left:528px;top:21.54px;font-size:10px;line-height:10px;color:#f0f0f0;transform:scaleY(0.9);transform-origin:0 8.46px;">Layers</div>
<div class="t ps" style="left:574.5px;top:21.54px;font-size:10px;line-height:10px;color:#b2b2b2;transform:scaleY(0.9);transform-origin:0 8.46px;">Channels</div>
<div class="t ps" style="left:635.5px;top:21.54px;font-size:10px;line-height:10px;color:#b2b2b2;transform:scaleY(0.9);transform-origin:0 8.46px;">Paths</div>
<svg class="b" style="left:739px;top:22px" width="12" height="9"><path d="M1 1.5 H11 M1 3.5 H11 M1 5.5 H11 M1 7.5 H11" stroke="#c8c8c8" stroke-width="1"/></svg>
<div class="b" style="left:521px;top:49px;width:91px;height:19px;background:#454545;border:1px solid #5f5f5f;box-sizing:border-box;border-radius:3px;"></div>
<svg class="b" style="left:529px;top:52px" width="13" height="13"><circle cx="7.5" cy="4.8" r="3.3" stroke="#dadada" stroke-width="1.4" fill="none"/><path d="M5.2 7.2 L1.8 10.6" stroke="#dadada" stroke-width="2" stroke-linecap="round"/></svg>
<div class="t ps" style="left:544px;top:53.53px;font-size:10px;line-height:10px;color:#f0f0f0;transform:scaleY(0.9);transform-origin:0 8.46px;">Kind</div>
<svg class="b" style="left:600.5px;top:57px" width="9" height="6"><path d="M0.5 0.8 L4 4.3 L7.5 0.8" stroke="#c8c8c8" stroke-width="1" fill="none"/></svg>
<svg class="b" style="left:622px;top:53px" width="13" height="11"><rect x="0.5" y="0.5" width="11" height="9" stroke="#e6e6e6" stroke-width="1" fill="none"/><path d="M2 8.3 L4 3.6 L5.6 6.2 L7.2 3.9 L9.8 8.3 Z" fill="#e6e6e6"/></svg>
<svg class="b" style="left:646px;top:53px" width="13" height="12"><circle cx="6.5" cy="6" r="5" stroke="#e6e6e6" stroke-width="1.2" fill="none"/><path d="M10.2 2.6 A5 5 0 0 1 2.8 9.4 Z" fill="#e6e6e6"/></svg>
<svg class="b" style="left:671px;top:53px" width="12" height="11"><path d="M1 1 H11 V3.5 H10 L9.6 2.4 H7 V9 H8.5 V10 H3.5 V9 H5 V2.4 H2.4 L2 3.5 H1 Z" fill="#e6e6e6"/></svg>
<svg class="b" style="left:694px;top:52px" width="14" height="14"><rect x="2.5" y="2.5" width="8" height="8" stroke="#e6e6e6" stroke-width="1" fill="none"/><g fill="#535353" stroke="#e6e6e6" stroke-width="1"><circle cx="2.5" cy="2.5" r="1.5"/><circle cx="10.5" cy="2.5" r="1.5"/><circle cx="2.5" cy="10.5" r="1.5"/><circle cx="10.5" cy="10.5" r="1.5"/></g></svg>
<svg class="b" style="left:719px;top:53px" width="12" height="13"><path d="M3.5 5 V0.5 H8.5 L10.5 2.5 V10.5 H7" stroke="#e6e6e6" stroke-width="1" fill="none"/><path d="M8.5 1 V2.5 H10 Z" fill="#e6e6e6"/><rect x="1" y="6" width="6" height="6" fill="#e6e6e6"/></svg>
<div class="b" style="left:743px;top:50px;width:10px;height:18px;background:#474747;border:1px solid #5c5c5c;box-sizing:border-box;border-radius:5px;"></div>
<div class="b" style="left:744px;top:50px;width:8px;height:8px;background:#e2e2e2;border-radius:50%;"></div>
<div class="b" style="left:517px;top:72px;width:239px;height:1px;background:#464646;"></div>
<div class="b" style="left:517px;top:73px;width:239px;height:1px;background:#5a5a5a;"></div>
<div class="b" style="left:521px;top:76px;width:131px;height:18px;background:#454545;border:1px solid #5f5f5f;box-sizing:border-box;border-radius:3px;"></div>
<div class="t ps" style="left:530px;top:80.53px;font-size:10px;line-height:10px;color:#f0f0f0;transform:scaleY(0.9);transform-origin:0 8.46px;">Normal</div>
<svg class="b" style="left:642px;top:84px" width="9" height="6"><path d="M0.5 0.8 L4 4.3 L7.5 0.8" stroke="#c8c8c8" stroke-width="1" fill="none"/></svg>
<div class="t ps" style="left:660px;top:80.53px;font-size:10px;line-height:10px;color:#f0f0f0;transform:scaleY(0.9);transform-origin:0 8.46px;">Opacity:</div>
<div class="b" style="left:701px;top:76px;width:52px;height:18px;background:#454545;border:1px solid #5f5f5f;box-sizing:border-box;border-radius:3px;"></div>
<div class="b" style="left:736px;top:77px;width:1px;height:16px;background:#5f5f5f;"></div>
<div class="t ps" style="left:705px;top:80.53px;font-size:10px;line-height:10px;color:#f0f0f0;transform:scaleY(0.9);transform-origin:0 8.46px;">100%</div>
<svg class="b" style="left:740px;top:84px" width="9" height="6"><path d="M0.5 0.8 L4 4.3 L7.5 0.8" stroke="#c8c8c8" stroke-width="1" fill="none"/></svg>
<div class="b" style="left:517px;top:99px;width:238px;height:1px;background:#474747;"></div>
<div class="b" style="left:517px;top:100px;width:238px;height:1px;background:#5a5a5a;"></div>
<div class="t ps" style="left:524px;top:107.53px;font-size:10px;line-height:10px;color:#f0f0f0;transform:scaleY(0.9);transform-origin:0 8.46px;">Lock:</div>
<svg class="b" style="left:557px;top:107px" width="12" height="12"><rect x="0" y="0" width="11" height="11" fill="#e6e6e6"/><g fill="#3a3a3a"><rect x="1" y="1" width="3" height="3"/><rect x="7" y="1" width="3" height="3"/><rect x="4" y="4" width="3" height="3"/><rect x="1" y="7" width="3" height="3"/><rect x="7" y="7" width="3" height="3"/></g></svg>
<svg class="b" style="left:577px;top:106px" width="16" height="16"><path d="M13.5 0.8 Q15 1.5 14.2 3 L8.6 9.8 L6.6 8 L12.2 1.3 Q12.8 0.6 13.5 0.8 Z" fill="#e6e6e6"/><path d="M6 8.5 L8.2 10.6 Q7.6 14 1 14.6 Q3 13 3.4 11 Q4 8.6 6 8.5 Z" fill="#e6e6e6"/></svg>
<svg class="b" style="left:600px;top:106px" width="14" height="14"><path d="M7 1.5 V12.5 M1.5 7 H12.5" stroke="#e6e6e6" stroke-width="1.4"/><path d="M7 0 L9.8 3 H4.2 Z M7 14 L9.8 11 H4.2 Z M0 7 L3 4.2 V9.8 Z M14 7 L11 4.2 V9.8 Z" fill="#e6e6e6"/></svg>
<svg class="b" style="left:622px;top:106px" width="15" height="14"><path d="M2.5 1 V13 M0 11.5 H13.5 M0 3.5 H8.5 L11.5 6.5 V13" stroke="#e6e6e6" stroke-width="1" fill="none"/><path d="M12 1 L13.5 2.5" stroke="#e6e6e6" stroke-width="1"/></svg>
<svg class="b" style="left:646px;top:106px" width="11" height="14"><path d="M2.6 6.5 V4.2 A2.9 2.9 0 0 1 8.4 4.2 V6.5" stroke="#e6e6e6" stroke-width="1.6" fill="none"/><rect x="0.5" y="6" width="10" height="7.5" fill="#e6e6e6"/><rect x="4.5" y="8.8" width="2" height="2" fill="#444"/></svg>
<div class="t ps" style="left:682px;top:107.53px;font-size:10px;line-height:10px;color:#f0f0f0;transform:scaleY(0.9);transform-origin:0 8.46px;">Fill:</div>
<div class="b" style="left:701px;top:103px;width:52px;height:18px;background:#454545;border:1px solid #5f5f5f;box-sizing:border-box;border-radius:3px;"></div>
<div class="b" style="left:736px;top:104px;width:1px;height:16px;background:#5f5f5f;"></div>
<div class="t ps" style="left:705px;top:107.53px;font-size:10px;line-height:10px;color:#f0f0f0;transform:scaleY(0.9);transform-origin:0 8.46px;">100%</div>
<svg class="b" style="left:740px;top:110px" width="9" height="6"><path d="M0.5 0.8 L4 4.3 L7.5 0.8" stroke="#c8c8c8" stroke-width="1" fill="none"/></svg>
<div class="b" style="left:517px;top:12px;width:1px;height:533px;background:#444444;"></div>
<svg class="b" style="left:487px;top:16px" width="20" height="5"><rect x="0" y="0" width="1" height="4" fill="#444444"/><rect x="2" y="0" width="1" height="4" fill="#444444"/><rect x="4" y="0" width="1" height="4" fill="#444444"/><rect x="6" y="0" width="1" height="4" fill="#444444"/><rect x="8" y="0" width="1" height="4" fill="#444444"/><rect x="10" y="0" width="1" height="4" fill="#444444"/><rect x="12" y="0" width="1" height="4" fill="#444444"/><rect x="14" y="0" width="1" height="4" fill="#444444"/><rect x="16" y="0" width="1" height="4" fill="#444444"/><rect x="18" y="0" width="1" height="4" fill="#444444"/></svg>
<svg class="b" style="left:487px;top:85px" width="20" height="5"><rect x="0" y="0" width="1" height="4" fill="#444444"/><rect x="2" y="0" width="1" height="4" fill="#444444"/><rect x="4" y="0" width="1" height="4" fill="#444444"/><rect x="6" y="0" width="1" height="4" fill="#444444"/><rect x="8" y="0" width="1" height="4" fill="#444444"/><rect x="10" y="0" width="1" height="4" fill="#444444"/><rect x="12" y="0" width="1" height="4" fill="#444444"/><rect x="14" y="0" width="1" height="4" fill="#444444"/><rect x="16" y="0" width="1" height="4" fill="#444444"/><rect x="18" y="0" width="1" height="4" fill="#444444"/></svg>
<svg class="b" style="left:487px;top:154px" width="20" height="5"><rect x="0" y="0" width="1" height="4" fill="#444444"/><rect x="2" y="0" width="1" height="4" fill="#444444"/><rect x="4" y="0" width="1" height="4" fill="#444444"/><rect x="6" y="0" width="1" height="4" fill="#444444"/><rect x="8" y="0" width="1" height="4" fill="#444444"/><rect x="10" y="0" width="1" height="4" fill="#444444"/><rect x="12" y="0" width="1" height="4" fill="#444444"/><rect x="14" y="0" width="1" height="4" fill="#444444"/><rect x="16" y="0" width="1" height="4" fill="#444444"/><rect x="18" y="0" width="1" height="4" fill="#444444"/></svg>
<svg class="b" style="left:490px;top:27px" width="18" height="20"><rect x="1.4" y="1.4" width="4.4" height="4.2" stroke="#e0e0e0" stroke-width="1.1" fill="none"/><rect x="1.4" y="7.5" width="4.4" height="4.2" stroke="#e0e0e0" stroke-width="1.1" fill="none"/><rect x="1" y="13" width="5.2" height="5" fill="#e0e0e0"/><path d="M9 2.2 H15 L9 7.2 Z" fill="#e0e0e0"/><path d="M10.5 4.6 Q16 6.5 15.6 10.5 Q15 14 10 16 Q13.2 13 13.2 10.6 Q13.2 7.8 9.6 6.2 Z" fill="#e0e0e0"/></svg>
<svg class="b" style="left:491px;top:57px" width="16" height="16"><path d="M1.5 1 L14.5 7.7 L1.5 14.5 Z" fill="#e0e0e0"/></svg>
<svg class="b" style="left:489px;top:96px" width="18" height="19"><path d="M5.2 1 L9.6 3.2 V8.4 L5.2 10.6 L0.8 8.4 V3.2 Z" stroke="#e0e0e0" stroke-width="1.3" fill="none" stroke-linejoin="round"/><path d="M0.8 3.2 L5.2 5.4 L9.6 3.2 M5.2 5.4 V10.6" stroke="#e0e0e0" stroke-width="1.2" fill="none"/><rect x="11.5" y="1" width="4" height="3.5" fill="#e0e0e0"/><rect x="11.5" y="5.8" width="4" height="3.5" fill="#e0e0e0"/><rect x="1" y="12.6" width="15" height="4" fill="#e0e0e0"/><path d="M12 13.8 L14 13.8 L13 15 Z" fill="#555"/></svg>
<svg class="b" style="left:487px;top:124px" width="20" height="20"><circle cx="9.5" cy="9.5" r="7.6" stroke="#e0e0e0" stroke-width="1.7" fill="none"/><rect x="8.4" y="4" width="2.2" height="2.2" fill="#e0e0e0"/><rect x="8.4" y="7.2" width="2.2" height="6.8" fill="#e0e0e0"/></svg>
<svg class="b" style="left:486px;top:165px" width="22" height="19"><g fill="#e0e0e0"><rect x="1" y="1" width="2" height="2"/><rect x="1" y="4" width="2" height="2"/><rect x="1" y="7" width="2" height="2"/><rect x="4" y="1" width="4" height="1.6"/><rect x="4" y="4" width="4" height="1.6"/><rect x="4" y="7" width="4" height="1.6"/><circle cx="13" cy="4.5" r="3.3"/><rect x="11.8" y="6" width="2.4" height="5"/><path d="M7 11 H19 V14 H7 Z"/><rect x="8" y="15" width="11" height="1.3"/></g></svg>
<div class="b" style="left:741px;top:127px;width:15px;height:418px;background:#4b4b4b;"></div>
<div class="b" style="left:756px;top:12px;width:1px;height:533px;background:#3a3a3a;"></div>
<div class="b" style="left:517px;top:127px;width:224px;height:1px;background:#454545;"></div>
<div class="b" style="left:548px;top:128px;width:1px;height:38px;background:#474747;"></div>
<svg class="b" style="left:526px;top:141.2px" width="16" height="13"><path d="M1 6.2 Q7.5 -2.6 14 6.2 Q7.5 15 1 6.2 Z" fill="#e4e4e4"/><circle cx="7.5" cy="6.4" r="2.6" fill="#383838"/><circle cx="8.5" cy="5.3" r="0.85" fill="#e4e4e4"/></svg>
<div class="b" style="left:517px;top:166px;width:224px;height:1px;background:#454545;"></div>
<div class="b" style="left:548px;top:167px;width:1px;height:38px;background:#474747;"></div>
<svg class="b" style="left:526px;top:180.2px" width="16" height="13"><path d="M1 6.2 Q7.5 -2.6 14 6.2 Q7.5 15 1 6.2 Z" fill="#e4e4e4"/><circle cx="7.5" cy="6.4" r="2.6" fill="#383838"/><circle cx="8.5" cy="5.3" r="0.85" fill="#e4e4e4"/></svg>
<div class="b" style="left:517px;top:205px;width:224px;height:1px;background:#454545;"></div>
<div class="b" style="left:548px;top:206px;width:1px;height:38px;background:#474747;"></div>
<svg class="b" style="left:526px;top:219.2px" width="16" height="13"><path d="M1 6.2 Q7.5 -2.6 14 6.2 Q7.5 15 1 6.2 Z" fill="#e4e4e4"/><circle cx="7.5" cy="6.4" r="2.6" fill="#383838"/><circle cx="8.5" cy="5.3" r="0.85" fill="#e4e4e4"/></svg>
<div class="b" style="left:517px;top:244px;width:224px;height:1px;background:#454545;"></div>
<div class="b" style="left:548px;top:245px;width:1px;height:38px;background:#474747;"></div>
<svg class="b" style="left:526px;top:258.2px" width="16" height="13"><path d="M1 6.2 Q7.5 -2.6 14 6.2 Q7.5 15 1 6.2 Z" fill="#e4e4e4"/><circle cx="7.5" cy="6.4" r="2.6" fill="#383838"/><circle cx="8.5" cy="5.3" r="0.85" fill="#e4e4e4"/></svg>
<div class="b" style="left:517px;top:283px;width:224px;height:1px;background:#454545;"></div>
<div class="b" style="left:548px;top:284px;width:1px;height:38px;background:#474747;"></div>
<svg class="b" style="left:526px;top:297.2px" width="16" height="13"><path d="M1 6.2 Q7.5 -2.6 14 6.2 Q7.5 15 1 6.2 Z" fill="#e4e4e4"/><circle cx="7.5" cy="6.4" r="2.6" fill="#383838"/><circle cx="8.5" cy="5.3" r="0.85" fill="#e4e4e4"/></svg>
<div class="b" style="left:517px;top:322px;width:224px;height:1px;background:#454545;"></div>
<div class="b" style="left:548px;top:323px;width:1px;height:38px;background:#474747;"></div>
<svg class="b" style="left:526px;top:336.2px" width="16" height="13"><path d="M1 6.2 Q7.5 -2.6 14 6.2 Q7.5 15 1 6.2 Z" fill="#e4e4e4"/><circle cx="7.5" cy="6.4" r="2.6" fill="#383838"/><circle cx="8.5" cy="5.3" r="0.85" fill="#e4e4e4"/></svg>
<div class="b" style="left:517px;top:361px;width:224px;height:1px;background:#454545;"></div>
<div class="b" style="left:548px;top:362px;width:1px;height:38px;background:#474747;"></div>
<svg class="b" style="left:526px;top:375.2px" width="16" height="13"><path d="M1 6.2 Q7.5 -2.6 14 6.2 Q7.5 15 1 6.2 Z" fill="#e4e4e4"/><circle cx="7.5" cy="6.4" r="2.6" fill="#383838"/><circle cx="8.5" cy="5.3" r="0.85" fill="#e4e4e4"/></svg>
<div class="b" style="left:517px;top:400px;width:224px;height:1px;background:#454545;"></div>
<div class="b" style="left:548px;top:401px;width:1px;height:38px;background:#474747;"></div>
<svg class="b" style="left:526px;top:414.2px" width="16" height="13"><path d="M1 6.2 Q7.5 -2.6 14 6.2 Q7.5 15 1 6.2 Z" fill="#e4e4e4"/><circle cx="7.5" cy="6.4" r="2.6" fill="#383838"/><circle cx="8.5" cy="5.3" r="0.85" fill="#e4e4e4"/></svg>
<div class="b" style="left:517px;top:439px;width:224px;height:1px;background:#454545;"></div>
<div class="b" style="left:548px;top:440px;width:1px;height:38px;background:#474747;"></div>
<svg class="b" style="left:526px;top:453.2px" width="16" height="13"><path d="M1 6.2 Q7.5 -2.6 14 6.2 Q7.5 15 1 6.2 Z" fill="#e4e4e4"/><circle cx="7.5" cy="6.4" r="2.6" fill="#383838"/><circle cx="8.5" cy="5.3" r="0.85" fill="#e4e4e4"/></svg>
<div class="b" style="left:517px;top:478px;width:224px;height:1px;background:#454545;"></div>
<div class="b" style="left:548px;top:479px;width:1px;height:38px;background:#474747;"></div>
<svg class="b" style="left:526px;top:492.2px" width="16" height="13"><path d="M1 6.2 Q7.5 -2.6 14 6.2 Q7.5 15 1 6.2 Z" fill="#e4e4e4"/><circle cx="7.5" cy="6.4" r="2.6" fill="#383838"/><circle cx="8.5" cy="5.3" r="0.85" fill="#e4e4e4"/></svg>
<div class="b" style="left:517px;top:517px;width:224px;height:1px;background:#454545;"></div>
<div class="b" style="left:548px;top:518px;width:1px;height:38px;background:#474747;"></div>
<svg class="b" style="left:526px;top:531.2px" width="16" height="13"><path d="M1 6.2 Q7.5 -2.6 14 6.2 Q7.5 15 1 6.2 Z" fill="#e4e4e4"/><circle cx="7.5" cy="6.4" r="2.6" fill="#383838"/><circle cx="8.5" cy="5.3" r="0.85" fill="#e4e4e4"/></svg>
<div class="b" style="left:549px;top:128px;width:192px;height:38px;background:#6a6a6a;"></div>
<svg class="b" style="left:550px;top:129px" width="28" height="38"><path d="M0.75 12 V0.75 H9 M18 0.75 H26.25 V12 M26.25 24 V35.25 H18 M9 35.25 H0.75 V24" stroke="#ffffff" stroke-width="1.5" fill="none"/><rect x="2.75" y="2.75" width="21.5" height="30.5" fill="#8a8a8a" stroke="#2a2a2a" stroke-width="1.6"/><rect x="23" y="12" width="1" height="1" fill="#a4a4a4"/><rect x="20" y="4" width="1" height="1" fill="#808080"/><rect x="11" y="24" width="1" height="1" fill="#9a9a9a"/><rect x="9" y="7" width="1" height="1" fill="#a4a4a4"/><rect x="19" y="31" width="1" height="1" fill="#7a7a7a"/><rect x="16" y="21" width="1" height="1" fill="#9a9a9a"/><rect x="22" y="11" width="1" height="1" fill="#9a9a9a"/><rect x="10" y="17" width="1" height="1" fill="#a4a4a4"/><rect x="9" y="31" width="1" height="1" fill="#808080"/><rect x="9" y="28" width="1" height="1" fill="#9a9a9a"/><rect x="8" y="23" width="1" height="1" fill="#808080"/><rect x="8" y="8" width="1" height="1" fill="#9a9a9a"/><rect x="4" y="10" width="1" height="1" fill="#7a7a7a"/><rect x="9" y="31" width="1" height="1" fill="#7a7a7a"/><rect x="13" y="14" width="1" height="1" fill="#7a7a7a"/><rect x="21" y="32" width="1" height="1" fill="#7a7a7a"/><rect x="9" y="26" width="1" height="1" fill="#7a7a7a"/><rect x="16" y="13" width="1" height="1" fill="#9a9a9a"/><rect x="15" y="17" width="1" height="1" fill="#7a7a7a"/><rect x="8" y="12" width="1" height="1" fill="#9a9a9a"/><rect x="14" y="13" width="1" height="1" fill="#9a9a9a"/><rect x="23" y="25" width="1" height="1" fill="#a4a4a4"/><rect x="6" y="13" width="1" height="1" fill="#a4a4a4"/><rect x="13" y="19" width="1" height="1" fill="#a4a4a4"/><rect x="9" y="19" width="1" height="1" fill="#808080"/><rect x="9" y="5" width="1" height="1" fill="#a4a4a4"/><rect x="4" y="27" width="1" height="1" fill="#a4a4a4"/><rect x="16" y="4" width="1" height="1" fill="#808080"/><rect x="15" y="16" width="1" height="1" fill="#9a9a9a"/><rect x="18" y="5" width="1" height="1" fill="#7a7a7a"/><rect x="23" y="10" width="1" height="1" fill="#9a9a9a"/><rect x="11" y="30" width="1" height="1" fill="#808080"/><rect x="15" y="20" width="1" height="1" fill="#a4a4a4"/><rect x="20" y="12" width="1" height="1" fill="#808080"/><rect x="7" y="22" width="1" height="1" fill="#a4a4a4"/><rect x="13" y="5" width="1" height="1" fill="#808080"/><rect x="6" y="10" width="1" height="1" fill="#a4a4a4"/><rect x="20" y="23" width="1" height="1" fill="#a4a4a4"/><rect x="8" y="14" width="1" height="1" fill="#a4a4a4"/><rect x="21" y="6" width="1" height="1" fill="#a4a4a4"/><rect x="14" y="13" width="1" height="1" fill="#7a7a7a"/><rect x="6" y="24" width="1" height="1" fill="#7a7a7a"/><rect x="13" y="19" width="1" height="1" fill="#7a7a7a"/><rect x="5" y="6" width="1" height="1" fill="#808080"/><rect x="5" y="11" width="1" height="1" fill="#a4a4a4"/><rect x="12" y="18" width="1" height="1" fill="#808080"/><rect x="8" y="5" width="1" height="1" fill="#9a9a9a"/><rect x="19" y="14" width="1" height="1" fill="#7a7a7a"/><rect x="8" y="27" width="1" height="1" fill="#7a7a7a"/><rect x="17" y="7" width="1" height="1" fill="#7a7a7a"/><rect x="17" y="15" width="1" height="1" fill="#7a7a7a"/><rect x="5" y="31" width="1" height="1" fill="#808080"/><rect x="13" y="8" width="1" height="1" fill="#808080"/><rect x="23" y="31" width="1" height="1" fill="#7a7a7a"/><rect x="20" y="18" width="1" height="1" fill="#808080"/><rect x="14" y="19" width="1" height="1" fill="#a4a4a4"/><rect x="13" y="19" width="1" height="1" fill="#808080"/><rect x="8" y="7" width="1" height="1" fill="#808080"/><rect x="21" y="9" width="1" height="1" fill="#808080"/><rect x="14" y="9" width="1" height="1" fill="#9a9a9a"/></svg>
<div class="t ps" style="left:585px;top:143.53px;font-size:10px;line-height:10px;color:#f0f0f0;transform:scaleY(0.9);transform-origin:0 8.46px;">Layer 1</div>
<svg class="b" style="left:559px;top:178px" width="19" height="14"><path d="M0 13 L0 6.0 L0.4 6.0 L1.5 6.0 L1.7 8.6 L2.0 8.6 L2.2 3.9 L3.3 3.9 L3.5 8.6 L4.1 8.6 L4.3 7.0 L5.4 7.0 L5.6 8.6 L6.1 8.6 L6.3 3.0 L7.4 3.0 L7.6 8.6 L7.9 8.6 L8.1 5.0 L9.2 5.0 L9.4 8.6 L9.1 8.6 L9.3 2.0 L10.4 2.0 L10.6 8.6 L10.3 8.6 L10.5 4.4 L11.6 4.4 L11.8 8.6 L12.8 8.6 L13.0 3.0 L14.1 3.0 L14.3 8.6 L15.2 8.6 L15.4 6.5 L16.5 6.5 L16.7 8.6 L16.8 8.6 L17.0 5.0 L18.1 5.0 L18.1 13 Z" fill="#e0e0e0"/></svg>
<svg class="b" style="left:586px;top:177.7px" width="10" height="17"><g fill="#d0d0d0"><ellipse cx="4.9" cy="4.6" rx="4" ry="4.2"/><ellipse cx="4.9" cy="10.2" rx="4" ry="4.2"/></g><g fill="#3a3a3a"><ellipse cx="4.9" cy="4.6" rx="2.4" ry="2.6"/><ellipse cx="4.9" cy="10.2" rx="2.4" ry="2.6"/></g><rect x="4" y="3.6" width="1.8" height="7.6" rx="0.9" fill="#ececec"/></svg>
<div class="b" style="left:599px;top:170px;width:23px;height:32px;background:#ffffff;border:1px solid #262626;box-sizing:border-box;border-radius:1px;"></div>
<div class="t ps" style="left:632px;top:182.53px;font-size:10px;line-height:10px;color:#f0f0f0;transform:scaleY(0.9);transform-origin:0 8.46px;">Overall Brightness</div>
<svg class="b" style="left:559px;top:218px" width="17" height="16"><defs><radialGradient id="vg" cx="0.5" cy="0.35" r="0.6"><stop offset="0" stop-color="#5a5a5a"/><stop offset="1" stop-color="#8a8a8a"/></radialGradient></defs><path d="M1.6 1.6 H14.6 L8.1 13.2 Z" stroke="#dadada" stroke-width="1.4" fill="url(#vg)" stroke-linejoin="round"/></svg>
<svg class="b" style="left:586px;top:216.7px" width="10" height="17"><g fill="#d0d0d0"><ellipse cx="4.9" cy="4.6" rx="4" ry="4.2"/><ellipse cx="4.9" cy="10.2" rx="4" ry="4.2"/></g><g fill="#3a3a3a"><ellipse cx="4.9" cy="4.6" rx="2.4" ry="2.6"/><ellipse cx="4.9" cy="10.2" rx="2.4" ry="2.6"/></g><rect x="4" y="3.6" width="1.8" height="7.6" rx="0.9" fill="#ececec"/></svg>
<div class="b" style="left:599px;top:209px;width:23px;height:32px;background:#ffffff;border:1px solid #262626;box-sizing:border-box;border-radius:1px;"></div>
<div class="t ps" style="left:632px;top:221.53px;font-size:10px;line-height:10px;color:#f0f0f0;transform:scaleY(0.9);transform-origin:0 8.46px;">Overall Vibrance/S...</div>
<svg class="b" style="left:559px;top:256px" width="19" height="14"><path d="M1.5 0.5 H16.5 V12.5 H1.5 Z M6.5 0.5 V12.5 M11.5 0.5 V12.5 M1.5 4.5 H16.5 M1.5 8.5 H16.5" stroke="#b4b4b4" stroke-width="1" fill="none"/><path d="M1.5 12.3 Q6.5 12.3 8.5 7 Q10.5 0.7 16.5 0.7" stroke="#e8e8e8" stroke-width="1.2" fill="none"/></svg>
<svg class="b" style="left:586px;top:255.7px" width="10" height="17"><g fill="#d0d0d0"><ellipse cx="4.9" cy="4.6" rx="4" ry="4.2"/><ellipse cx="4.9" cy="10.2" rx="4" ry="4.2"/></g><g fill="#3a3a3a"><ellipse cx="4.9" cy="4.6" rx="2.4" ry="2.6"/><ellipse cx="4.9" cy="10.2" rx="2.4" ry="2.6"/></g><rect x="4" y="3.6" width="1.8" height="7.6" rx="0.9" fill="#ececec"/></svg>
<div class="b" style="left:599px;top:248px;width:23px;height:32px;background:#ffffff;border:1px solid #262626;box-sizing:border-box;border-radius:1px;"></div>
<div class="t ps" style="left:632px;top:260.54px;font-size:10px;line-height:10px;color:#f0f0f0;transform:scaleY(0.9);transform-origin:0 8.46px;">Color Look</div>
<svg class="b" style="left:557.5px;top:299px" width="9" height="10"><path d="M7.3 1.4 H3.9 V6.5" stroke="#e0e0e0" stroke-width="1.2" fill="none"/><path d="M1.2 4.8 L3.9 8.3 L6.6 4.8 Z" fill="#e0e0e0"/></svg>
<svg class="b" style="left:576px;top:296px" width="17" height="14"><rect x="0.6" y="0.6" width="15.4" height="11.8" stroke="#e0e0e0" stroke-width="1.2" fill="none"/><rect x="8.3" y="0.6" width="7.7" height="11.8" fill="#e0e0e0"/></svg>
<svg class="b" style="left:602px;top:294.7px" width="10" height="17"><g fill="#d0d0d0"><ellipse cx="4.9" cy="4.6" rx="4" ry="4.2"/><ellipse cx="4.9" cy="10.2" rx="4" ry="4.2"/></g><g fill="#3a3a3a"><ellipse cx="4.9" cy="4.6" rx="2.4" ry="2.6"/><ellipse cx="4.9" cy="10.2" rx="2.4" ry="2.6"/></g><rect x="4" y="3.6" width="1.8" height="7.6" rx="0.9" fill="#ececec"/></svg>
<div class="b" style="left:615px;top:287px;width:23px;height:32px;background:#ffffff;border:1px solid #262626;box-sizing:border-box;border-radius:1px;"></div>
<div class="t ps" style="left:648px;top:299.54px;font-size:10px;line-height:10px;color:#f0f0f0;transform:scaleY(0.9);transform-origin:0 8.46px;">Texture_1_Des...</div>
<svg class="b" style="left:557.5px;top:377px" width="9" height="10"><path d="M7.3 1.4 H3.9 V6.5" stroke="#e0e0e0" stroke-width="1.2" fill="none"/><path d="M1.2 4.8 L3.9 8.3 L6.6 4.8 Z" fill="#e0e0e0"/></svg>
<svg class="b" style="left:576px;top:374px" width="17" height="14"><rect x="0.6" y="0.6" width="15.4" height="11.8" stroke="#e0e0e0" stroke-width="1.2" fill="none"/><rect x="8.3" y="0.6" width="7.7" height="11.8" fill="#e0e0e0"/></svg>
<svg class="b" style="left:602px;top:372.7px" width="10" height="17"><g fill="#d0d0d0"><ellipse cx="4.9" cy="4.6" rx="4" ry="4.2"/><ellipse cx="4.9" cy="10.2" rx="4" ry="4.2"/></g><g fill="#3a3a3a"><ellipse cx="4.9" cy="4.6" rx="2.4" ry="2.6"/><ellipse cx="4.9" cy="10.2" rx="2.4" ry="2.6"/></g><rect x="4" y="3.6" width="1.8" height="7.6" rx="0.9" fill="#ececec"/></svg>
<div class="b" style="left:615px;top:365px;width:23px;height:32px;background:#ffffff;border:1px solid #262626;box-sizing:border-box;border-radius:1px;"></div>
<div class="t ps" style="left:648px;top:377.54px;font-size:10px;line-height:10px;color:#f0f0f0;transform:scaleY(0.9);transform-origin:0 8.46px;">Texture_2_Des...</div>
<svg class="b" style="left:551px;top:326px" width="26" height="34"><defs><linearGradient id="g1" x1="0.9" y1="0" x2="0.1" y2="1"><stop offset="0" stop-color="#ef7a30"/><stop offset="0.35" stop-color="#f1b23c"/><stop offset="0.55" stop-color="#f2e6a8"/><stop offset="0.75" stop-color="#c8ecf0"/><stop offset="1" stop-color="#2ab8ee"/></linearGradient><clipPath id="c1"><path d="M1.4 0.5 H23.3 V18.4 H10.9 V31 H1.4 Z"/></clipPath><clipPath id="c2"><path d="M1.4 0.5 H23.3 V18.4 H10.9 V31 H1.4 Z"/></clipPath></defs><path d="M1.4 0.5 H23.3 V18.4 H10.9 V31 H1.4 Z" fill="url(#g1)"/><g clip-path="url(#c1)"><rect x="6.5" y="9.7" width="1" height="1" fill="#fff8d0" opacity="0.48"/><rect x="14.2" y="11.0" width="1" height="1" fill="#fff8d0" opacity="0.33"/><rect x="1.8" y="14.4" width="1" height="1" fill="#fff8d0" opacity="0.43"/><rect x="6.4" y="16.9" width="1" height="1" fill="#fff8d0" opacity="0.54"/><rect x="19.1" y="8.6" width="1" height="1" fill="#fff8d0" opacity="0.62"/><rect x="4.7" y="11.2" width="1" height="1" fill="#fff8d0" opacity="0.73"/><rect x="12.5" y="12.9" width="1" height="1" fill="#fff8d0" opacity="0.64"/><rect x="2.8" y="13.1" width="1" height="1" fill="#fff8d0" opacity="0.60"/><rect x="7.8" y="1.5" width="1" height="1" fill="#fff8d0" opacity="0.73"/><rect x="11.4" y="12.5" width="1" height="1" fill="#fff8d0" opacity="0.74"/><rect x="16.5" y="15.7" width="1" height="1" fill="#fff8d0" opacity="0.50"/><rect x="18.3" y="8.1" width="1" height="1" fill="#fff8d0" opacity="0.77"/><rect x="20.0" y="2.6" width="1" height="1" fill="#fff8d0" opacity="0.37"/><rect x="6.1" y="16.4" width="1" height="1" fill="#fff8d0" opacity="0.52"/><rect x="14.7" y="5.8" width="1" height="1" fill="#fff8d0" opacity="0.55"/><rect x="9.6" y="6.6" width="1" height="1" fill="#fff8d0" opacity="0.59"/><rect x="13.8" y="15.5" width="1" height="1" fill="#fff8d0" opacity="0.64"/><rect x="21.0" y="14.7" width="1" height="1" fill="#fff8d0" opacity="0.80"/><rect x="15.6" y="3.6" width="1" height="1" fill="#fff8d0" opacity="0.73"/><rect x="21.8" y="15.5" width="1" height="1" fill="#fff8d0" opacity="0.58"/><rect x="16.5" y="4.4" width="1" height="1" fill="#fff8d0" opacity="0.72"/><rect x="13.5" y="5.6" width="1" height="1" fill="#fff8d0" opacity="0.33"/><rect x="19.4" y="16.8" width="1" height="1" fill="#fff8d0" opacity="0.34"/><rect x="18.3" y="7.6" width="1" height="1" fill="#fff8d0" opacity="0.38"/><rect x="7.7" y="13.3" width="1" height="1" fill="#fff8d0" opacity="0.74"/><rect x="2.4" y="10.8" width="1" height="1" fill="#fff8d0" opacity="0.32"/><rect x="16.6" y="6.3" width="1" height="1" fill="#fff8d0" opacity="0.74"/><rect x="22.1" y="9.1" width="1" height="1" fill="#fff8d0" opacity="0.80"/><rect x="8.0" y="2.2" width="1" height="1" fill="#fff8d0" opacity="0.60"/><rect x="2.2" y="4.2" width="1" height="1" fill="#fff8d0" opacity="0.50"/><rect x="14.3" y="3.5" width="1" height="1" fill="#fff8d0" opacity="0.32"/><rect x="19.7" y="6.0" width="1" height="1" fill="#fff8d0" opacity="0.78"/><rect x="20.3" y="7.0" width="1" height="1" fill="#fff8d0" opacity="0.53"/><rect x="12.4" y="11.3" width="1" height="1" fill="#fff8d0" opacity="0.60"/><rect x="13.2" y="10.9" width="1" height="1" fill="#fff8d0" opacity="0.77"/><rect x="12.1" y="7.9" width="1" height="1" fill="#fff8d0" opacity="0.66"/><rect x="6.5" y="5.8" width="1" height="1" fill="#fff8d0" opacity="0.79"/><rect x="12.4" y="9.8" width="1" height="1" fill="#fff8d0" opacity="0.31"/><rect x="10.2" y="10.3" width="1" height="1" fill="#fff8d0" opacity="0.31"/><rect x="14.4" y="11.1" width="1" height="1" fill="#fff8d0" opacity="0.33"/><rect x="7.1" y="23.3" width="1" height="1" fill="#e8f8ff" opacity="0.64"/><rect x="4.7" y="26.5" width="1" height="1" fill="#e8f8ff" opacity="0.67"/><rect x="1.7" y="17.8" width="1" height="1" fill="#e8f8ff" opacity="0.64"/><rect x="10.2" y="20.4" width="1" height="1" fill="#e8f8ff" opacity="0.53"/><rect x="6.8" y="21.3" width="1" height="1" fill="#e8f8ff" opacity="0.48"/><rect x="4.3" y="22.0" width="1" height="1" fill="#e8f8ff" opacity="0.60"/><rect x="4.2" y="22.1" width="1" height="1" fill="#e8f8ff" opacity="0.69"/><rect x="1.7" y="24.7" width="1" height="1" fill="#e8f8ff" opacity="0.67"/><rect x="4.3" y="20.0" width="1" height="1" fill="#e8f8ff" opacity="0.70"/><rect x="3.6" y="19.5" width="1" height="1" fill="#e8f8ff" opacity="0.52"/><rect x="7.8" y="18.4" width="1" height="1" fill="#e8f8ff" opacity="0.46"/><rect x="4.5" y="28.3" width="1" height="1" fill="#e8f8ff" opacity="0.52"/></g><path d="M1.4 0.5 H23.3 V18.4 H10.9 V31 H1.4 Z" fill="none" stroke="#1e1e1e" stroke-width="1.2"/><path d="M14 26 V20.5 H19 L22 23.5 V30.5 H18" stroke="#e0e0e0" stroke-width="1.6" fill="none"/><path d="M19 20.5 V23.5 H22 Z" fill="#e0e0e0"/><rect x="12" y="26.6" width="4.7" height="4.9" fill="#e0e0e0"/></svg>
<div class="t ps" style="left:585px;top:338.04px;font-size:10px;line-height:10px;color:#f0f0f0;transform:scaleY(0.9);transform-origin:0 8.46px;">Texture_1</div>
<div class="b" style="left:583px;top:347px;width:51px;height:1px;background:#f0f0f0;"></div>
<svg class="b" style="left:551px;top:404px" width="26" height="34"><path d="M1.4 0.5 H23.3 V18.4 H10.9 V31 H1.4 Z" fill="#2c3038"/><g clip-path="url(#c2)"><rect x="19.5" y="6.4" width="1" height="1" fill="#a08870" opacity="0.84"/><rect x="11.0" y="2.9" width="1" height="1" fill="#a08870" opacity="0.56"/><rect x="19.1" y="14.8" width="1" height="1" fill="#8aa0b8" opacity="0.80"/><rect x="15.0" y="21.7" width="1" height="1" fill="#a08870" opacity="0.61"/><rect x="12.4" y="23.3" width="1" height="1" fill="#c0c8d0" opacity="0.55"/><rect x="13.4" y="7.6" width="1" height="1" fill="#a08870" opacity="0.40"/><rect x="21.3" y="30.3" width="1" height="1" fill="#c0c8d0" opacity="0.68"/><rect x="22.2" y="17.4" width="1" height="1" fill="#c0c8d0" opacity="0.82"/><rect x="15.4" y="5.6" width="1" height="1" fill="#8aa0b8" opacity="0.84"/><rect x="19.6" y="30.1" width="1" height="1" fill="#6a8aa8" opacity="0.81"/><rect x="2.4" y="26.4" width="1" height="1" fill="#a08870" opacity="0.85"/><rect x="20.4" y="1.2" width="1" height="1" fill="#6a8aa8" opacity="0.49"/><rect x="7.8" y="24.1" width="1" height="1" fill="#c0c8d0" opacity="0.43"/><rect x="20.7" y="3.0" width="1" height="1" fill="#c0c8d0" opacity="0.81"/><rect x="2.8" y="3.0" width="1" height="1" fill="#6a8aa8" opacity="0.49"/><rect x="18.1" y="27.9" width="1" height="1" fill="#6a8aa8" opacity="0.64"/><rect x="13.5" y="13.1" width="1" height="1" fill="#a08870" opacity="0.53"/><rect x="12.6" y="8.6" width="1" height="1" fill="#6a8aa8" opacity="0.83"/><rect x="17.8" y="1.8" width="1" height="1" fill="#c0c8d0" opacity="0.89"/><rect x="19.4" y="9.0" width="1" height="1" fill="#8aa0b8" opacity="0.48"/><rect x="3.0" y="7.2" width="1" height="1" fill="#8aa0b8" opacity="0.58"/><rect x="5.5" y="3.0" width="1" height="1" fill="#6a8aa8" opacity="0.76"/><rect x="9.5" y="3.9" width="1" height="1" fill="#8aa0b8" opacity="0.63"/><rect x="15.2" y="11.2" width="1" height="1" fill="#6a8aa8" opacity="0.71"/><rect x="10.6" y="8.9" width="1" height="1" fill="#8aa0b8" opacity="0.61"/><rect x="16.1" y="4.9" width="1" height="1" fill="#8aa0b8" opacity="0.75"/><rect x="3.0" y="7.8" width="1" height="1" fill="#6a8aa8" opacity="0.87"/><rect x="9.4" y="27.7" width="1" height="1" fill="#8aa0b8" opacity="0.46"/><rect x="16.0" y="26.9" width="1" height="1" fill="#c0c8d0" opacity="0.73"/><rect x="16.9" y="2.7" width="1" height="1" fill="#6a8aa8" opacity="0.64"/><rect x="6.5" y="9.4" width="1" height="1" fill="#6a8aa8" opacity="0.73"/><rect x="9.4" y="21.6" width="1" height="1" fill="#6a8aa8" opacity="0.41"/><rect x="3.9" y="12.1" width="1" height="1" fill="#8aa0b8" opacity="0.69"/><rect x="18.3" y="13.3" width="1" height="1" fill="#a08870" opacity="0.45"/><rect x="17.2" y="17.8" width="1" height="1" fill="#8aa0b8" opacity="0.83"/><rect x="5.3" y="17.0" width="1" height="1" fill="#a08870" opacity="0.63"/><rect x="16.2" y="20.4" width="1" height="1" fill="#c0c8d0" opacity="0.87"/><rect x="13.2" y="22.1" width="1" height="1" fill="#a08870" opacity="0.89"/><rect x="10.2" y="19.2" width="1" height="1" fill="#c0c8d0" opacity="0.48"/><rect x="9.9" y="19.2" width="1" height="1" fill="#c0c8d0" opacity="0.77"/><rect x="20.7" y="8.1" width="1" height="1" fill="#a08870" opacity="0.47"/><rect x="17.3" y="9.2" width="1" height="1" fill="#a08870" opacity="0.83"/><rect x="12.8" y="26.1" width="1" height="1" fill="#c0c8d0" opacity="0.70"/><rect x="13.8" y="29.0" width="1" height="1" fill="#8aa0b8" opacity="0.41"/><rect x="11.6" y="3.8" width="1" height="1" fill="#8aa0b8" opacity="0.52"/></g><path d="M1.4 0.5 H23.3 V18.4 H10.9 V31 H1.4 Z" fill="none" stroke="#262626" stroke-width="1.2"/><path d="M14 26 V20.5 H19 L22 23.5 V30.5 H18" stroke="#e0e0e0" stroke-width="1.6" fill="none"/><path d="M19 20.5 V23.5 H22 Z" fill="#e0e0e0"/><rect x="12" y="26.6" width="4.7" height="4.9" fill="#e0e0e0"/></svg>
<div class="t ps" style="left:585px;top:416.04px;font-size:10px;line-height:10px;color:#f0f0f0;transform:scaleY(0.9);transform-origin:0 8.46px;">Texture_2</div>
<div class="b" style="left:583px;top:425px;width:51px;height:1px;background:#f0f0f0;"></div>
<svg class="b" style="left:552px;top:443.2px" width="24" height="33"><defs><linearGradient id="pbg" x1="0" y1="0" x2="1" y2="1"><stop offset="0" stop-color="#03070c"/><stop offset="0.5" stop-color="#0c1c28"/><stop offset="1" stop-color="#2a5870"/></linearGradient></defs><rect x="0.5" y="0.5" width="22" height="31" fill="url(#pbg)" stroke="#1e1e1e" stroke-width="1"/><path d="M0.5 31.5 V24.5 Q5 21.2 10 20.6 Q16 20.6 22.5 24.2 V31.5 Z" fill="#c2cfd1"/><ellipse cx="12" cy="13.2" rx="4.9" ry="6.6" fill="#b87850"/><ellipse cx="12" cy="10.2" rx="3.8" ry="2.8" fill="#d29c72"/><path d="M4.6 13.5 Q3.6 6 7 3 Q11 0.4 15.6 2.4 Q19.8 5 18.8 13.2 L16.9 12.2 Q17 7.2 12 6.8 Q7.6 7 6.9 12.8 Z" fill="#eeeeee"/><path d="M8.2 12.2 H10.9 M13.1 12.2 H15.8" stroke="#3a2a20" stroke-width="1.2"/><path d="M8.6 17.6 Q12 15.9 15.5 17.6" stroke="#2a2222" stroke-width="1.5" fill="none"/><path d="M9.2 18.6 Q12 22.4 15.4 18.6 V20.4 Q12 23.8 9.2 20.4 Z" fill="#cfc8c0"/><path d="M0.8 28.8 L13 20.4 M11 31.5 L21 23.4" stroke="#141414" stroke-width="1.3"/></svg>
<div class="t ps" style="left:585px;top:455.54px;font-size:10px;line-height:10px;color:#f0f0f0;transform:scaleY(0.9);transform-origin:0 8.46px;">Painting Sharpening</div>
<svg class="b" style="left:552px;top:482.2px" width="24" height="33"><defs><linearGradient id="pbg" x1="0" y1="0" x2="1" y2="1"><stop offset="0" stop-color="#03070c"/><stop offset="0.5" stop-color="#0c1c28"/><stop offset="1" stop-color="#2a5870"/></linearGradient></defs><rect x="0.5" y="0.5" width="22" height="31" fill="url(#pbg)" stroke="#1e1e1e" stroke-width="1"/><path d="M0.5 31.5 V24.5 Q5 21.2 10 20.6 Q16 20.6 22.5 24.2 V31.5 Z" fill="#c2cfd1"/><ellipse cx="12" cy="13.2" rx="4.9" ry="6.6" fill="#b87850"/><ellipse cx="12" cy="10.2" rx="3.8" ry="2.8" fill="#d29c72"/><path d="M4.6 13.5 Q3.6 6 7 3 Q11 0.4 15.6 2.4 Q19.8 5 18.8 13.2 L16.9 12.2 Q17 7.2 12 6.8 Q7.6 7 6.9 12.8 Z" fill="#eeeeee"/><path d="M8.2 12.2 H10.9 M13.1 12.2 H15.8" stroke="#3a2a20" stroke-width="1.2"/><path d="M8.6 17.6 Q12 15.9 15.5 17.6" stroke="#2a2222" stroke-width="1.5" fill="none"/><path d="M9.2 18.6 Q12 22.4 15.4 18.6 V20.4 Q12 23.8 9.2 20.4 Z" fill="#cfc8c0"/><path d="M0.8 28.8 L13 20.4 M11 31.5 L21 23.4" stroke="#141414" stroke-width="1.3"/></svg>
<div class="t ps" style="left:585px;top:494.54px;font-size:10px;line-height:10px;color:#f0f0f0;transform:scaleY(0.9);transform-origin:0 8.46px;">Painting Effect</div>
<svg class="b" style="left:552px;top:521.2px" width="24" height="33"><defs><linearGradient id="pbg" x1="0" y1="0" x2="1" y2="1"><stop offset="0" stop-color="#03070c"/><stop offset="0.5" stop-color="#0c1c28"/><stop offset="1" stop-color="#2a5870"/></linearGradient></defs><rect x="0.5" y="0.5" width="22" height="31" fill="url(#pbg)" stroke="#1e1e1e" stroke-width="1"/><path d="M0.5 31.5 V24.5 Q5 21.2 10 20.6 Q16 20.6 22.5 24.2 V31.5 Z" fill="#c2cfd1"/><ellipse cx="12" cy="13.2" rx="4.9" ry="6.6" fill="#b87850"/><ellipse cx="12" cy="10.2" rx="3.8" ry="2.8" fill="#d29c72"/><path d="M4.6 13.5 Q3.6 6 7 3 Q11 0.4 15.6 2.4 Q19.8 5 18.8 13.2 L16.9 12.2 Q17 7.2 12 6.8 Q7.6 7 6.9 12.8 Z" fill="#eeeeee"/><path d="M8.2 12.2 H10.9 M13.1 12.2 H15.8" stroke="#3a2a20" stroke-width="1.2"/><path d="M8.6 17.6 Q12 15.9 15.5 17.6" stroke="#2a2222" stroke-width="1.5" fill="none"/><path d="M9.2 18.6 Q12 22.4 15.4 18.6 V20.4 Q12 23.8 9.2 20.4 Z" fill="#cfc8c0"/><path d="M0.8 28.8 L13 20.4 M11 31.5 L21 23.4" stroke="#141414" stroke-width="1.3"/></svg>
<div class="t ps" style="left:585px;top:533.53px;font-size:10px;line-height:10px;color:#f0f0f0;transform:scaleY(0.9);transform-origin:0 8.46px;font-style:italic;">Background</div>
<svg class="b" style="left:713px;top:530px" width="12" height="14"><path d="M3.2 6 V4 A2.8 2.8 0 0 1 8.8 4 V6" stroke="#e0e0e0" stroke-width="1.2" fill="none"/><rect x="1.5" y="6" width="9" height="7" stroke="#e0e0e0" stroke-width="1.2" fill="none"/><rect x="5.3" y="8.8" width="1.4" height="1.4" fill="#e0e0e0"/></svg>
</body></html>
